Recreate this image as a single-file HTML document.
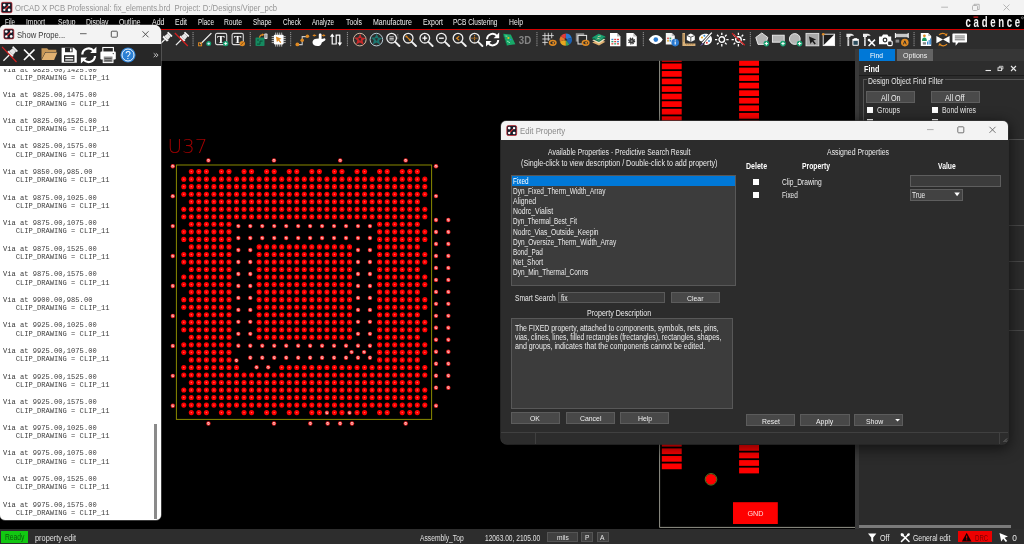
<!DOCTYPE html>
<html><head><meta charset="utf-8"><title>OrCAD X PCB Professional</title>
<style>
html,body{margin:0;padding:0;background:#000;}
body{width:1024px;height:544px;position:relative;overflow:hidden;font-family:"Liberation Sans",sans-serif;}
.t{position:absolute;white-space:pre;}
.b{position:absolute;box-sizing:border-box;}
svg{position:absolute;left:0;top:0;overflow:visible;}
#root{position:absolute;left:0;top:0;width:1024px;height:544px;overflow:hidden;will-change:transform;}
</style></head><body><div id="root">
<div class="b" style="left:0.0px;top:0.0px;width:1024.0px;height:15.2px;background:#f3f3f3;"></div>
<svg width="1024" height="16" viewBox="0 0 1024 16"><rect x="1.4" y="2.3" width="10.6" height="10.4" rx="1.4" fill="#161c2a" stroke="#c8202a" stroke-width="0.7"/><line x1="4.2" y1="10" x2="9.2" y2="5" stroke="#e03030" stroke-width="1.1"/><circle cx="4.3" cy="5.1" r="1.35" fill="#fff"/><circle cx="9.1" cy="9.9" r="1.35" fill="#fff"/><circle cx="4.3" cy="9.9" r="1.15" fill="#e8f0f0"/><circle cx="9.1" cy="5.1" r="1.15" fill="#e8f0f0"/><path d="M941.2 7.2h6.8" stroke="#a6a6a6" stroke-width="0.8" fill="none"/><rect x="972.5" y="5.5" width="5" height="5" rx="1" fill="none" stroke="#a6a6a6" stroke-width="0.8"/><path d="M974 5.5v-1.2h5.2v5.2h-1.5" fill="none" stroke="#a6a6a6" stroke-width="0.8"/><path d="M1003.5 4.5l6 6m0-6l-6 6" stroke="#a6a6a6" stroke-width="0.8" fill="none"/></svg>
<div class="t" style="left:15.0px;top:1.5px;font-size:9px;line-height:13px;color:#959595;transform-origin:0 50%;transform:scaleX(0.8550);">OrCAD X PCB Professional: fix_elements.brd  Project: D:/Designs/Viper_pcb</div>
<div class="b" style="left:0.0px;top:15.2px;width:1024.0px;height:13.6px;background:#000;"></div>
<div class="b" style="left:0.0px;top:28.7px;width:1024.0px;height:1.7px;background:#d40000;"></div>
<div class="t" style="left:5.0px;top:15.9px;font-size:8.3px;line-height:12px;color:#f0f0f0;transform-origin:0 50%;transform:scaleX(0.7478);">File</div>
<div class="t" style="left:26.0px;top:15.9px;font-size:8.3px;line-height:12px;color:#f0f0f0;transform-origin:0 50%;transform:scaleX(0.8078);">Import</div>
<div class="t" style="left:57.5px;top:15.9px;font-size:8.3px;line-height:12px;color:#f0f0f0;transform-origin:0 50%;transform:scaleX(0.8069);">Setup</div>
<div class="t" style="left:86.0px;top:15.9px;font-size:8.3px;line-height:12px;color:#f0f0f0;transform-origin:0 50%;transform:scaleX(0.8268);">Display</div>
<div class="t" style="left:119.0px;top:15.9px;font-size:8.3px;line-height:12px;color:#f0f0f0;transform-origin:0 50%;transform:scaleX(0.8176);">Outline</div>
<div class="t" style="left:151.5px;top:15.9px;font-size:8.3px;line-height:12px;color:#f0f0f0;transform-origin:0 50%;transform:scaleX(0.8465);">Add</div>
<div class="t" style="left:174.5px;top:15.9px;font-size:8.3px;line-height:12px;color:#f0f0f0;transform-origin:0 50%;transform:scaleX(0.8390);">Edit</div>
<div class="t" style="left:197.5px;top:15.9px;font-size:8.3px;line-height:12px;color:#f0f0f0;transform-origin:0 50%;transform:scaleX(0.7707);">Place</div>
<div class="t" style="left:224.0px;top:15.9px;font-size:8.3px;line-height:12px;color:#f0f0f0;transform-origin:0 50%;transform:scaleX(0.8128);">Route</div>
<div class="t" style="left:253.0px;top:15.9px;font-size:8.3px;line-height:12px;color:#f0f0f0;transform-origin:0 50%;transform:scaleX(0.7709);">Shape</div>
<div class="t" style="left:283.0px;top:15.9px;font-size:8.3px;line-height:12px;color:#f0f0f0;transform-origin:0 50%;transform:scaleX(0.7651);">Check</div>
<div class="t" style="left:311.5px;top:15.9px;font-size:8.3px;line-height:12px;color:#f0f0f0;transform-origin:0 50%;transform:scaleX(0.7451);">Analyze</div>
<div class="t" style="left:345.5px;top:15.9px;font-size:8.3px;line-height:12px;color:#f0f0f0;transform-origin:0 50%;transform:scaleX(0.8258);">Tools</div>
<div class="t" style="left:372.5px;top:15.9px;font-size:8.3px;line-height:12px;color:#f0f0f0;transform-origin:0 50%;transform:scaleX(0.8454);">Manufacture</div>
<div class="t" style="left:422.5px;top:15.9px;font-size:8.3px;line-height:12px;color:#f0f0f0;transform-origin:0 50%;transform:scaleX(0.8338);">Export</div>
<div class="t" style="left:453.0px;top:15.9px;font-size:8.3px;line-height:12px;color:#f0f0f0;transform-origin:0 50%;transform:scaleX(0.7843);">PCB Clustering</div>
<div class="t" style="left:509.0px;top:15.9px;font-size:8.3px;line-height:12px;color:#f0f0f0;transform-origin:0 50%;transform:scaleX(0.8202);">Help</div>
<svg width="1024" height="30" viewBox="0 0 1024 30"><text x="965.6" y="0" transform="translate(0,27) scale(1,1.46)" font-size="9.6" font-weight="700" font-family="Liberation Sans, sans-serif" fill="#f4f4f4" textLength="54.6" lengthAdjust="spacing">cadence</text><rect x="973.5" y="16.5" width="4.700" height="1.200" fill="#e02020"/><circle cx="1022.400" cy="17.800" r="1" fill="none" stroke="#ccc" stroke-width=".5"/></svg>
<div class="b" style="left:0.0px;top:30.4px;width:1024.0px;height:30.4px;background:#2d2d2d;"></div>
<div class="b" style="left:0.0px;top:61.0px;width:855.0px;height:468.4px;background:#000;"></div>
<div class="b" style="left:855.0px;top:48.5px;width:169.0px;height:480.9px;background:#2b2b2b;"></div>
<div class="b" style="left:855.0px;top:48.5px;width:3.6px;height:480.9px;background:#393939;"></div>
<div class="b" style="left:858.6px;top:48.5px;width:165.4px;height:12.7px;background:#363636;"></div>
<div class="b" style="left:858.8px;top:49.2px;width:36.0px;height:12.0px;background:#0078d7;"></div>
<div class="b" style="left:897.0px;top:49.2px;width:36.2px;height:12.0px;background:#646464;"></div>
<div class="t" style="left:870.3px;top:49.9px;font-size:8px;line-height:11px;color:#fff;transform-origin:0 50%;transform:scaleX(0.8290);">Find</div>
<div class="t" style="left:903.0px;top:49.9px;font-size:8px;line-height:11px;color:#f0f0f0;transform-origin:0 50%;transform:scaleX(0.8814);">Options</div>
<div class="b" style="left:858.6px;top:61.2px;width:165.4px;height:14.2px;background:#2d2d2d;"></div>
<div class="t" style="left:863.9px;top:62.8px;font-size:8.6px;line-height:12px;color:#fff;font-weight:700;transform-origin:0 50%;transform:scaleX(0.8486);">Find</div>
<div class="b" style="left:858.6px;top:75.0px;width:165.4px;height:1.0px;background:#1c1c1c;"></div>
<svg width="1024" height="130" viewBox="0 0 1024 130"><path d="M985.5 70.5h5.5" stroke="#e8e8e8" stroke-width="1.1"/><rect x="998" y="67.8" width="3.6" height="2.8" fill="none" stroke="#e8e8e8" stroke-width="0.9"/><path d="M999.3 67.5v-1.2h3.6v2.8h-1.2" fill="none" stroke="#e8e8e8" stroke-width="0.8"/><path d="M1011 66l5 5m0-5l-5 5" stroke="#e8e8e8" stroke-width="1.1"/></svg>
<div class="b" style="left:863.0px;top:79.2px;width:167.0px;height:60.8px;background:transparent;border:1px solid #555;"></div>
<div class="b" style="left:866.5px;top:77.0px;width:78.0px;height:8.0px;background:#2b2b2b;"></div>
<div class="t" style="left:867.6px;top:74.8px;font-size:8.3px;line-height:12px;color:#e8e8e8;transform-origin:0 50%;transform:scaleX(0.8256);">Design Object Find Filter</div>
<div class="b" style="left:866.0px;top:91.0px;width:49.0px;height:12.0px;background:#4a4a4a;border:1px solid #5e5e5e;"></div>
<div class="b" style="left:931.0px;top:91.0px;width:49.0px;height:12.0px;background:#4a4a4a;border:1px solid #5e5e5e;"></div>
<div class="t" style="left:880.6px;top:91.6px;font-size:8.3px;line-height:12px;color:#f0f0f0;transform-origin:0 50%;transform:scaleX(0.8672);">All On</div>
<div class="t" style="left:945.4px;top:91.6px;font-size:8.3px;line-height:12px;color:#f0f0f0;transform-origin:0 50%;transform:scaleX(0.8731);">All Off</div>
<div class="b" style="left:867.0px;top:106.6px;width:6.3px;height:6.4px;background:#fff;"></div>
<div class="b" style="left:931.7px;top:106.6px;width:6.3px;height:6.4px;background:#fff;"></div>
<div class="t" style="left:876.8px;top:104.2px;font-size:8.3px;line-height:12px;color:#e8e8e8;transform-origin:0 50%;transform:scaleX(0.8414);">Groups</div>
<div class="t" style="left:941.5px;top:104.2px;font-size:8.3px;line-height:12px;color:#e8e8e8;transform-origin:0 50%;transform:scaleX(0.8281);">Bond wires</div>
<div class="b" style="left:867.0px;top:118.6px;width:6.3px;height:6.4px;background:#fff;"></div>
<div class="b" style="left:931.7px;top:118.6px;width:6.3px;height:6.4px;background:#fff;"></div>
<div class="b" style="left:1008.5px;top:224.5px;width:15.5px;height:1.0px;background:#474747;"></div>
<div class="b" style="left:1008.5px;top:260.7px;width:15.5px;height:1.0px;background:#474747;"></div>
<div class="b" style="left:1008.5px;top:288.5px;width:15.5px;height:1.0px;background:#474747;"></div>
<div class="b" style="left:1008.5px;top:329.8px;width:15.5px;height:1.0px;background:#474747;"></div>
<div class="b" style="left:858.8px;top:524.6px;width:152.2px;height:3.6px;background:#7a7a7a;"></div>
<div class="b" style="left:0.0px;top:529.4px;width:1024.0px;height:14.6px;background:#2d2d2d;"></div>
<div class="b" style="left:1.0px;top:531.0px;width:26.5px;height:11.6px;background:#12c812;"></div>
<div class="t" style="left:4.5px;top:531.4px;font-size:8.3px;line-height:12px;color:#0a5a0a;transform-origin:0 50%;transform:scaleX(0.8128);">Ready</div>
<div class="t" style="left:35.2px;top:531.5px;font-size:8.3px;line-height:12px;color:#e0e0e0;transform-origin:0 50%;transform:scaleX(0.8887);">property edit</div>
<div class="t" style="left:419.8px;top:531.5px;font-size:8.3px;line-height:12px;color:#e0e0e0;transform-origin:0 50%;transform:scaleX(0.8097);">Assembly_Top</div>
<div class="t" style="left:484.5px;top:531.5px;font-size:8.3px;line-height:12px;color:#e0e0e0;transform-origin:0 50%;transform:scaleX(0.7959);">12063.00, 2105.00</div>
<div class="b" style="left:547.2px;top:531.5px;width:30.5px;height:10.9px;background:#404040;border:1px solid #555;"></div>
<div class="t" style="left:556.5px;top:532.4px;font-size:7.9px;line-height:11px;color:#e8e8e8;transform-origin:0 50%;transform:scaleX(0.8405);">mils</div>
<div class="b" style="left:581.0px;top:531.5px;width:11.9px;height:10.9px;background:#404040;border:1px solid #555;"></div>
<div class="t" style="left:584.7px;top:532.4px;font-size:7.9px;line-height:11px;color:#e8e8e8;transform-origin:0 50%;transform:scaleX(0.8405);">P</div>
<div class="b" style="left:596.7px;top:531.5px;width:11.9px;height:10.9px;background:#404040;border:1px solid #555;"></div>
<div class="t" style="left:600.4px;top:532.4px;font-size:7.9px;line-height:11px;color:#e8e8e8;transform-origin:0 50%;transform:scaleX(0.8405);">A</div>
<div class="t" style="left:880.0px;top:531.6px;font-size:8.3px;line-height:12px;color:#e8e8e8;transform-origin:0 50%;transform:scaleX(0.8610);">Off</div>
<div class="t" style="left:913.3px;top:531.6px;font-size:8.3px;line-height:12px;color:#e8e8e8;transform-origin:0 50%;transform:scaleX(0.8294);">General edit</div>
<div class="b" style="left:958.3px;top:531.2px;width:34.2px;height:11.3px;background:#ee0000;"></div>
<div class="t" style="left:974.8px;top:531.6px;font-size:8.3px;line-height:12px;color:#7c0000;transform-origin:0 50%;transform:scaleX(0.7340);">DRC</div>
<div class="t" style="left:1012.3px;top:531.6px;font-size:8.3px;line-height:12px;color:#e8e8e8;">0</div>
<svg width="1024" height="544" viewBox="0 0 1024 544"><path d="M868 533.5h8.4l-3.2 4v4.5l-2 -1.2v-3.3z" fill="#fff"/><path d="M901.5 534l7.5 7.5M909 534l-7.5 7.5" stroke="#fff" stroke-width="1.6" stroke-linecap="round"/><circle cx="902.3" cy="534.8" r="1.6" fill="#fff"/><circle cx="908.3" cy="534.8" r="1.3" fill="#fff"/><path d="M966.7 532.8l4.800 8.600h-9.600z" fill="#140000"/><path d="M966.7 535.600v3" stroke="#e00" stroke-width="1"/><circle cx="966.7" cy="539.800" r="0.55" fill="#e00"/><path d="M999.5 533l8.5 3.6-3.4 1.2 2.6 3.2-1.4 1.1-2.6-3.3-2 2.6z" fill="#fff"/></svg>
<svg width="1024" height="544" viewBox="0 0 1024 544" shape-rendering="auto"><path d="M659.6 60.8V527.4H855" fill="none" stroke="#a4a498" stroke-width="0.9"/><rect x="661.8" y="60.80" width="19.9" height="0.90" fill="#f00"/><rect x="661.8" y="63.50" width="19.9" height="5.75" fill="#f00"/><rect x="661.8" y="71.04" width="19.9" height="5.75" fill="#f00"/><rect x="661.8" y="78.59" width="19.9" height="5.75" fill="#f00"/><rect x="661.8" y="86.14" width="19.9" height="5.75" fill="#f00"/><rect x="661.8" y="93.69" width="19.9" height="5.75" fill="#f00"/><rect x="661.8" y="101.23" width="19.9" height="5.75" fill="#f00"/><rect x="661.8" y="108.78" width="19.9" height="5.75" fill="#f00"/><rect x="661.8" y="116.33" width="19.9" height="5.75" fill="#f00"/><rect x="661.8" y="123.87" width="19.9" height="5.75" fill="#f00"/><rect x="661.8" y="131.42" width="19.9" height="5.75" fill="#f00"/><rect x="661.8" y="138.97" width="19.9" height="5.75" fill="#f00"/><rect x="661.8" y="146.51" width="19.9" height="5.75" fill="#f00"/><rect x="661.8" y="154.06" width="19.9" height="5.75" fill="#f00"/><rect x="661.8" y="161.61" width="19.9" height="5.75" fill="#f00"/><rect x="661.8" y="169.16" width="19.9" height="5.75" fill="#f00"/><rect x="661.8" y="176.70" width="19.9" height="5.75" fill="#f00"/><rect x="661.8" y="184.25" width="19.9" height="5.75" fill="#f00"/><rect x="661.8" y="191.80" width="19.9" height="5.75" fill="#f00"/><rect x="661.8" y="199.34" width="19.9" height="5.75" fill="#f00"/><rect x="661.8" y="206.89" width="19.9" height="5.75" fill="#f00"/><rect x="661.8" y="214.44" width="19.9" height="5.75" fill="#f00"/><rect x="661.8" y="221.98" width="19.9" height="5.75" fill="#f00"/><rect x="661.8" y="229.53" width="19.9" height="5.75" fill="#f00"/><rect x="661.8" y="237.08" width="19.9" height="5.75" fill="#f00"/><rect x="661.8" y="244.62" width="19.9" height="5.75" fill="#f00"/><rect x="661.8" y="252.17" width="19.9" height="5.75" fill="#f00"/><rect x="661.8" y="259.72" width="19.9" height="5.75" fill="#f00"/><rect x="661.8" y="267.27" width="19.9" height="5.75" fill="#f00"/><rect x="661.8" y="274.81" width="19.9" height="5.75" fill="#f00"/><rect x="661.8" y="282.36" width="19.9" height="5.75" fill="#f00"/><rect x="661.8" y="289.91" width="19.9" height="5.75" fill="#f00"/><rect x="661.8" y="297.45" width="19.9" height="5.75" fill="#f00"/><rect x="661.8" y="305.00" width="19.9" height="5.75" fill="#f00"/><rect x="661.8" y="312.55" width="19.9" height="5.75" fill="#f00"/><rect x="661.8" y="320.09" width="19.9" height="5.75" fill="#f00"/><rect x="661.8" y="327.64" width="19.9" height="5.75" fill="#f00"/><rect x="661.8" y="335.19" width="19.9" height="5.75" fill="#f00"/><rect x="661.8" y="342.74" width="19.9" height="5.75" fill="#f00"/><rect x="661.8" y="350.28" width="19.9" height="5.75" fill="#f00"/><rect x="661.8" y="357.83" width="19.9" height="5.75" fill="#f00"/><rect x="661.8" y="365.38" width="19.9" height="5.75" fill="#f00"/><rect x="661.8" y="372.92" width="19.9" height="5.75" fill="#f00"/><rect x="661.8" y="380.47" width="19.9" height="5.75" fill="#f00"/><rect x="661.8" y="388.02" width="19.9" height="5.75" fill="#f00"/><rect x="661.8" y="395.56" width="19.9" height="5.75" fill="#f00"/><rect x="661.8" y="403.11" width="19.9" height="5.75" fill="#f00"/><rect x="661.8" y="410.66" width="19.9" height="5.75" fill="#f00"/><rect x="661.8" y="418.21" width="19.9" height="5.75" fill="#f00"/><rect x="661.8" y="425.75" width="19.9" height="5.75" fill="#f00"/><rect x="661.8" y="433.30" width="19.9" height="5.75" fill="#f00"/><rect x="661.8" y="440.85" width="19.9" height="5.75" fill="#f00"/><rect x="661.8" y="448.39" width="19.9" height="5.75" fill="#f00"/><rect x="661.8" y="455.94" width="19.9" height="5.75" fill="#f00"/><rect x="661.8" y="463.49" width="19.9" height="5.75" fill="#f00"/><rect x="739.1" y="60.80" width="19.9" height="5.05" fill="#f00"/><rect x="739.1" y="67.65" width="19.9" height="5.75" fill="#f00"/><rect x="739.1" y="75.19" width="19.9" height="5.75" fill="#f00"/><rect x="739.1" y="82.74" width="19.9" height="5.75" fill="#f00"/><rect x="739.1" y="90.29" width="19.9" height="5.75" fill="#f00"/><rect x="739.1" y="97.84" width="19.9" height="5.75" fill="#f00"/><rect x="739.1" y="105.38" width="19.9" height="5.75" fill="#f00"/><rect x="739.1" y="112.93" width="19.9" height="5.75" fill="#f00"/><rect x="739.1" y="120.48" width="19.9" height="5.75" fill="#f00"/><rect x="739.1" y="128.02" width="19.9" height="5.75" fill="#f00"/><rect x="739.1" y="135.57" width="19.9" height="5.75" fill="#f00"/><rect x="739.1" y="143.12" width="19.9" height="5.75" fill="#f00"/><rect x="739.1" y="150.66" width="19.9" height="5.75" fill="#f00"/><rect x="739.1" y="158.21" width="19.9" height="5.75" fill="#f00"/><rect x="739.1" y="165.76" width="19.9" height="5.75" fill="#f00"/><rect x="739.1" y="173.31" width="19.9" height="5.75" fill="#f00"/><rect x="739.1" y="180.85" width="19.9" height="5.75" fill="#f00"/><rect x="739.1" y="188.40" width="19.9" height="5.75" fill="#f00"/><rect x="739.1" y="195.95" width="19.9" height="5.75" fill="#f00"/><rect x="739.1" y="203.49" width="19.9" height="5.75" fill="#f00"/><rect x="739.1" y="211.04" width="19.9" height="5.75" fill="#f00"/><rect x="739.1" y="218.59" width="19.9" height="5.75" fill="#f00"/><rect x="739.1" y="226.13" width="19.9" height="5.75" fill="#f00"/><rect x="739.1" y="233.68" width="19.9" height="5.75" fill="#f00"/><rect x="739.1" y="241.23" width="19.9" height="5.75" fill="#f00"/><rect x="739.1" y="248.77" width="19.9" height="5.75" fill="#f00"/><rect x="739.1" y="256.32" width="19.9" height="5.75" fill="#f00"/><rect x="739.1" y="263.87" width="19.9" height="5.75" fill="#f00"/><rect x="739.1" y="271.42" width="19.9" height="5.75" fill="#f00"/><rect x="739.1" y="278.96" width="19.9" height="5.75" fill="#f00"/><rect x="739.1" y="286.51" width="19.9" height="5.75" fill="#f00"/><rect x="739.1" y="294.06" width="19.9" height="5.75" fill="#f00"/><rect x="739.1" y="301.60" width="19.9" height="5.75" fill="#f00"/><rect x="739.1" y="309.15" width="19.9" height="5.75" fill="#f00"/><rect x="739.1" y="316.70" width="19.9" height="5.75" fill="#f00"/><rect x="739.1" y="324.25" width="19.9" height="5.75" fill="#f00"/><rect x="739.1" y="331.79" width="19.9" height="5.75" fill="#f00"/><rect x="739.1" y="339.34" width="19.9" height="5.75" fill="#f00"/><rect x="739.1" y="346.89" width="19.9" height="5.75" fill="#f00"/><rect x="739.1" y="354.43" width="19.9" height="5.75" fill="#f00"/><rect x="739.1" y="361.98" width="19.9" height="5.75" fill="#f00"/><rect x="739.1" y="369.53" width="19.9" height="5.75" fill="#f00"/><rect x="739.1" y="377.07" width="19.9" height="5.75" fill="#f00"/><rect x="739.1" y="384.62" width="19.9" height="5.75" fill="#f00"/><rect x="739.1" y="392.17" width="19.9" height="5.75" fill="#f00"/><rect x="739.1" y="399.72" width="19.9" height="5.75" fill="#f00"/><rect x="739.1" y="407.26" width="19.9" height="5.75" fill="#f00"/><rect x="739.1" y="414.81" width="19.9" height="5.75" fill="#f00"/><rect x="739.1" y="422.36" width="19.9" height="5.75" fill="#f00"/><rect x="739.1" y="429.90" width="19.9" height="5.75" fill="#f00"/><rect x="739.1" y="437.45" width="19.9" height="5.75" fill="#f00"/><rect x="739.1" y="445.00" width="19.9" height="5.75" fill="#f00"/><rect x="739.1" y="452.54" width="19.9" height="5.75" fill="#f00"/><rect x="739.1" y="460.09" width="19.9" height="5.75" fill="#f00"/><rect x="739.1" y="467.64" width="19.9" height="5.75" fill="#f00"/><rect x="733" y="502.2" width="44.8" height="21.8" fill="#f00"/><text x="755.5" y="516.3" font-size="7.2" fill="#ffd8d8" text-anchor="middle" font-family="Liberation Sans, sans-serif">GND</text><circle cx="711" cy="479.3" r="5.4" fill="#f00"/><circle cx="711" cy="479.3" r="5.8" fill="none" stroke="#6e8a2a" stroke-width="0.8"/><rect x="176.4" y="165" width="255.2" height="254.4" fill="none" stroke="#8a8a00" stroke-width="1"/><text x="167.4" y="152.9" font-size="19.4" fill="#a00000" font-family="DejaVu Sans Light, DejaVu Sans, Liberation Sans, sans-serif" font-weight="200" textLength="40.2" lengthAdjust="spacingAndGlyphs">U37</text><circle cx="191.33" cy="171.60" r="2.55" fill="#f00"/><circle cx="191.33" cy="171.60" r="0.7" fill="#ff6a6a"/><circle cx="198.86" cy="171.60" r="2.55" fill="#f00"/><circle cx="198.86" cy="171.60" r="0.7" fill="#ff6a6a"/><circle cx="206.40" cy="171.60" r="2.55" fill="#f00"/><circle cx="206.40" cy="171.60" r="0.7" fill="#ff6a6a"/><circle cx="221.46" cy="171.60" r="2.55" fill="#f00"/><circle cx="221.46" cy="171.60" r="0.7" fill="#ff6a6a"/><circle cx="228.99" cy="171.60" r="2.55" fill="#f00"/><circle cx="228.99" cy="171.60" r="0.7" fill="#ff6a6a"/><circle cx="244.06" cy="171.60" r="2.55" fill="#f00"/><circle cx="244.06" cy="171.60" r="0.7" fill="#ff6a6a"/><circle cx="251.59" cy="171.60" r="2.55" fill="#f00"/><circle cx="251.59" cy="171.60" r="0.7" fill="#ff6a6a"/><circle cx="266.65" cy="171.60" r="2.55" fill="#f00"/><circle cx="266.65" cy="171.60" r="0.7" fill="#ff6a6a"/><circle cx="274.18" cy="171.60" r="2.55" fill="#f00"/><circle cx="274.18" cy="171.60" r="0.7" fill="#ff6a6a"/><circle cx="289.25" cy="171.60" r="2.55" fill="#f00"/><circle cx="289.25" cy="171.60" r="0.7" fill="#ff6a6a"/><circle cx="296.78" cy="171.60" r="2.55" fill="#f00"/><circle cx="296.78" cy="171.60" r="0.7" fill="#ff6a6a"/><circle cx="311.84" cy="171.60" r="2.55" fill="#f00"/><circle cx="311.84" cy="171.60" r="0.7" fill="#ff6a6a"/><circle cx="319.38" cy="171.60" r="2.55" fill="#f00"/><circle cx="319.38" cy="171.60" r="0.7" fill="#ff6a6a"/><circle cx="334.44" cy="171.60" r="2.55" fill="#f00"/><circle cx="334.44" cy="171.60" r="0.7" fill="#ff6a6a"/><circle cx="341.97" cy="171.60" r="2.55" fill="#f00"/><circle cx="341.97" cy="171.60" r="0.7" fill="#ff6a6a"/><circle cx="357.04" cy="171.60" r="2.55" fill="#f00"/><circle cx="357.04" cy="171.60" r="0.7" fill="#ff6a6a"/><circle cx="364.57" cy="171.60" r="2.55" fill="#f00"/><circle cx="364.57" cy="171.60" r="0.7" fill="#ff6a6a"/><circle cx="379.63" cy="171.60" r="2.55" fill="#f00"/><circle cx="379.63" cy="171.60" r="0.7" fill="#ff6a6a"/><circle cx="387.16" cy="171.60" r="2.55" fill="#f00"/><circle cx="387.16" cy="171.60" r="0.7" fill="#ff6a6a"/><circle cx="402.23" cy="171.60" r="2.55" fill="#f00"/><circle cx="402.23" cy="171.60" r="0.7" fill="#ff6a6a"/><circle cx="409.76" cy="171.60" r="2.55" fill="#f00"/><circle cx="409.76" cy="171.60" r="0.7" fill="#ff6a6a"/><circle cx="417.29" cy="171.60" r="2.55" fill="#f00"/><circle cx="417.29" cy="171.60" r="0.7" fill="#ff6a6a"/><circle cx="183.80" cy="179.13" r="2.55" fill="#f00"/><circle cx="183.80" cy="179.13" r="0.7" fill="#ff6a6a"/><circle cx="191.33" cy="179.13" r="2.55" fill="#f00"/><circle cx="191.33" cy="179.13" r="0.7" fill="#ff6a6a"/><circle cx="198.86" cy="179.13" r="2.55" fill="#f00"/><circle cx="198.86" cy="179.13" r="0.7" fill="#ff6a6a"/><circle cx="206.40" cy="179.13" r="2.55" fill="#f00"/><circle cx="206.40" cy="179.13" r="0.7" fill="#ff6a6a"/><circle cx="213.93" cy="179.13" r="2.55" fill="#f00"/><circle cx="213.93" cy="179.13" r="0.7" fill="#ff6a6a"/><circle cx="221.46" cy="179.13" r="2.55" fill="#f00"/><circle cx="221.46" cy="179.13" r="0.7" fill="#ff6a6a"/><circle cx="228.99" cy="179.13" r="2.55" fill="#f00"/><circle cx="228.99" cy="179.13" r="0.7" fill="#ff6a6a"/><circle cx="236.52" cy="179.13" r="2.55" fill="#f00"/><circle cx="236.52" cy="179.13" r="0.7" fill="#ff6a6a"/><circle cx="244.06" cy="179.13" r="2.55" fill="#f00"/><circle cx="244.06" cy="179.13" r="0.7" fill="#ff6a6a"/><circle cx="251.59" cy="179.13" r="2.55" fill="#f00"/><circle cx="251.59" cy="179.13" r="0.7" fill="#ff6a6a"/><circle cx="259.12" cy="179.13" r="2.55" fill="#f00"/><circle cx="259.12" cy="179.13" r="0.7" fill="#ff6a6a"/><circle cx="266.65" cy="179.13" r="2.55" fill="#f00"/><circle cx="266.65" cy="179.13" r="0.7" fill="#ff6a6a"/><circle cx="274.18" cy="179.13" r="2.55" fill="#f00"/><circle cx="274.18" cy="179.13" r="0.7" fill="#ff6a6a"/><circle cx="281.72" cy="179.13" r="2.55" fill="#f00"/><circle cx="281.72" cy="179.13" r="0.7" fill="#ff6a6a"/><circle cx="289.25" cy="179.13" r="2.55" fill="#f00"/><circle cx="289.25" cy="179.13" r="0.7" fill="#ff6a6a"/><circle cx="296.78" cy="179.13" r="2.55" fill="#f00"/><circle cx="296.78" cy="179.13" r="0.7" fill="#ff6a6a"/><circle cx="304.31" cy="179.13" r="2.55" fill="#f00"/><circle cx="304.31" cy="179.13" r="0.7" fill="#ff6a6a"/><circle cx="311.84" cy="179.13" r="2.55" fill="#f00"/><circle cx="311.84" cy="179.13" r="0.7" fill="#ff6a6a"/><circle cx="319.38" cy="179.13" r="2.55" fill="#f00"/><circle cx="319.38" cy="179.13" r="0.7" fill="#ff6a6a"/><circle cx="326.91" cy="179.13" r="2.55" fill="#f00"/><circle cx="326.91" cy="179.13" r="0.7" fill="#ff6a6a"/><circle cx="334.44" cy="179.13" r="2.55" fill="#f00"/><circle cx="334.44" cy="179.13" r="0.7" fill="#ff6a6a"/><circle cx="341.97" cy="179.13" r="2.55" fill="#f00"/><circle cx="341.97" cy="179.13" r="0.7" fill="#ff6a6a"/><circle cx="349.50" cy="179.13" r="2.55" fill="#f00"/><circle cx="349.50" cy="179.13" r="0.7" fill="#ff6a6a"/><circle cx="357.04" cy="179.13" r="2.55" fill="#f00"/><circle cx="357.04" cy="179.13" r="0.7" fill="#ff6a6a"/><circle cx="364.57" cy="179.13" r="2.55" fill="#f00"/><circle cx="364.57" cy="179.13" r="0.7" fill="#ff6a6a"/><circle cx="372.10" cy="179.13" r="2.55" fill="#f00"/><circle cx="372.10" cy="179.13" r="0.7" fill="#ff6a6a"/><circle cx="379.63" cy="179.13" r="2.55" fill="#f00"/><circle cx="379.63" cy="179.13" r="0.7" fill="#ff6a6a"/><circle cx="387.16" cy="179.13" r="2.55" fill="#f00"/><circle cx="387.16" cy="179.13" r="0.7" fill="#ff6a6a"/><circle cx="394.70" cy="179.13" r="2.55" fill="#f00"/><circle cx="394.70" cy="179.13" r="0.7" fill="#ff6a6a"/><circle cx="402.23" cy="179.13" r="2.55" fill="#f00"/><circle cx="402.23" cy="179.13" r="0.7" fill="#ff6a6a"/><circle cx="409.76" cy="179.13" r="2.55" fill="#f00"/><circle cx="409.76" cy="179.13" r="0.7" fill="#ff6a6a"/><circle cx="417.29" cy="179.13" r="2.55" fill="#f00"/><circle cx="417.29" cy="179.13" r="0.7" fill="#ff6a6a"/><circle cx="424.82" cy="179.13" r="2.55" fill="#f00"/><circle cx="424.82" cy="179.13" r="0.7" fill="#ff6a6a"/><circle cx="183.80" cy="186.66" r="2.55" fill="#f00"/><circle cx="183.80" cy="186.66" r="0.7" fill="#ff6a6a"/><circle cx="191.33" cy="186.66" r="2.55" fill="#f00"/><circle cx="191.33" cy="186.66" r="0.7" fill="#ff6a6a"/><circle cx="198.86" cy="186.66" r="2.55" fill="#f00"/><circle cx="198.86" cy="186.66" r="0.7" fill="#ff6a6a"/><circle cx="206.40" cy="186.66" r="2.55" fill="#f00"/><circle cx="206.40" cy="186.66" r="0.7" fill="#ff6a6a"/><circle cx="213.93" cy="186.66" r="2.55" fill="#f00"/><circle cx="213.93" cy="186.66" r="0.7" fill="#ff6a6a"/><circle cx="221.46" cy="186.66" r="2.55" fill="#f00"/><circle cx="221.46" cy="186.66" r="0.7" fill="#ff6a6a"/><circle cx="228.99" cy="186.66" r="2.55" fill="#f00"/><circle cx="228.99" cy="186.66" r="0.7" fill="#ff6a6a"/><circle cx="236.52" cy="186.66" r="2.55" fill="#f00"/><circle cx="236.52" cy="186.66" r="0.7" fill="#ff6a6a"/><circle cx="244.06" cy="186.66" r="2.55" fill="#f00"/><circle cx="244.06" cy="186.66" r="0.7" fill="#ff6a6a"/><circle cx="251.59" cy="186.66" r="2.55" fill="#f00"/><circle cx="251.59" cy="186.66" r="0.7" fill="#ff6a6a"/><circle cx="259.12" cy="186.66" r="2.55" fill="#f00"/><circle cx="259.12" cy="186.66" r="0.7" fill="#ff6a6a"/><circle cx="266.65" cy="186.66" r="2.55" fill="#f00"/><circle cx="266.65" cy="186.66" r="0.7" fill="#ff6a6a"/><circle cx="274.18" cy="186.66" r="2.55" fill="#f00"/><circle cx="274.18" cy="186.66" r="0.7" fill="#ff6a6a"/><circle cx="281.72" cy="186.66" r="2.55" fill="#f00"/><circle cx="281.72" cy="186.66" r="0.7" fill="#ff6a6a"/><circle cx="289.25" cy="186.66" r="2.55" fill="#f00"/><circle cx="289.25" cy="186.66" r="0.7" fill="#ff6a6a"/><circle cx="296.78" cy="186.66" r="2.55" fill="#f00"/><circle cx="296.78" cy="186.66" r="0.7" fill="#ff6a6a"/><circle cx="304.31" cy="186.66" r="2.55" fill="#f00"/><circle cx="304.31" cy="186.66" r="0.7" fill="#ff6a6a"/><circle cx="311.84" cy="186.66" r="2.55" fill="#f00"/><circle cx="311.84" cy="186.66" r="0.7" fill="#ff6a6a"/><circle cx="319.38" cy="186.66" r="2.55" fill="#f00"/><circle cx="319.38" cy="186.66" r="0.7" fill="#ff6a6a"/><circle cx="326.91" cy="186.66" r="2.55" fill="#f00"/><circle cx="326.91" cy="186.66" r="0.7" fill="#ff6a6a"/><circle cx="334.44" cy="186.66" r="2.55" fill="#f00"/><circle cx="334.44" cy="186.66" r="0.7" fill="#ff6a6a"/><circle cx="341.97" cy="186.66" r="2.55" fill="#f00"/><circle cx="341.97" cy="186.66" r="0.7" fill="#ff6a6a"/><circle cx="349.50" cy="186.66" r="2.55" fill="#f00"/><circle cx="349.50" cy="186.66" r="0.7" fill="#ff6a6a"/><circle cx="357.04" cy="186.66" r="2.55" fill="#f00"/><circle cx="357.04" cy="186.66" r="0.7" fill="#ff6a6a"/><circle cx="364.57" cy="186.66" r="2.55" fill="#f00"/><circle cx="364.57" cy="186.66" r="0.7" fill="#ff6a6a"/><circle cx="372.10" cy="186.66" r="2.55" fill="#f00"/><circle cx="372.10" cy="186.66" r="0.7" fill="#ff6a6a"/><circle cx="379.63" cy="186.66" r="2.55" fill="#f00"/><circle cx="379.63" cy="186.66" r="0.7" fill="#ff6a6a"/><circle cx="387.16" cy="186.66" r="2.55" fill="#f00"/><circle cx="387.16" cy="186.66" r="0.7" fill="#ff6a6a"/><circle cx="394.70" cy="186.66" r="2.55" fill="#f00"/><circle cx="394.70" cy="186.66" r="0.7" fill="#ff6a6a"/><circle cx="402.23" cy="186.66" r="2.55" fill="#f00"/><circle cx="402.23" cy="186.66" r="0.7" fill="#ff6a6a"/><circle cx="409.76" cy="186.66" r="2.55" fill="#f00"/><circle cx="409.76" cy="186.66" r="0.7" fill="#ff6a6a"/><circle cx="417.29" cy="186.66" r="2.55" fill="#f00"/><circle cx="417.29" cy="186.66" r="0.7" fill="#ff6a6a"/><circle cx="424.82" cy="186.66" r="2.55" fill="#f00"/><circle cx="424.82" cy="186.66" r="0.7" fill="#ff6a6a"/><circle cx="183.80" cy="194.20" r="2.55" fill="#f00"/><circle cx="183.80" cy="194.20" r="0.7" fill="#ff6a6a"/><circle cx="191.33" cy="194.20" r="2.55" fill="#f00"/><circle cx="191.33" cy="194.20" r="0.7" fill="#ff6a6a"/><circle cx="198.86" cy="194.20" r="2.55" fill="#f00"/><circle cx="198.86" cy="194.20" r="0.7" fill="#ff6a6a"/><circle cx="206.40" cy="194.20" r="2.55" fill="#f00"/><circle cx="206.40" cy="194.20" r="0.7" fill="#ff6a6a"/><circle cx="213.93" cy="194.20" r="2.55" fill="#f00"/><circle cx="213.93" cy="194.20" r="0.7" fill="#ff6a6a"/><circle cx="221.46" cy="194.20" r="2.55" fill="#f00"/><circle cx="221.46" cy="194.20" r="0.7" fill="#ff6a6a"/><circle cx="228.99" cy="194.20" r="2.55" fill="#f00"/><circle cx="228.99" cy="194.20" r="0.7" fill="#ff6a6a"/><circle cx="236.52" cy="194.20" r="2.55" fill="#f00"/><circle cx="236.52" cy="194.20" r="0.7" fill="#ff6a6a"/><circle cx="244.06" cy="194.20" r="2.55" fill="#f00"/><circle cx="244.06" cy="194.20" r="0.7" fill="#ff6a6a"/><circle cx="251.59" cy="194.20" r="2.55" fill="#f00"/><circle cx="251.59" cy="194.20" r="0.7" fill="#ff6a6a"/><circle cx="259.12" cy="194.20" r="2.55" fill="#f00"/><circle cx="259.12" cy="194.20" r="0.7" fill="#ff6a6a"/><circle cx="266.65" cy="194.20" r="2.55" fill="#f00"/><circle cx="266.65" cy="194.20" r="0.7" fill="#ff6a6a"/><circle cx="274.18" cy="194.20" r="2.55" fill="#f00"/><circle cx="274.18" cy="194.20" r="0.7" fill="#ff6a6a"/><circle cx="281.72" cy="194.20" r="2.55" fill="#f00"/><circle cx="281.72" cy="194.20" r="0.7" fill="#ff6a6a"/><circle cx="289.25" cy="194.20" r="2.55" fill="#f00"/><circle cx="289.25" cy="194.20" r="0.7" fill="#ff6a6a"/><circle cx="296.78" cy="194.20" r="2.55" fill="#f00"/><circle cx="296.78" cy="194.20" r="0.7" fill="#ff6a6a"/><circle cx="304.31" cy="194.20" r="2.55" fill="#f00"/><circle cx="304.31" cy="194.20" r="0.7" fill="#ff6a6a"/><circle cx="311.84" cy="194.20" r="2.55" fill="#f00"/><circle cx="311.84" cy="194.20" r="0.7" fill="#ff6a6a"/><circle cx="319.38" cy="194.20" r="2.55" fill="#f00"/><circle cx="319.38" cy="194.20" r="0.7" fill="#ff6a6a"/><circle cx="326.91" cy="194.20" r="2.55" fill="#f00"/><circle cx="326.91" cy="194.20" r="0.7" fill="#ff6a6a"/><circle cx="334.44" cy="194.20" r="2.55" fill="#f00"/><circle cx="334.44" cy="194.20" r="0.7" fill="#ff6a6a"/><circle cx="341.97" cy="194.20" r="2.55" fill="#f00"/><circle cx="341.97" cy="194.20" r="0.7" fill="#ff6a6a"/><circle cx="349.50" cy="194.20" r="2.55" fill="#f00"/><circle cx="349.50" cy="194.20" r="0.7" fill="#ff6a6a"/><circle cx="357.04" cy="194.20" r="2.55" fill="#f00"/><circle cx="357.04" cy="194.20" r="0.7" fill="#ff6a6a"/><circle cx="364.57" cy="194.20" r="2.55" fill="#f00"/><circle cx="364.57" cy="194.20" r="0.7" fill="#ff6a6a"/><circle cx="372.10" cy="194.20" r="2.55" fill="#f00"/><circle cx="372.10" cy="194.20" r="0.7" fill="#ff6a6a"/><circle cx="379.63" cy="194.20" r="2.55" fill="#f00"/><circle cx="379.63" cy="194.20" r="0.7" fill="#ff6a6a"/><circle cx="387.16" cy="194.20" r="2.55" fill="#f00"/><circle cx="387.16" cy="194.20" r="0.7" fill="#ff6a6a"/><circle cx="394.70" cy="194.20" r="2.55" fill="#f00"/><circle cx="394.70" cy="194.20" r="0.7" fill="#ff6a6a"/><circle cx="402.23" cy="194.20" r="2.55" fill="#f00"/><circle cx="402.23" cy="194.20" r="0.7" fill="#ff6a6a"/><circle cx="409.76" cy="194.20" r="2.55" fill="#f00"/><circle cx="409.76" cy="194.20" r="0.7" fill="#ff6a6a"/><circle cx="417.29" cy="194.20" r="2.55" fill="#f00"/><circle cx="417.29" cy="194.20" r="0.7" fill="#ff6a6a"/><circle cx="424.82" cy="194.20" r="2.55" fill="#f00"/><circle cx="424.82" cy="194.20" r="0.7" fill="#ff6a6a"/><circle cx="191.33" cy="201.73" r="2.55" fill="#f00"/><circle cx="191.33" cy="201.73" r="0.7" fill="#ff6a6a"/><circle cx="198.86" cy="201.73" r="2.55" fill="#f00"/><circle cx="198.86" cy="201.73" r="0.7" fill="#ff6a6a"/><circle cx="206.40" cy="201.73" r="2.55" fill="#f00"/><circle cx="206.40" cy="201.73" r="0.7" fill="#ff6a6a"/><circle cx="213.93" cy="201.73" r="2.55" fill="#f00"/><circle cx="213.93" cy="201.73" r="0.7" fill="#ff6a6a"/><circle cx="221.46" cy="201.73" r="2.55" fill="#f00"/><circle cx="221.46" cy="201.73" r="0.7" fill="#ff6a6a"/><circle cx="228.99" cy="201.73" r="2.55" fill="#f00"/><circle cx="228.99" cy="201.73" r="0.7" fill="#ff6a6a"/><circle cx="236.52" cy="201.73" r="2.55" fill="#f00"/><circle cx="236.52" cy="201.73" r="0.7" fill="#ff6a6a"/><circle cx="244.06" cy="201.73" r="2.55" fill="#f00"/><circle cx="244.06" cy="201.73" r="0.7" fill="#ff6a6a"/><circle cx="251.59" cy="201.73" r="2.55" fill="#f00"/><circle cx="251.59" cy="201.73" r="0.7" fill="#ff6a6a"/><circle cx="259.12" cy="201.73" r="2.55" fill="#f00"/><circle cx="259.12" cy="201.73" r="0.7" fill="#ff6a6a"/><circle cx="266.65" cy="201.73" r="2.55" fill="#f00"/><circle cx="266.65" cy="201.73" r="0.7" fill="#ff6a6a"/><circle cx="274.18" cy="201.73" r="2.55" fill="#f00"/><circle cx="274.18" cy="201.73" r="0.7" fill="#ff6a6a"/><circle cx="281.72" cy="201.73" r="2.55" fill="#f00"/><circle cx="281.72" cy="201.73" r="0.7" fill="#ff6a6a"/><circle cx="289.25" cy="201.73" r="2.55" fill="#f00"/><circle cx="289.25" cy="201.73" r="0.7" fill="#ff6a6a"/><circle cx="296.78" cy="201.73" r="2.55" fill="#f00"/><circle cx="296.78" cy="201.73" r="0.7" fill="#ff6a6a"/><circle cx="304.31" cy="201.73" r="2.55" fill="#f00"/><circle cx="304.31" cy="201.73" r="0.7" fill="#ff6a6a"/><circle cx="311.84" cy="201.73" r="2.55" fill="#f00"/><circle cx="311.84" cy="201.73" r="0.7" fill="#ff6a6a"/><circle cx="319.38" cy="201.73" r="2.55" fill="#f00"/><circle cx="319.38" cy="201.73" r="0.7" fill="#ff6a6a"/><circle cx="326.91" cy="201.73" r="2.55" fill="#f00"/><circle cx="326.91" cy="201.73" r="0.7" fill="#ff6a6a"/><circle cx="334.44" cy="201.73" r="2.55" fill="#f00"/><circle cx="334.44" cy="201.73" r="0.7" fill="#ff6a6a"/><circle cx="341.97" cy="201.73" r="2.55" fill="#f00"/><circle cx="341.97" cy="201.73" r="0.7" fill="#ff6a6a"/><circle cx="349.50" cy="201.73" r="2.55" fill="#f00"/><circle cx="349.50" cy="201.73" r="0.7" fill="#ff6a6a"/><circle cx="357.04" cy="201.73" r="2.55" fill="#f00"/><circle cx="357.04" cy="201.73" r="0.7" fill="#ff6a6a"/><circle cx="364.57" cy="201.73" r="2.55" fill="#f00"/><circle cx="364.57" cy="201.73" r="0.7" fill="#ff6a6a"/><circle cx="372.10" cy="201.73" r="2.55" fill="#f00"/><circle cx="372.10" cy="201.73" r="0.7" fill="#ff6a6a"/><circle cx="379.63" cy="201.73" r="2.55" fill="#f00"/><circle cx="379.63" cy="201.73" r="0.7" fill="#ff6a6a"/><circle cx="387.16" cy="201.73" r="2.55" fill="#f00"/><circle cx="387.16" cy="201.73" r="0.7" fill="#ff6a6a"/><circle cx="394.70" cy="201.73" r="2.55" fill="#f00"/><circle cx="394.70" cy="201.73" r="0.7" fill="#ff6a6a"/><circle cx="402.23" cy="201.73" r="2.55" fill="#f00"/><circle cx="402.23" cy="201.73" r="0.7" fill="#ff6a6a"/><circle cx="409.76" cy="201.73" r="2.55" fill="#f00"/><circle cx="409.76" cy="201.73" r="0.7" fill="#ff6a6a"/><circle cx="417.29" cy="201.73" r="2.55" fill="#f00"/><circle cx="417.29" cy="201.73" r="0.7" fill="#ff6a6a"/><circle cx="183.80" cy="209.26" r="2.55" fill="#f00"/><circle cx="183.80" cy="209.26" r="0.7" fill="#ff6a6a"/><circle cx="191.33" cy="209.26" r="2.55" fill="#f00"/><circle cx="191.33" cy="209.26" r="0.7" fill="#ff6a6a"/><circle cx="198.86" cy="209.26" r="2.55" fill="#f00"/><circle cx="198.86" cy="209.26" r="0.7" fill="#ff6a6a"/><circle cx="206.40" cy="209.26" r="2.55" fill="#f00"/><circle cx="206.40" cy="209.26" r="0.7" fill="#ff6a6a"/><circle cx="213.93" cy="209.26" r="2.55" fill="#f00"/><circle cx="213.93" cy="209.26" r="0.7" fill="#ff6a6a"/><circle cx="221.46" cy="209.26" r="2.55" fill="#f00"/><circle cx="221.46" cy="209.26" r="0.7" fill="#ff6a6a"/><circle cx="228.99" cy="209.26" r="2.55" fill="#f00"/><circle cx="228.99" cy="209.26" r="0.7" fill="#ff6a6a"/><circle cx="236.52" cy="209.26" r="2.55" fill="#f00"/><circle cx="236.52" cy="209.26" r="0.7" fill="#ff6a6a"/><circle cx="244.06" cy="209.26" r="2.55" fill="#f00"/><circle cx="244.06" cy="209.26" r="0.7" fill="#ff6a6a"/><circle cx="251.59" cy="209.26" r="2.55" fill="#f00"/><circle cx="251.59" cy="209.26" r="0.7" fill="#ff6a6a"/><circle cx="259.12" cy="209.26" r="2.55" fill="#f00"/><circle cx="259.12" cy="209.26" r="0.7" fill="#ff6a6a"/><circle cx="266.65" cy="209.26" r="2.55" fill="#f00"/><circle cx="266.65" cy="209.26" r="0.7" fill="#ff6a6a"/><circle cx="274.18" cy="209.26" r="2.55" fill="#f00"/><circle cx="274.18" cy="209.26" r="0.7" fill="#ff6a6a"/><circle cx="281.72" cy="209.26" r="2.55" fill="#f00"/><circle cx="281.72" cy="209.26" r="0.7" fill="#ff6a6a"/><circle cx="289.25" cy="209.26" r="2.55" fill="#f00"/><circle cx="289.25" cy="209.26" r="0.7" fill="#ff6a6a"/><circle cx="296.78" cy="209.26" r="2.55" fill="#f00"/><circle cx="296.78" cy="209.26" r="0.7" fill="#ff6a6a"/><circle cx="304.31" cy="209.26" r="2.55" fill="#f00"/><circle cx="304.31" cy="209.26" r="0.7" fill="#ff6a6a"/><circle cx="311.84" cy="209.26" r="2.55" fill="#f00"/><circle cx="311.84" cy="209.26" r="0.7" fill="#ff6a6a"/><circle cx="319.38" cy="209.26" r="2.55" fill="#f00"/><circle cx="319.38" cy="209.26" r="0.7" fill="#ff6a6a"/><circle cx="326.91" cy="209.26" r="2.55" fill="#f00"/><circle cx="326.91" cy="209.26" r="0.7" fill="#ff6a6a"/><circle cx="334.44" cy="209.26" r="2.55" fill="#f00"/><circle cx="334.44" cy="209.26" r="0.7" fill="#ff6a6a"/><circle cx="341.97" cy="209.26" r="2.55" fill="#f00"/><circle cx="341.97" cy="209.26" r="0.7" fill="#ff6a6a"/><circle cx="349.50" cy="209.26" r="2.55" fill="#f00"/><circle cx="349.50" cy="209.26" r="0.7" fill="#ff6a6a"/><circle cx="357.04" cy="209.26" r="2.55" fill="#f00"/><circle cx="357.04" cy="209.26" r="0.7" fill="#ff6a6a"/><circle cx="364.57" cy="209.26" r="2.55" fill="#f00"/><circle cx="364.57" cy="209.26" r="0.7" fill="#ff6a6a"/><circle cx="372.10" cy="209.26" r="2.55" fill="#f00"/><circle cx="372.10" cy="209.26" r="0.7" fill="#ff6a6a"/><circle cx="379.63" cy="209.26" r="2.55" fill="#f00"/><circle cx="379.63" cy="209.26" r="0.7" fill="#ff6a6a"/><circle cx="387.16" cy="209.26" r="2.55" fill="#f00"/><circle cx="387.16" cy="209.26" r="0.7" fill="#ff6a6a"/><circle cx="394.70" cy="209.26" r="2.55" fill="#f00"/><circle cx="394.70" cy="209.26" r="0.7" fill="#ff6a6a"/><circle cx="402.23" cy="209.26" r="2.55" fill="#f00"/><circle cx="402.23" cy="209.26" r="0.7" fill="#ff6a6a"/><circle cx="409.76" cy="209.26" r="2.55" fill="#f00"/><circle cx="409.76" cy="209.26" r="0.7" fill="#ff6a6a"/><circle cx="417.29" cy="209.26" r="2.55" fill="#f00"/><circle cx="417.29" cy="209.26" r="0.7" fill="#ff6a6a"/><circle cx="424.82" cy="209.26" r="2.55" fill="#f00"/><circle cx="424.82" cy="209.26" r="0.7" fill="#ff6a6a"/><circle cx="183.80" cy="216.79" r="2.55" fill="#f00"/><circle cx="183.80" cy="216.79" r="0.7" fill="#ff6a6a"/><circle cx="191.33" cy="216.79" r="2.55" fill="#f00"/><circle cx="191.33" cy="216.79" r="0.7" fill="#ff6a6a"/><circle cx="198.86" cy="216.79" r="2.55" fill="#f00"/><circle cx="198.86" cy="216.79" r="0.7" fill="#ff6a6a"/><circle cx="206.40" cy="216.79" r="2.55" fill="#f00"/><circle cx="206.40" cy="216.79" r="0.7" fill="#ff6a6a"/><circle cx="213.93" cy="216.79" r="2.55" fill="#f00"/><circle cx="213.93" cy="216.79" r="0.7" fill="#ff6a6a"/><circle cx="221.46" cy="216.79" r="2.55" fill="#f00"/><circle cx="221.46" cy="216.79" r="0.7" fill="#ff6a6a"/><circle cx="228.99" cy="216.79" r="2.55" fill="#f00"/><circle cx="228.99" cy="216.79" r="0.7" fill="#ff6a6a"/><circle cx="236.52" cy="216.79" r="2.55" fill="#f00"/><circle cx="236.52" cy="216.79" r="0.7" fill="#ff6a6a"/><circle cx="244.06" cy="216.79" r="2.55" fill="#f00"/><circle cx="244.06" cy="216.79" r="0.7" fill="#ff6a6a"/><circle cx="251.59" cy="216.79" r="2.55" fill="#f00"/><circle cx="251.59" cy="216.79" r="0.7" fill="#ff6a6a"/><circle cx="259.12" cy="216.79" r="2.55" fill="#f00"/><circle cx="259.12" cy="216.79" r="0.7" fill="#ff6a6a"/><circle cx="266.65" cy="216.79" r="2.55" fill="#f00"/><circle cx="266.65" cy="216.79" r="0.7" fill="#ff6a6a"/><circle cx="274.18" cy="216.79" r="2.55" fill="#f00"/><circle cx="274.18" cy="216.79" r="0.7" fill="#ff6a6a"/><circle cx="281.72" cy="216.79" r="2.55" fill="#f00"/><circle cx="281.72" cy="216.79" r="0.7" fill="#ff6a6a"/><circle cx="289.25" cy="216.79" r="2.55" fill="#f00"/><circle cx="289.25" cy="216.79" r="0.7" fill="#ff6a6a"/><circle cx="296.78" cy="216.79" r="2.55" fill="#f00"/><circle cx="296.78" cy="216.79" r="0.7" fill="#ff6a6a"/><circle cx="304.31" cy="216.79" r="2.55" fill="#f00"/><circle cx="304.31" cy="216.79" r="0.7" fill="#ff6a6a"/><circle cx="311.84" cy="216.79" r="2.55" fill="#f00"/><circle cx="311.84" cy="216.79" r="0.7" fill="#ff6a6a"/><circle cx="319.38" cy="216.79" r="2.55" fill="#f00"/><circle cx="319.38" cy="216.79" r="0.7" fill="#ff6a6a"/><circle cx="326.91" cy="216.79" r="2.55" fill="#f00"/><circle cx="326.91" cy="216.79" r="0.7" fill="#ff6a6a"/><circle cx="334.44" cy="216.79" r="2.55" fill="#f00"/><circle cx="334.44" cy="216.79" r="0.7" fill="#ff6a6a"/><circle cx="341.97" cy="216.79" r="2.55" fill="#f00"/><circle cx="341.97" cy="216.79" r="0.7" fill="#ff6a6a"/><circle cx="349.50" cy="216.79" r="2.55" fill="#f00"/><circle cx="349.50" cy="216.79" r="0.7" fill="#ff6a6a"/><circle cx="357.04" cy="216.79" r="2.55" fill="#f00"/><circle cx="357.04" cy="216.79" r="0.7" fill="#ff6a6a"/><circle cx="364.57" cy="216.79" r="2.55" fill="#f00"/><circle cx="364.57" cy="216.79" r="0.7" fill="#ff6a6a"/><circle cx="372.10" cy="216.79" r="2.55" fill="#f00"/><circle cx="372.10" cy="216.79" r="0.7" fill="#ff6a6a"/><circle cx="379.63" cy="216.79" r="2.55" fill="#f00"/><circle cx="379.63" cy="216.79" r="0.7" fill="#ff6a6a"/><circle cx="387.16" cy="216.79" r="2.55" fill="#f00"/><circle cx="387.16" cy="216.79" r="0.7" fill="#ff6a6a"/><circle cx="394.70" cy="216.79" r="2.55" fill="#f00"/><circle cx="394.70" cy="216.79" r="0.7" fill="#ff6a6a"/><circle cx="402.23" cy="216.79" r="2.55" fill="#f00"/><circle cx="402.23" cy="216.79" r="0.7" fill="#ff6a6a"/><circle cx="409.76" cy="216.79" r="2.55" fill="#f00"/><circle cx="409.76" cy="216.79" r="0.7" fill="#ff6a6a"/><circle cx="417.29" cy="216.79" r="2.55" fill="#f00"/><circle cx="417.29" cy="216.79" r="0.7" fill="#ff6a6a"/><circle cx="424.82" cy="216.79" r="2.55" fill="#f00"/><circle cx="424.82" cy="216.79" r="0.7" fill="#ff6a6a"/><circle cx="191.33" cy="224.32" r="2.55" fill="#f00"/><circle cx="191.33" cy="224.32" r="0.7" fill="#ff6a6a"/><circle cx="198.86" cy="224.32" r="2.55" fill="#f00"/><circle cx="198.86" cy="224.32" r="0.7" fill="#ff6a6a"/><circle cx="206.40" cy="224.32" r="2.55" fill="#f00"/><circle cx="206.40" cy="224.32" r="0.7" fill="#ff6a6a"/><circle cx="213.93" cy="224.32" r="2.55" fill="#f00"/><circle cx="213.93" cy="224.32" r="0.7" fill="#ff6a6a"/><circle cx="221.46" cy="224.32" r="2.55" fill="#f00"/><circle cx="221.46" cy="224.32" r="0.7" fill="#ff6a6a"/><circle cx="228.99" cy="224.32" r="2.55" fill="#f00"/><circle cx="228.99" cy="224.32" r="0.7" fill="#ff6a6a"/><circle cx="379.63" cy="224.32" r="2.55" fill="#f00"/><circle cx="379.63" cy="224.32" r="0.7" fill="#ff6a6a"/><circle cx="387.16" cy="224.32" r="2.55" fill="#f00"/><circle cx="387.16" cy="224.32" r="0.7" fill="#ff6a6a"/><circle cx="394.70" cy="224.32" r="2.55" fill="#f00"/><circle cx="394.70" cy="224.32" r="0.7" fill="#ff6a6a"/><circle cx="402.23" cy="224.32" r="2.55" fill="#f00"/><circle cx="402.23" cy="224.32" r="0.7" fill="#ff6a6a"/><circle cx="409.76" cy="224.32" r="2.55" fill="#f00"/><circle cx="409.76" cy="224.32" r="0.7" fill="#ff6a6a"/><circle cx="417.29" cy="224.32" r="2.55" fill="#f00"/><circle cx="417.29" cy="224.32" r="0.7" fill="#ff6a6a"/><circle cx="183.80" cy="231.86" r="2.55" fill="#f00"/><circle cx="183.80" cy="231.86" r="0.7" fill="#ff6a6a"/><circle cx="191.33" cy="231.86" r="2.55" fill="#f00"/><circle cx="191.33" cy="231.86" r="0.7" fill="#ff6a6a"/><circle cx="198.86" cy="231.86" r="2.55" fill="#f00"/><circle cx="198.86" cy="231.86" r="0.7" fill="#ff6a6a"/><circle cx="206.40" cy="231.86" r="2.55" fill="#f00"/><circle cx="206.40" cy="231.86" r="0.7" fill="#ff6a6a"/><circle cx="213.93" cy="231.86" r="2.55" fill="#f00"/><circle cx="213.93" cy="231.86" r="0.7" fill="#ff6a6a"/><circle cx="221.46" cy="231.86" r="2.55" fill="#f00"/><circle cx="221.46" cy="231.86" r="0.7" fill="#ff6a6a"/><circle cx="228.99" cy="231.86" r="2.55" fill="#f00"/><circle cx="228.99" cy="231.86" r="0.7" fill="#ff6a6a"/><circle cx="379.63" cy="231.86" r="2.55" fill="#f00"/><circle cx="379.63" cy="231.86" r="0.7" fill="#ff6a6a"/><circle cx="387.16" cy="231.86" r="2.55" fill="#f00"/><circle cx="387.16" cy="231.86" r="0.7" fill="#ff6a6a"/><circle cx="394.70" cy="231.86" r="2.55" fill="#f00"/><circle cx="394.70" cy="231.86" r="0.7" fill="#ff6a6a"/><circle cx="402.23" cy="231.86" r="2.55" fill="#f00"/><circle cx="402.23" cy="231.86" r="0.7" fill="#ff6a6a"/><circle cx="409.76" cy="231.86" r="2.55" fill="#f00"/><circle cx="409.76" cy="231.86" r="0.7" fill="#ff6a6a"/><circle cx="417.29" cy="231.86" r="2.55" fill="#f00"/><circle cx="417.29" cy="231.86" r="0.7" fill="#ff6a6a"/><circle cx="424.82" cy="231.86" r="2.55" fill="#f00"/><circle cx="424.82" cy="231.86" r="0.7" fill="#ff6a6a"/><circle cx="183.80" cy="239.39" r="2.55" fill="#f00"/><circle cx="183.80" cy="239.39" r="0.7" fill="#ff6a6a"/><circle cx="191.33" cy="239.39" r="2.55" fill="#f00"/><circle cx="191.33" cy="239.39" r="0.7" fill="#ff6a6a"/><circle cx="198.86" cy="239.39" r="2.55" fill="#f00"/><circle cx="198.86" cy="239.39" r="0.7" fill="#ff6a6a"/><circle cx="206.40" cy="239.39" r="2.55" fill="#f00"/><circle cx="206.40" cy="239.39" r="0.7" fill="#ff6a6a"/><circle cx="213.93" cy="239.39" r="2.55" fill="#f00"/><circle cx="213.93" cy="239.39" r="0.7" fill="#ff6a6a"/><circle cx="221.46" cy="239.39" r="2.55" fill="#f00"/><circle cx="221.46" cy="239.39" r="0.7" fill="#ff6a6a"/><circle cx="228.99" cy="239.39" r="2.55" fill="#f00"/><circle cx="228.99" cy="239.39" r="0.7" fill="#ff6a6a"/><circle cx="379.63" cy="239.39" r="2.55" fill="#f00"/><circle cx="379.63" cy="239.39" r="0.7" fill="#ff6a6a"/><circle cx="387.16" cy="239.39" r="2.55" fill="#f00"/><circle cx="387.16" cy="239.39" r="0.7" fill="#ff6a6a"/><circle cx="394.70" cy="239.39" r="2.55" fill="#f00"/><circle cx="394.70" cy="239.39" r="0.7" fill="#ff6a6a"/><circle cx="402.23" cy="239.39" r="2.55" fill="#f00"/><circle cx="402.23" cy="239.39" r="0.7" fill="#ff6a6a"/><circle cx="409.76" cy="239.39" r="2.55" fill="#f00"/><circle cx="409.76" cy="239.39" r="0.7" fill="#ff6a6a"/><circle cx="417.29" cy="239.39" r="2.55" fill="#f00"/><circle cx="417.29" cy="239.39" r="0.7" fill="#ff6a6a"/><circle cx="424.82" cy="239.39" r="2.55" fill="#f00"/><circle cx="424.82" cy="239.39" r="0.7" fill="#ff6a6a"/><circle cx="191.33" cy="246.92" r="2.55" fill="#f00"/><circle cx="191.33" cy="246.92" r="0.7" fill="#ff6a6a"/><circle cx="198.86" cy="246.92" r="2.55" fill="#f00"/><circle cx="198.86" cy="246.92" r="0.7" fill="#ff6a6a"/><circle cx="206.40" cy="246.92" r="2.55" fill="#f00"/><circle cx="206.40" cy="246.92" r="0.7" fill="#ff6a6a"/><circle cx="213.93" cy="246.92" r="2.55" fill="#f00"/><circle cx="213.93" cy="246.92" r="0.7" fill="#ff6a6a"/><circle cx="221.46" cy="246.92" r="2.55" fill="#f00"/><circle cx="221.46" cy="246.92" r="0.7" fill="#ff6a6a"/><circle cx="228.99" cy="246.92" r="2.55" fill="#f00"/><circle cx="228.99" cy="246.92" r="0.7" fill="#ff6a6a"/><circle cx="259.12" cy="246.92" r="2.55" fill="#f00"/><circle cx="259.12" cy="246.92" r="0.7" fill="#ff6a6a"/><circle cx="266.65" cy="246.92" r="2.55" fill="#f00"/><circle cx="266.65" cy="246.92" r="0.7" fill="#ff6a6a"/><circle cx="274.18" cy="246.92" r="2.55" fill="#f00"/><circle cx="274.18" cy="246.92" r="0.7" fill="#ff6a6a"/><circle cx="281.72" cy="246.92" r="2.55" fill="#f00"/><circle cx="281.72" cy="246.92" r="0.7" fill="#ff6a6a"/><circle cx="289.25" cy="246.92" r="2.55" fill="#f00"/><circle cx="289.25" cy="246.92" r="0.7" fill="#ff6a6a"/><circle cx="296.78" cy="246.92" r="2.55" fill="#f00"/><circle cx="296.78" cy="246.92" r="0.7" fill="#ff6a6a"/><circle cx="304.31" cy="246.92" r="2.55" fill="#f00"/><circle cx="304.31" cy="246.92" r="0.7" fill="#ff6a6a"/><circle cx="311.84" cy="246.92" r="2.55" fill="#f00"/><circle cx="311.84" cy="246.92" r="0.7" fill="#ff6a6a"/><circle cx="319.38" cy="246.92" r="2.55" fill="#f00"/><circle cx="319.38" cy="246.92" r="0.7" fill="#ff6a6a"/><circle cx="326.91" cy="246.92" r="2.55" fill="#f00"/><circle cx="326.91" cy="246.92" r="0.7" fill="#ff6a6a"/><circle cx="334.44" cy="246.92" r="2.55" fill="#f00"/><circle cx="334.44" cy="246.92" r="0.7" fill="#ff6a6a"/><circle cx="341.97" cy="246.92" r="2.55" fill="#f00"/><circle cx="341.97" cy="246.92" r="0.7" fill="#ff6a6a"/><circle cx="349.50" cy="246.92" r="2.55" fill="#f00"/><circle cx="349.50" cy="246.92" r="0.7" fill="#ff6a6a"/><circle cx="379.63" cy="246.92" r="2.55" fill="#f00"/><circle cx="379.63" cy="246.92" r="0.7" fill="#ff6a6a"/><circle cx="387.16" cy="246.92" r="2.55" fill="#f00"/><circle cx="387.16" cy="246.92" r="0.7" fill="#ff6a6a"/><circle cx="394.70" cy="246.92" r="2.55" fill="#f00"/><circle cx="394.70" cy="246.92" r="0.7" fill="#ff6a6a"/><circle cx="402.23" cy="246.92" r="2.55" fill="#f00"/><circle cx="402.23" cy="246.92" r="0.7" fill="#ff6a6a"/><circle cx="409.76" cy="246.92" r="2.55" fill="#f00"/><circle cx="409.76" cy="246.92" r="0.7" fill="#ff6a6a"/><circle cx="417.29" cy="246.92" r="2.55" fill="#f00"/><circle cx="417.29" cy="246.92" r="0.7" fill="#ff6a6a"/><circle cx="183.80" cy="254.45" r="2.55" fill="#f00"/><circle cx="183.80" cy="254.45" r="0.7" fill="#ff6a6a"/><circle cx="191.33" cy="254.45" r="2.55" fill="#f00"/><circle cx="191.33" cy="254.45" r="0.7" fill="#ff6a6a"/><circle cx="198.86" cy="254.45" r="2.55" fill="#f00"/><circle cx="198.86" cy="254.45" r="0.7" fill="#ff6a6a"/><circle cx="206.40" cy="254.45" r="2.55" fill="#f00"/><circle cx="206.40" cy="254.45" r="0.7" fill="#ff6a6a"/><circle cx="213.93" cy="254.45" r="2.55" fill="#f00"/><circle cx="213.93" cy="254.45" r="0.7" fill="#ff6a6a"/><circle cx="221.46" cy="254.45" r="2.55" fill="#f00"/><circle cx="221.46" cy="254.45" r="0.7" fill="#ff6a6a"/><circle cx="228.99" cy="254.45" r="2.55" fill="#f00"/><circle cx="228.99" cy="254.45" r="0.7" fill="#ff6a6a"/><circle cx="259.12" cy="254.45" r="2.55" fill="#f00"/><circle cx="259.12" cy="254.45" r="0.7" fill="#ff6a6a"/><circle cx="266.65" cy="254.45" r="2.55" fill="#f00"/><circle cx="266.65" cy="254.45" r="0.7" fill="#ff6a6a"/><circle cx="274.18" cy="254.45" r="2.55" fill="#f00"/><circle cx="274.18" cy="254.45" r="0.7" fill="#ff6a6a"/><circle cx="281.72" cy="254.45" r="2.55" fill="#f00"/><circle cx="281.72" cy="254.45" r="0.7" fill="#ff6a6a"/><circle cx="289.25" cy="254.45" r="2.55" fill="#f00"/><circle cx="289.25" cy="254.45" r="0.7" fill="#ff6a6a"/><circle cx="296.78" cy="254.45" r="2.55" fill="#f00"/><circle cx="296.78" cy="254.45" r="0.7" fill="#ff6a6a"/><circle cx="304.31" cy="254.45" r="2.55" fill="#f00"/><circle cx="304.31" cy="254.45" r="0.7" fill="#ff6a6a"/><circle cx="311.84" cy="254.45" r="2.55" fill="#f00"/><circle cx="311.84" cy="254.45" r="0.7" fill="#ff6a6a"/><circle cx="319.38" cy="254.45" r="2.55" fill="#f00"/><circle cx="319.38" cy="254.45" r="0.7" fill="#ff6a6a"/><circle cx="326.91" cy="254.45" r="2.55" fill="#f00"/><circle cx="326.91" cy="254.45" r="0.7" fill="#ff6a6a"/><circle cx="334.44" cy="254.45" r="2.55" fill="#f00"/><circle cx="334.44" cy="254.45" r="0.7" fill="#ff6a6a"/><circle cx="341.97" cy="254.45" r="2.55" fill="#f00"/><circle cx="341.97" cy="254.45" r="0.7" fill="#ff6a6a"/><circle cx="349.50" cy="254.45" r="2.55" fill="#f00"/><circle cx="349.50" cy="254.45" r="0.7" fill="#ff6a6a"/><circle cx="379.63" cy="254.45" r="2.55" fill="#f00"/><circle cx="379.63" cy="254.45" r="0.7" fill="#ff6a6a"/><circle cx="387.16" cy="254.45" r="2.55" fill="#f00"/><circle cx="387.16" cy="254.45" r="0.7" fill="#ff6a6a"/><circle cx="394.70" cy="254.45" r="2.55" fill="#f00"/><circle cx="394.70" cy="254.45" r="0.7" fill="#ff6a6a"/><circle cx="402.23" cy="254.45" r="2.55" fill="#f00"/><circle cx="402.23" cy="254.45" r="0.7" fill="#ff6a6a"/><circle cx="409.76" cy="254.45" r="2.55" fill="#f00"/><circle cx="409.76" cy="254.45" r="0.7" fill="#ff6a6a"/><circle cx="417.29" cy="254.45" r="2.55" fill="#f00"/><circle cx="417.29" cy="254.45" r="0.7" fill="#ff6a6a"/><circle cx="424.82" cy="254.45" r="2.55" fill="#f00"/><circle cx="424.82" cy="254.45" r="0.7" fill="#ff6a6a"/><circle cx="183.80" cy="261.98" r="2.55" fill="#f00"/><circle cx="183.80" cy="261.98" r="0.7" fill="#ff6a6a"/><circle cx="191.33" cy="261.98" r="2.55" fill="#f00"/><circle cx="191.33" cy="261.98" r="0.7" fill="#ff6a6a"/><circle cx="198.86" cy="261.98" r="2.55" fill="#f00"/><circle cx="198.86" cy="261.98" r="0.7" fill="#ff6a6a"/><circle cx="206.40" cy="261.98" r="2.55" fill="#f00"/><circle cx="206.40" cy="261.98" r="0.7" fill="#ff6a6a"/><circle cx="213.93" cy="261.98" r="2.55" fill="#f00"/><circle cx="213.93" cy="261.98" r="0.7" fill="#ff6a6a"/><circle cx="221.46" cy="261.98" r="2.55" fill="#f00"/><circle cx="221.46" cy="261.98" r="0.7" fill="#ff6a6a"/><circle cx="228.99" cy="261.98" r="2.55" fill="#f00"/><circle cx="228.99" cy="261.98" r="0.7" fill="#ff6a6a"/><circle cx="259.12" cy="261.98" r="2.55" fill="#f00"/><circle cx="259.12" cy="261.98" r="0.7" fill="#ff6a6a"/><circle cx="266.65" cy="261.98" r="2.55" fill="#f00"/><circle cx="266.65" cy="261.98" r="0.7" fill="#ff6a6a"/><circle cx="274.18" cy="261.98" r="2.55" fill="#f00"/><circle cx="274.18" cy="261.98" r="0.7" fill="#ff6a6a"/><circle cx="281.72" cy="261.98" r="2.55" fill="#f00"/><circle cx="281.72" cy="261.98" r="0.7" fill="#ff6a6a"/><circle cx="289.25" cy="261.98" r="2.55" fill="#f00"/><circle cx="289.25" cy="261.98" r="0.7" fill="#ff6a6a"/><circle cx="296.78" cy="261.98" r="2.55" fill="#f00"/><circle cx="296.78" cy="261.98" r="0.7" fill="#ff6a6a"/><circle cx="304.31" cy="261.98" r="2.55" fill="#f00"/><circle cx="304.31" cy="261.98" r="0.7" fill="#ff6a6a"/><circle cx="311.84" cy="261.98" r="2.55" fill="#f00"/><circle cx="311.84" cy="261.98" r="0.7" fill="#ff6a6a"/><circle cx="319.38" cy="261.98" r="2.55" fill="#f00"/><circle cx="319.38" cy="261.98" r="0.7" fill="#ff6a6a"/><circle cx="326.91" cy="261.98" r="2.55" fill="#f00"/><circle cx="326.91" cy="261.98" r="0.7" fill="#ff6a6a"/><circle cx="334.44" cy="261.98" r="2.55" fill="#f00"/><circle cx="334.44" cy="261.98" r="0.7" fill="#ff6a6a"/><circle cx="341.97" cy="261.98" r="2.55" fill="#f00"/><circle cx="341.97" cy="261.98" r="0.7" fill="#ff6a6a"/><circle cx="349.50" cy="261.98" r="2.55" fill="#f00"/><circle cx="349.50" cy="261.98" r="0.7" fill="#ff6a6a"/><circle cx="379.63" cy="261.98" r="2.55" fill="#f00"/><circle cx="379.63" cy="261.98" r="0.7" fill="#ff6a6a"/><circle cx="387.16" cy="261.98" r="2.55" fill="#f00"/><circle cx="387.16" cy="261.98" r="0.7" fill="#ff6a6a"/><circle cx="394.70" cy="261.98" r="2.55" fill="#f00"/><circle cx="394.70" cy="261.98" r="0.7" fill="#ff6a6a"/><circle cx="402.23" cy="261.98" r="2.55" fill="#f00"/><circle cx="402.23" cy="261.98" r="0.7" fill="#ff6a6a"/><circle cx="409.76" cy="261.98" r="2.55" fill="#f00"/><circle cx="409.76" cy="261.98" r="0.7" fill="#ff6a6a"/><circle cx="417.29" cy="261.98" r="2.55" fill="#f00"/><circle cx="417.29" cy="261.98" r="0.7" fill="#ff6a6a"/><circle cx="424.82" cy="261.98" r="2.55" fill="#f00"/><circle cx="424.82" cy="261.98" r="0.7" fill="#ff6a6a"/><circle cx="191.33" cy="269.52" r="2.55" fill="#f00"/><circle cx="191.33" cy="269.52" r="0.7" fill="#ff6a6a"/><circle cx="198.86" cy="269.52" r="2.55" fill="#f00"/><circle cx="198.86" cy="269.52" r="0.7" fill="#ff6a6a"/><circle cx="206.40" cy="269.52" r="2.55" fill="#f00"/><circle cx="206.40" cy="269.52" r="0.7" fill="#ff6a6a"/><circle cx="213.93" cy="269.52" r="2.55" fill="#f00"/><circle cx="213.93" cy="269.52" r="0.7" fill="#ff6a6a"/><circle cx="221.46" cy="269.52" r="2.55" fill="#f00"/><circle cx="221.46" cy="269.52" r="0.7" fill="#ff6a6a"/><circle cx="228.99" cy="269.52" r="2.55" fill="#f00"/><circle cx="228.99" cy="269.52" r="0.7" fill="#ff6a6a"/><circle cx="259.12" cy="269.52" r="2.55" fill="#f00"/><circle cx="259.12" cy="269.52" r="0.7" fill="#ff6a6a"/><circle cx="266.65" cy="269.52" r="2.55" fill="#f00"/><circle cx="266.65" cy="269.52" r="0.7" fill="#ff6a6a"/><circle cx="274.18" cy="269.52" r="2.55" fill="#f00"/><circle cx="274.18" cy="269.52" r="0.7" fill="#ff6a6a"/><circle cx="281.72" cy="269.52" r="2.55" fill="#f00"/><circle cx="281.72" cy="269.52" r="0.7" fill="#ff6a6a"/><circle cx="289.25" cy="269.52" r="2.55" fill="#f00"/><circle cx="289.25" cy="269.52" r="0.7" fill="#ff6a6a"/><circle cx="296.78" cy="269.52" r="2.55" fill="#f00"/><circle cx="296.78" cy="269.52" r="0.7" fill="#ff6a6a"/><circle cx="304.31" cy="269.52" r="2.55" fill="#f00"/><circle cx="304.31" cy="269.52" r="0.7" fill="#ff6a6a"/><circle cx="311.84" cy="269.52" r="2.55" fill="#f00"/><circle cx="311.84" cy="269.52" r="0.7" fill="#ff6a6a"/><circle cx="319.38" cy="269.52" r="2.55" fill="#f00"/><circle cx="319.38" cy="269.52" r="0.7" fill="#ff6a6a"/><circle cx="326.91" cy="269.52" r="2.55" fill="#f00"/><circle cx="326.91" cy="269.52" r="0.7" fill="#ff6a6a"/><circle cx="334.44" cy="269.52" r="2.55" fill="#f00"/><circle cx="334.44" cy="269.52" r="0.7" fill="#ff6a6a"/><circle cx="341.97" cy="269.52" r="2.55" fill="#f00"/><circle cx="341.97" cy="269.52" r="0.7" fill="#ff6a6a"/><circle cx="349.50" cy="269.52" r="2.55" fill="#f00"/><circle cx="349.50" cy="269.52" r="0.7" fill="#ff6a6a"/><circle cx="379.63" cy="269.52" r="2.55" fill="#f00"/><circle cx="379.63" cy="269.52" r="0.7" fill="#ff6a6a"/><circle cx="387.16" cy="269.52" r="2.55" fill="#f00"/><circle cx="387.16" cy="269.52" r="0.7" fill="#ff6a6a"/><circle cx="394.70" cy="269.52" r="2.55" fill="#f00"/><circle cx="394.70" cy="269.52" r="0.7" fill="#ff6a6a"/><circle cx="402.23" cy="269.52" r="2.55" fill="#f00"/><circle cx="402.23" cy="269.52" r="0.7" fill="#ff6a6a"/><circle cx="409.76" cy="269.52" r="2.55" fill="#f00"/><circle cx="409.76" cy="269.52" r="0.7" fill="#ff6a6a"/><circle cx="417.29" cy="269.52" r="2.55" fill="#f00"/><circle cx="417.29" cy="269.52" r="0.7" fill="#ff6a6a"/><circle cx="183.80" cy="277.05" r="2.55" fill="#f00"/><circle cx="183.80" cy="277.05" r="0.7" fill="#ff6a6a"/><circle cx="191.33" cy="277.05" r="2.55" fill="#f00"/><circle cx="191.33" cy="277.05" r="0.7" fill="#ff6a6a"/><circle cx="198.86" cy="277.05" r="2.55" fill="#f00"/><circle cx="198.86" cy="277.05" r="0.7" fill="#ff6a6a"/><circle cx="206.40" cy="277.05" r="2.55" fill="#f00"/><circle cx="206.40" cy="277.05" r="0.7" fill="#ff6a6a"/><circle cx="213.93" cy="277.05" r="2.55" fill="#f00"/><circle cx="213.93" cy="277.05" r="0.7" fill="#ff6a6a"/><circle cx="221.46" cy="277.05" r="2.55" fill="#f00"/><circle cx="221.46" cy="277.05" r="0.7" fill="#ff6a6a"/><circle cx="228.99" cy="277.05" r="2.55" fill="#f00"/><circle cx="228.99" cy="277.05" r="0.7" fill="#ff6a6a"/><circle cx="259.12" cy="277.05" r="2.55" fill="#f00"/><circle cx="259.12" cy="277.05" r="0.7" fill="#ff6a6a"/><circle cx="266.65" cy="277.05" r="2.55" fill="#f00"/><circle cx="266.65" cy="277.05" r="0.7" fill="#ff6a6a"/><circle cx="274.18" cy="277.05" r="2.55" fill="#f00"/><circle cx="274.18" cy="277.05" r="0.7" fill="#ff6a6a"/><circle cx="281.72" cy="277.05" r="2.55" fill="#f00"/><circle cx="281.72" cy="277.05" r="0.7" fill="#ff6a6a"/><circle cx="289.25" cy="277.05" r="2.55" fill="#f00"/><circle cx="289.25" cy="277.05" r="0.7" fill="#ff6a6a"/><circle cx="296.78" cy="277.05" r="2.55" fill="#f00"/><circle cx="296.78" cy="277.05" r="0.7" fill="#ff6a6a"/><circle cx="304.31" cy="277.05" r="2.55" fill="#f00"/><circle cx="304.31" cy="277.05" r="0.7" fill="#ff6a6a"/><circle cx="311.84" cy="277.05" r="2.55" fill="#f00"/><circle cx="311.84" cy="277.05" r="0.7" fill="#ff6a6a"/><circle cx="319.38" cy="277.05" r="2.55" fill="#f00"/><circle cx="319.38" cy="277.05" r="0.7" fill="#ff6a6a"/><circle cx="326.91" cy="277.05" r="2.55" fill="#f00"/><circle cx="326.91" cy="277.05" r="0.7" fill="#ff6a6a"/><circle cx="334.44" cy="277.05" r="2.55" fill="#f00"/><circle cx="334.44" cy="277.05" r="0.7" fill="#ff6a6a"/><circle cx="341.97" cy="277.05" r="2.55" fill="#f00"/><circle cx="341.97" cy="277.05" r="0.7" fill="#ff6a6a"/><circle cx="349.50" cy="277.05" r="2.55" fill="#f00"/><circle cx="349.50" cy="277.05" r="0.7" fill="#ff6a6a"/><circle cx="379.63" cy="277.05" r="2.55" fill="#f00"/><circle cx="379.63" cy="277.05" r="0.7" fill="#ff6a6a"/><circle cx="387.16" cy="277.05" r="2.55" fill="#f00"/><circle cx="387.16" cy="277.05" r="0.7" fill="#ff6a6a"/><circle cx="394.70" cy="277.05" r="2.55" fill="#f00"/><circle cx="394.70" cy="277.05" r="0.7" fill="#ff6a6a"/><circle cx="402.23" cy="277.05" r="2.55" fill="#f00"/><circle cx="402.23" cy="277.05" r="0.7" fill="#ff6a6a"/><circle cx="409.76" cy="277.05" r="2.55" fill="#f00"/><circle cx="409.76" cy="277.05" r="0.7" fill="#ff6a6a"/><circle cx="417.29" cy="277.05" r="2.55" fill="#f00"/><circle cx="417.29" cy="277.05" r="0.7" fill="#ff6a6a"/><circle cx="424.82" cy="277.05" r="2.55" fill="#f00"/><circle cx="424.82" cy="277.05" r="0.7" fill="#ff6a6a"/><circle cx="183.80" cy="284.58" r="2.55" fill="#f00"/><circle cx="183.80" cy="284.58" r="0.7" fill="#ff6a6a"/><circle cx="191.33" cy="284.58" r="2.55" fill="#f00"/><circle cx="191.33" cy="284.58" r="0.7" fill="#ff6a6a"/><circle cx="198.86" cy="284.58" r="2.55" fill="#f00"/><circle cx="198.86" cy="284.58" r="0.7" fill="#ff6a6a"/><circle cx="206.40" cy="284.58" r="2.55" fill="#f00"/><circle cx="206.40" cy="284.58" r="0.7" fill="#ff6a6a"/><circle cx="213.93" cy="284.58" r="2.55" fill="#f00"/><circle cx="213.93" cy="284.58" r="0.7" fill="#ff6a6a"/><circle cx="221.46" cy="284.58" r="2.55" fill="#f00"/><circle cx="221.46" cy="284.58" r="0.7" fill="#ff6a6a"/><circle cx="228.99" cy="284.58" r="2.55" fill="#f00"/><circle cx="228.99" cy="284.58" r="0.7" fill="#ff6a6a"/><circle cx="259.12" cy="284.58" r="2.55" fill="#f00"/><circle cx="259.12" cy="284.58" r="0.7" fill="#ff6a6a"/><circle cx="266.65" cy="284.58" r="2.55" fill="#f00"/><circle cx="266.65" cy="284.58" r="0.7" fill="#ff6a6a"/><circle cx="274.18" cy="284.58" r="2.55" fill="#f00"/><circle cx="274.18" cy="284.58" r="0.7" fill="#ff6a6a"/><circle cx="281.72" cy="284.58" r="2.55" fill="#f00"/><circle cx="281.72" cy="284.58" r="0.7" fill="#ff6a6a"/><circle cx="289.25" cy="284.58" r="2.55" fill="#f00"/><circle cx="289.25" cy="284.58" r="0.7" fill="#ff6a6a"/><circle cx="296.78" cy="284.58" r="2.55" fill="#f00"/><circle cx="296.78" cy="284.58" r="0.7" fill="#ff6a6a"/><circle cx="304.31" cy="284.58" r="2.55" fill="#f00"/><circle cx="304.31" cy="284.58" r="0.7" fill="#ff6a6a"/><circle cx="311.84" cy="284.58" r="2.55" fill="#f00"/><circle cx="311.84" cy="284.58" r="0.7" fill="#ff6a6a"/><circle cx="319.38" cy="284.58" r="2.55" fill="#f00"/><circle cx="319.38" cy="284.58" r="0.7" fill="#ff6a6a"/><circle cx="326.91" cy="284.58" r="2.55" fill="#f00"/><circle cx="326.91" cy="284.58" r="0.7" fill="#ff6a6a"/><circle cx="334.44" cy="284.58" r="2.55" fill="#f00"/><circle cx="334.44" cy="284.58" r="0.7" fill="#ff6a6a"/><circle cx="341.97" cy="284.58" r="2.55" fill="#f00"/><circle cx="341.97" cy="284.58" r="0.7" fill="#ff6a6a"/><circle cx="349.50" cy="284.58" r="2.55" fill="#f00"/><circle cx="349.50" cy="284.58" r="0.7" fill="#ff6a6a"/><circle cx="379.63" cy="284.58" r="2.55" fill="#f00"/><circle cx="379.63" cy="284.58" r="0.7" fill="#ff6a6a"/><circle cx="387.16" cy="284.58" r="2.55" fill="#f00"/><circle cx="387.16" cy="284.58" r="0.7" fill="#ff6a6a"/><circle cx="394.70" cy="284.58" r="2.55" fill="#f00"/><circle cx="394.70" cy="284.58" r="0.7" fill="#ff6a6a"/><circle cx="402.23" cy="284.58" r="2.55" fill="#f00"/><circle cx="402.23" cy="284.58" r="0.7" fill="#ff6a6a"/><circle cx="409.76" cy="284.58" r="2.55" fill="#f00"/><circle cx="409.76" cy="284.58" r="0.7" fill="#ff6a6a"/><circle cx="417.29" cy="284.58" r="2.55" fill="#f00"/><circle cx="417.29" cy="284.58" r="0.7" fill="#ff6a6a"/><circle cx="424.82" cy="284.58" r="2.55" fill="#f00"/><circle cx="424.82" cy="284.58" r="0.7" fill="#ff6a6a"/><circle cx="191.33" cy="292.11" r="2.55" fill="#f00"/><circle cx="191.33" cy="292.11" r="0.7" fill="#ff6a6a"/><circle cx="198.86" cy="292.11" r="2.55" fill="#f00"/><circle cx="198.86" cy="292.11" r="0.7" fill="#ff6a6a"/><circle cx="206.40" cy="292.11" r="2.55" fill="#f00"/><circle cx="206.40" cy="292.11" r="0.7" fill="#ff6a6a"/><circle cx="213.93" cy="292.11" r="2.55" fill="#f00"/><circle cx="213.93" cy="292.11" r="0.7" fill="#ff6a6a"/><circle cx="221.46" cy="292.11" r="2.55" fill="#f00"/><circle cx="221.46" cy="292.11" r="0.7" fill="#ff6a6a"/><circle cx="228.99" cy="292.11" r="2.55" fill="#f00"/><circle cx="228.99" cy="292.11" r="0.7" fill="#ff6a6a"/><circle cx="259.12" cy="292.11" r="2.55" fill="#f00"/><circle cx="259.12" cy="292.11" r="0.7" fill="#ff6a6a"/><circle cx="266.65" cy="292.11" r="2.55" fill="#f00"/><circle cx="266.65" cy="292.11" r="0.7" fill="#ff6a6a"/><circle cx="274.18" cy="292.11" r="2.55" fill="#f00"/><circle cx="274.18" cy="292.11" r="0.7" fill="#ff6a6a"/><circle cx="281.72" cy="292.11" r="2.55" fill="#f00"/><circle cx="281.72" cy="292.11" r="0.7" fill="#ff6a6a"/><circle cx="289.25" cy="292.11" r="2.55" fill="#f00"/><circle cx="289.25" cy="292.11" r="0.7" fill="#ff6a6a"/><circle cx="296.78" cy="292.11" r="2.55" fill="#f00"/><circle cx="296.78" cy="292.11" r="0.7" fill="#ff6a6a"/><circle cx="304.31" cy="292.11" r="2.55" fill="#f00"/><circle cx="304.31" cy="292.11" r="0.7" fill="#ff6a6a"/><circle cx="311.84" cy="292.11" r="2.55" fill="#f00"/><circle cx="311.84" cy="292.11" r="0.7" fill="#ff6a6a"/><circle cx="319.38" cy="292.11" r="2.55" fill="#f00"/><circle cx="319.38" cy="292.11" r="0.7" fill="#ff6a6a"/><circle cx="326.91" cy="292.11" r="2.55" fill="#f00"/><circle cx="326.91" cy="292.11" r="0.7" fill="#ff6a6a"/><circle cx="334.44" cy="292.11" r="2.55" fill="#f00"/><circle cx="334.44" cy="292.11" r="0.7" fill="#ff6a6a"/><circle cx="341.97" cy="292.11" r="2.55" fill="#f00"/><circle cx="341.97" cy="292.11" r="0.7" fill="#ff6a6a"/><circle cx="349.50" cy="292.11" r="2.55" fill="#f00"/><circle cx="349.50" cy="292.11" r="0.7" fill="#ff6a6a"/><circle cx="379.63" cy="292.11" r="2.55" fill="#f00"/><circle cx="379.63" cy="292.11" r="0.7" fill="#ff6a6a"/><circle cx="387.16" cy="292.11" r="2.55" fill="#f00"/><circle cx="387.16" cy="292.11" r="0.7" fill="#ff6a6a"/><circle cx="394.70" cy="292.11" r="2.55" fill="#f00"/><circle cx="394.70" cy="292.11" r="0.7" fill="#ff6a6a"/><circle cx="402.23" cy="292.11" r="2.55" fill="#f00"/><circle cx="402.23" cy="292.11" r="0.7" fill="#ff6a6a"/><circle cx="409.76" cy="292.11" r="2.55" fill="#f00"/><circle cx="409.76" cy="292.11" r="0.7" fill="#ff6a6a"/><circle cx="417.29" cy="292.11" r="2.55" fill="#f00"/><circle cx="417.29" cy="292.11" r="0.7" fill="#ff6a6a"/><circle cx="183.80" cy="299.64" r="2.55" fill="#f00"/><circle cx="183.80" cy="299.64" r="0.7" fill="#ff6a6a"/><circle cx="191.33" cy="299.64" r="2.55" fill="#f00"/><circle cx="191.33" cy="299.64" r="0.7" fill="#ff6a6a"/><circle cx="198.86" cy="299.64" r="2.55" fill="#f00"/><circle cx="198.86" cy="299.64" r="0.7" fill="#ff6a6a"/><circle cx="206.40" cy="299.64" r="2.55" fill="#f00"/><circle cx="206.40" cy="299.64" r="0.7" fill="#ff6a6a"/><circle cx="213.93" cy="299.64" r="2.55" fill="#f00"/><circle cx="213.93" cy="299.64" r="0.7" fill="#ff6a6a"/><circle cx="221.46" cy="299.64" r="2.55" fill="#f00"/><circle cx="221.46" cy="299.64" r="0.7" fill="#ff6a6a"/><circle cx="228.99" cy="299.64" r="2.55" fill="#f00"/><circle cx="228.99" cy="299.64" r="0.7" fill="#ff6a6a"/><circle cx="259.12" cy="299.64" r="2.55" fill="#f00"/><circle cx="259.12" cy="299.64" r="0.7" fill="#ff6a6a"/><circle cx="266.65" cy="299.64" r="2.55" fill="#f00"/><circle cx="266.65" cy="299.64" r="0.7" fill="#ff6a6a"/><circle cx="274.18" cy="299.64" r="2.55" fill="#f00"/><circle cx="274.18" cy="299.64" r="0.7" fill="#ff6a6a"/><circle cx="281.72" cy="299.64" r="2.55" fill="#f00"/><circle cx="281.72" cy="299.64" r="0.7" fill="#ff6a6a"/><circle cx="289.25" cy="299.64" r="2.55" fill="#f00"/><circle cx="289.25" cy="299.64" r="0.7" fill="#ff6a6a"/><circle cx="296.78" cy="299.64" r="2.55" fill="#f00"/><circle cx="296.78" cy="299.64" r="0.7" fill="#ff6a6a"/><circle cx="304.31" cy="299.64" r="2.55" fill="#f00"/><circle cx="304.31" cy="299.64" r="0.7" fill="#ff6a6a"/><circle cx="311.84" cy="299.64" r="2.55" fill="#f00"/><circle cx="311.84" cy="299.64" r="0.7" fill="#ff6a6a"/><circle cx="319.38" cy="299.64" r="2.55" fill="#f00"/><circle cx="319.38" cy="299.64" r="0.7" fill="#ff6a6a"/><circle cx="326.91" cy="299.64" r="2.55" fill="#f00"/><circle cx="326.91" cy="299.64" r="0.7" fill="#ff6a6a"/><circle cx="334.44" cy="299.64" r="2.55" fill="#f00"/><circle cx="334.44" cy="299.64" r="0.7" fill="#ff6a6a"/><circle cx="341.97" cy="299.64" r="2.55" fill="#f00"/><circle cx="341.97" cy="299.64" r="0.7" fill="#ff6a6a"/><circle cx="349.50" cy="299.64" r="2.55" fill="#f00"/><circle cx="349.50" cy="299.64" r="0.7" fill="#ff6a6a"/><circle cx="379.63" cy="299.64" r="2.55" fill="#f00"/><circle cx="379.63" cy="299.64" r="0.7" fill="#ff6a6a"/><circle cx="387.16" cy="299.64" r="2.55" fill="#f00"/><circle cx="387.16" cy="299.64" r="0.7" fill="#ff6a6a"/><circle cx="394.70" cy="299.64" r="2.55" fill="#f00"/><circle cx="394.70" cy="299.64" r="0.7" fill="#ff6a6a"/><circle cx="402.23" cy="299.64" r="2.55" fill="#f00"/><circle cx="402.23" cy="299.64" r="0.7" fill="#ff6a6a"/><circle cx="409.76" cy="299.64" r="2.55" fill="#f00"/><circle cx="409.76" cy="299.64" r="0.7" fill="#ff6a6a"/><circle cx="417.29" cy="299.64" r="2.55" fill="#f00"/><circle cx="417.29" cy="299.64" r="0.7" fill="#ff6a6a"/><circle cx="424.82" cy="299.64" r="2.55" fill="#f00"/><circle cx="424.82" cy="299.64" r="0.7" fill="#ff6a6a"/><circle cx="183.80" cy="307.18" r="2.55" fill="#f00"/><circle cx="183.80" cy="307.18" r="0.7" fill="#ff6a6a"/><circle cx="191.33" cy="307.18" r="2.55" fill="#f00"/><circle cx="191.33" cy="307.18" r="0.7" fill="#ff6a6a"/><circle cx="198.86" cy="307.18" r="2.55" fill="#f00"/><circle cx="198.86" cy="307.18" r="0.7" fill="#ff6a6a"/><circle cx="206.40" cy="307.18" r="2.55" fill="#f00"/><circle cx="206.40" cy="307.18" r="0.7" fill="#ff6a6a"/><circle cx="213.93" cy="307.18" r="2.55" fill="#f00"/><circle cx="213.93" cy="307.18" r="0.7" fill="#ff6a6a"/><circle cx="221.46" cy="307.18" r="2.55" fill="#f00"/><circle cx="221.46" cy="307.18" r="0.7" fill="#ff6a6a"/><circle cx="228.99" cy="307.18" r="2.55" fill="#f00"/><circle cx="228.99" cy="307.18" r="0.7" fill="#ff6a6a"/><circle cx="259.12" cy="307.18" r="2.55" fill="#f00"/><circle cx="259.12" cy="307.18" r="0.7" fill="#ff6a6a"/><circle cx="266.65" cy="307.18" r="2.55" fill="#f00"/><circle cx="266.65" cy="307.18" r="0.7" fill="#ff6a6a"/><circle cx="274.18" cy="307.18" r="2.55" fill="#f00"/><circle cx="274.18" cy="307.18" r="0.7" fill="#ff6a6a"/><circle cx="281.72" cy="307.18" r="2.55" fill="#f00"/><circle cx="281.72" cy="307.18" r="0.7" fill="#ff6a6a"/><circle cx="289.25" cy="307.18" r="2.55" fill="#f00"/><circle cx="289.25" cy="307.18" r="0.7" fill="#ff6a6a"/><circle cx="296.78" cy="307.18" r="2.55" fill="#f00"/><circle cx="296.78" cy="307.18" r="0.7" fill="#ff6a6a"/><circle cx="304.31" cy="307.18" r="2.55" fill="#f00"/><circle cx="304.31" cy="307.18" r="0.7" fill="#ff6a6a"/><circle cx="311.84" cy="307.18" r="2.55" fill="#f00"/><circle cx="311.84" cy="307.18" r="0.7" fill="#ff6a6a"/><circle cx="319.38" cy="307.18" r="2.55" fill="#f00"/><circle cx="319.38" cy="307.18" r="0.7" fill="#ff6a6a"/><circle cx="326.91" cy="307.18" r="2.55" fill="#f00"/><circle cx="326.91" cy="307.18" r="0.7" fill="#ff6a6a"/><circle cx="334.44" cy="307.18" r="2.55" fill="#f00"/><circle cx="334.44" cy="307.18" r="0.7" fill="#ff6a6a"/><circle cx="341.97" cy="307.18" r="2.55" fill="#f00"/><circle cx="341.97" cy="307.18" r="0.7" fill="#ff6a6a"/><circle cx="349.50" cy="307.18" r="2.55" fill="#f00"/><circle cx="349.50" cy="307.18" r="0.7" fill="#ff6a6a"/><circle cx="379.63" cy="307.18" r="2.55" fill="#f00"/><circle cx="379.63" cy="307.18" r="0.7" fill="#ff6a6a"/><circle cx="387.16" cy="307.18" r="2.55" fill="#f00"/><circle cx="387.16" cy="307.18" r="0.7" fill="#ff6a6a"/><circle cx="394.70" cy="307.18" r="2.55" fill="#f00"/><circle cx="394.70" cy="307.18" r="0.7" fill="#ff6a6a"/><circle cx="402.23" cy="307.18" r="2.55" fill="#f00"/><circle cx="402.23" cy="307.18" r="0.7" fill="#ff6a6a"/><circle cx="409.76" cy="307.18" r="2.55" fill="#f00"/><circle cx="409.76" cy="307.18" r="0.7" fill="#ff6a6a"/><circle cx="417.29" cy="307.18" r="2.55" fill="#f00"/><circle cx="417.29" cy="307.18" r="0.7" fill="#ff6a6a"/><circle cx="424.82" cy="307.18" r="2.55" fill="#f00"/><circle cx="424.82" cy="307.18" r="0.7" fill="#ff6a6a"/><circle cx="191.33" cy="314.71" r="2.55" fill="#f00"/><circle cx="191.33" cy="314.71" r="0.7" fill="#ff6a6a"/><circle cx="198.86" cy="314.71" r="2.55" fill="#f00"/><circle cx="198.86" cy="314.71" r="0.7" fill="#ff6a6a"/><circle cx="206.40" cy="314.71" r="2.55" fill="#f00"/><circle cx="206.40" cy="314.71" r="0.7" fill="#ff6a6a"/><circle cx="213.93" cy="314.71" r="2.55" fill="#f00"/><circle cx="213.93" cy="314.71" r="0.7" fill="#ff6a6a"/><circle cx="221.46" cy="314.71" r="2.55" fill="#f00"/><circle cx="221.46" cy="314.71" r="0.7" fill="#ff6a6a"/><circle cx="228.99" cy="314.71" r="2.55" fill="#f00"/><circle cx="228.99" cy="314.71" r="0.7" fill="#ff6a6a"/><circle cx="259.12" cy="314.71" r="2.55" fill="#f00"/><circle cx="259.12" cy="314.71" r="0.7" fill="#ff6a6a"/><circle cx="266.65" cy="314.71" r="2.55" fill="#f00"/><circle cx="266.65" cy="314.71" r="0.7" fill="#ff6a6a"/><circle cx="274.18" cy="314.71" r="2.55" fill="#f00"/><circle cx="274.18" cy="314.71" r="0.7" fill="#ff6a6a"/><circle cx="281.72" cy="314.71" r="2.55" fill="#f00"/><circle cx="281.72" cy="314.71" r="0.7" fill="#ff6a6a"/><circle cx="289.25" cy="314.71" r="2.55" fill="#f00"/><circle cx="289.25" cy="314.71" r="0.7" fill="#ff6a6a"/><circle cx="296.78" cy="314.71" r="2.55" fill="#f00"/><circle cx="296.78" cy="314.71" r="0.7" fill="#ff6a6a"/><circle cx="304.31" cy="314.71" r="2.55" fill="#f00"/><circle cx="304.31" cy="314.71" r="0.7" fill="#ff6a6a"/><circle cx="311.84" cy="314.71" r="2.55" fill="#f00"/><circle cx="311.84" cy="314.71" r="0.7" fill="#ff6a6a"/><circle cx="319.38" cy="314.71" r="2.55" fill="#f00"/><circle cx="319.38" cy="314.71" r="0.7" fill="#ff6a6a"/><circle cx="326.91" cy="314.71" r="2.55" fill="#f00"/><circle cx="326.91" cy="314.71" r="0.7" fill="#ff6a6a"/><circle cx="334.44" cy="314.71" r="2.55" fill="#f00"/><circle cx="334.44" cy="314.71" r="0.7" fill="#ff6a6a"/><circle cx="341.97" cy="314.71" r="2.55" fill="#f00"/><circle cx="341.97" cy="314.71" r="0.7" fill="#ff6a6a"/><circle cx="349.50" cy="314.71" r="2.55" fill="#f00"/><circle cx="349.50" cy="314.71" r="0.7" fill="#ff6a6a"/><circle cx="379.63" cy="314.71" r="2.55" fill="#f00"/><circle cx="379.63" cy="314.71" r="0.7" fill="#ff6a6a"/><circle cx="387.16" cy="314.71" r="2.55" fill="#f00"/><circle cx="387.16" cy="314.71" r="0.7" fill="#ff6a6a"/><circle cx="394.70" cy="314.71" r="2.55" fill="#f00"/><circle cx="394.70" cy="314.71" r="0.7" fill="#ff6a6a"/><circle cx="402.23" cy="314.71" r="2.55" fill="#f00"/><circle cx="402.23" cy="314.71" r="0.7" fill="#ff6a6a"/><circle cx="409.76" cy="314.71" r="2.55" fill="#f00"/><circle cx="409.76" cy="314.71" r="0.7" fill="#ff6a6a"/><circle cx="417.29" cy="314.71" r="2.55" fill="#f00"/><circle cx="417.29" cy="314.71" r="0.7" fill="#ff6a6a"/><circle cx="183.80" cy="322.24" r="2.55" fill="#f00"/><circle cx="183.80" cy="322.24" r="0.7" fill="#ff6a6a"/><circle cx="191.33" cy="322.24" r="2.55" fill="#f00"/><circle cx="191.33" cy="322.24" r="0.7" fill="#ff6a6a"/><circle cx="198.86" cy="322.24" r="2.55" fill="#f00"/><circle cx="198.86" cy="322.24" r="0.7" fill="#ff6a6a"/><circle cx="206.40" cy="322.24" r="2.55" fill="#f00"/><circle cx="206.40" cy="322.24" r="0.7" fill="#ff6a6a"/><circle cx="213.93" cy="322.24" r="2.55" fill="#f00"/><circle cx="213.93" cy="322.24" r="0.7" fill="#ff6a6a"/><circle cx="221.46" cy="322.24" r="2.55" fill="#f00"/><circle cx="221.46" cy="322.24" r="0.7" fill="#ff6a6a"/><circle cx="228.99" cy="322.24" r="2.55" fill="#f00"/><circle cx="228.99" cy="322.24" r="0.7" fill="#ff6a6a"/><circle cx="259.12" cy="322.24" r="2.55" fill="#f00"/><circle cx="259.12" cy="322.24" r="0.7" fill="#ff6a6a"/><circle cx="266.65" cy="322.24" r="2.55" fill="#f00"/><circle cx="266.65" cy="322.24" r="0.7" fill="#ff6a6a"/><circle cx="274.18" cy="322.24" r="2.55" fill="#f00"/><circle cx="274.18" cy="322.24" r="0.7" fill="#ff6a6a"/><circle cx="281.72" cy="322.24" r="2.55" fill="#f00"/><circle cx="281.72" cy="322.24" r="0.7" fill="#ff6a6a"/><circle cx="289.25" cy="322.24" r="2.55" fill="#f00"/><circle cx="289.25" cy="322.24" r="0.7" fill="#ff6a6a"/><circle cx="296.78" cy="322.24" r="2.55" fill="#f00"/><circle cx="296.78" cy="322.24" r="0.7" fill="#ff6a6a"/><circle cx="304.31" cy="322.24" r="2.55" fill="#f00"/><circle cx="304.31" cy="322.24" r="0.7" fill="#ff6a6a"/><circle cx="311.84" cy="322.24" r="2.55" fill="#f00"/><circle cx="311.84" cy="322.24" r="0.7" fill="#ff6a6a"/><circle cx="319.38" cy="322.24" r="2.55" fill="#f00"/><circle cx="319.38" cy="322.24" r="0.7" fill="#ff6a6a"/><circle cx="326.91" cy="322.24" r="2.55" fill="#f00"/><circle cx="326.91" cy="322.24" r="0.7" fill="#ff6a6a"/><circle cx="334.44" cy="322.24" r="2.55" fill="#f00"/><circle cx="334.44" cy="322.24" r="0.7" fill="#ff6a6a"/><circle cx="341.97" cy="322.24" r="2.55" fill="#f00"/><circle cx="341.97" cy="322.24" r="0.7" fill="#ff6a6a"/><circle cx="349.50" cy="322.24" r="2.55" fill="#f00"/><circle cx="349.50" cy="322.24" r="0.7" fill="#ff6a6a"/><circle cx="379.63" cy="322.24" r="2.55" fill="#f00"/><circle cx="379.63" cy="322.24" r="0.7" fill="#ff6a6a"/><circle cx="387.16" cy="322.24" r="2.55" fill="#f00"/><circle cx="387.16" cy="322.24" r="0.7" fill="#ff6a6a"/><circle cx="394.70" cy="322.24" r="2.55" fill="#f00"/><circle cx="394.70" cy="322.24" r="0.7" fill="#ff6a6a"/><circle cx="402.23" cy="322.24" r="2.55" fill="#f00"/><circle cx="402.23" cy="322.24" r="0.7" fill="#ff6a6a"/><circle cx="409.76" cy="322.24" r="2.55" fill="#f00"/><circle cx="409.76" cy="322.24" r="0.7" fill="#ff6a6a"/><circle cx="417.29" cy="322.24" r="2.55" fill="#f00"/><circle cx="417.29" cy="322.24" r="0.7" fill="#ff6a6a"/><circle cx="424.82" cy="322.24" r="2.55" fill="#f00"/><circle cx="424.82" cy="322.24" r="0.7" fill="#ff6a6a"/><circle cx="183.80" cy="329.77" r="2.55" fill="#f00"/><circle cx="183.80" cy="329.77" r="0.7" fill="#ff6a6a"/><circle cx="191.33" cy="329.77" r="2.55" fill="#f00"/><circle cx="191.33" cy="329.77" r="0.7" fill="#ff6a6a"/><circle cx="198.86" cy="329.77" r="2.55" fill="#f00"/><circle cx="198.86" cy="329.77" r="0.7" fill="#ff6a6a"/><circle cx="206.40" cy="329.77" r="2.55" fill="#f00"/><circle cx="206.40" cy="329.77" r="0.7" fill="#ff6a6a"/><circle cx="213.93" cy="329.77" r="2.55" fill="#f00"/><circle cx="213.93" cy="329.77" r="0.7" fill="#ff6a6a"/><circle cx="221.46" cy="329.77" r="2.55" fill="#f00"/><circle cx="221.46" cy="329.77" r="0.7" fill="#ff6a6a"/><circle cx="228.99" cy="329.77" r="2.55" fill="#f00"/><circle cx="228.99" cy="329.77" r="0.7" fill="#ff6a6a"/><circle cx="259.12" cy="329.77" r="2.55" fill="#f00"/><circle cx="259.12" cy="329.77" r="0.7" fill="#ff6a6a"/><circle cx="266.65" cy="329.77" r="2.55" fill="#f00"/><circle cx="266.65" cy="329.77" r="0.7" fill="#ff6a6a"/><circle cx="274.18" cy="329.77" r="2.55" fill="#f00"/><circle cx="274.18" cy="329.77" r="0.7" fill="#ff6a6a"/><circle cx="281.72" cy="329.77" r="2.55" fill="#f00"/><circle cx="281.72" cy="329.77" r="0.7" fill="#ff6a6a"/><circle cx="289.25" cy="329.77" r="2.55" fill="#f00"/><circle cx="289.25" cy="329.77" r="0.7" fill="#ff6a6a"/><circle cx="296.78" cy="329.77" r="2.55" fill="#f00"/><circle cx="296.78" cy="329.77" r="0.7" fill="#ff6a6a"/><circle cx="304.31" cy="329.77" r="2.55" fill="#f00"/><circle cx="304.31" cy="329.77" r="0.7" fill="#ff6a6a"/><circle cx="311.84" cy="329.77" r="2.55" fill="#f00"/><circle cx="311.84" cy="329.77" r="0.7" fill="#ff6a6a"/><circle cx="319.38" cy="329.77" r="2.55" fill="#f00"/><circle cx="319.38" cy="329.77" r="0.7" fill="#ff6a6a"/><circle cx="326.91" cy="329.77" r="2.55" fill="#f00"/><circle cx="326.91" cy="329.77" r="0.7" fill="#ff6a6a"/><circle cx="334.44" cy="329.77" r="2.55" fill="#f00"/><circle cx="334.44" cy="329.77" r="0.7" fill="#ff6a6a"/><circle cx="341.97" cy="329.77" r="2.55" fill="#f00"/><circle cx="341.97" cy="329.77" r="0.7" fill="#ff6a6a"/><circle cx="349.50" cy="329.77" r="2.55" fill="#f00"/><circle cx="349.50" cy="329.77" r="0.7" fill="#ff6a6a"/><circle cx="379.63" cy="329.77" r="2.55" fill="#f00"/><circle cx="379.63" cy="329.77" r="0.7" fill="#ff6a6a"/><circle cx="387.16" cy="329.77" r="2.55" fill="#f00"/><circle cx="387.16" cy="329.77" r="0.7" fill="#ff6a6a"/><circle cx="394.70" cy="329.77" r="2.55" fill="#f00"/><circle cx="394.70" cy="329.77" r="0.7" fill="#ff6a6a"/><circle cx="402.23" cy="329.77" r="2.55" fill="#f00"/><circle cx="402.23" cy="329.77" r="0.7" fill="#ff6a6a"/><circle cx="409.76" cy="329.77" r="2.55" fill="#f00"/><circle cx="409.76" cy="329.77" r="0.7" fill="#ff6a6a"/><circle cx="417.29" cy="329.77" r="2.55" fill="#f00"/><circle cx="417.29" cy="329.77" r="0.7" fill="#ff6a6a"/><circle cx="424.82" cy="329.77" r="2.55" fill="#f00"/><circle cx="424.82" cy="329.77" r="0.7" fill="#ff6a6a"/><circle cx="191.33" cy="337.30" r="2.55" fill="#f00"/><circle cx="191.33" cy="337.30" r="0.7" fill="#ff6a6a"/><circle cx="198.86" cy="337.30" r="2.55" fill="#f00"/><circle cx="198.86" cy="337.30" r="0.7" fill="#ff6a6a"/><circle cx="206.40" cy="337.30" r="2.55" fill="#f00"/><circle cx="206.40" cy="337.30" r="0.7" fill="#ff6a6a"/><circle cx="213.93" cy="337.30" r="2.55" fill="#f00"/><circle cx="213.93" cy="337.30" r="0.7" fill="#ff6a6a"/><circle cx="221.46" cy="337.30" r="2.55" fill="#f00"/><circle cx="221.46" cy="337.30" r="0.7" fill="#ff6a6a"/><circle cx="228.99" cy="337.30" r="2.55" fill="#f00"/><circle cx="228.99" cy="337.30" r="0.7" fill="#ff6a6a"/><circle cx="259.12" cy="337.30" r="2.55" fill="#f00"/><circle cx="259.12" cy="337.30" r="0.7" fill="#ff6a6a"/><circle cx="266.65" cy="337.30" r="2.55" fill="#f00"/><circle cx="266.65" cy="337.30" r="0.7" fill="#ff6a6a"/><circle cx="274.18" cy="337.30" r="2.55" fill="#f00"/><circle cx="274.18" cy="337.30" r="0.7" fill="#ff6a6a"/><circle cx="281.72" cy="337.30" r="2.55" fill="#f00"/><circle cx="281.72" cy="337.30" r="0.7" fill="#ff6a6a"/><circle cx="289.25" cy="337.30" r="2.55" fill="#f00"/><circle cx="289.25" cy="337.30" r="0.7" fill="#ff6a6a"/><circle cx="296.78" cy="337.30" r="2.55" fill="#f00"/><circle cx="296.78" cy="337.30" r="0.7" fill="#ff6a6a"/><circle cx="304.31" cy="337.30" r="2.55" fill="#f00"/><circle cx="304.31" cy="337.30" r="0.7" fill="#ff6a6a"/><circle cx="311.84" cy="337.30" r="2.55" fill="#f00"/><circle cx="311.84" cy="337.30" r="0.7" fill="#ff6a6a"/><circle cx="319.38" cy="337.30" r="2.55" fill="#f00"/><circle cx="319.38" cy="337.30" r="0.7" fill="#ff6a6a"/><circle cx="326.91" cy="337.30" r="2.55" fill="#f00"/><circle cx="326.91" cy="337.30" r="0.7" fill="#ff6a6a"/><circle cx="334.44" cy="337.30" r="2.55" fill="#f00"/><circle cx="334.44" cy="337.30" r="0.7" fill="#ff6a6a"/><circle cx="341.97" cy="337.30" r="2.55" fill="#f00"/><circle cx="341.97" cy="337.30" r="0.7" fill="#ff6a6a"/><circle cx="349.50" cy="337.30" r="2.55" fill="#f00"/><circle cx="349.50" cy="337.30" r="0.7" fill="#ff6a6a"/><circle cx="379.63" cy="337.30" r="2.55" fill="#f00"/><circle cx="379.63" cy="337.30" r="0.7" fill="#ff6a6a"/><circle cx="387.16" cy="337.30" r="2.55" fill="#f00"/><circle cx="387.16" cy="337.30" r="0.7" fill="#ff6a6a"/><circle cx="394.70" cy="337.30" r="2.55" fill="#f00"/><circle cx="394.70" cy="337.30" r="0.7" fill="#ff6a6a"/><circle cx="402.23" cy="337.30" r="2.55" fill="#f00"/><circle cx="402.23" cy="337.30" r="0.7" fill="#ff6a6a"/><circle cx="409.76" cy="337.30" r="2.55" fill="#f00"/><circle cx="409.76" cy="337.30" r="0.7" fill="#ff6a6a"/><circle cx="417.29" cy="337.30" r="2.55" fill="#f00"/><circle cx="417.29" cy="337.30" r="0.7" fill="#ff6a6a"/><circle cx="183.80" cy="344.84" r="2.55" fill="#f00"/><circle cx="183.80" cy="344.84" r="0.7" fill="#ff6a6a"/><circle cx="191.33" cy="344.84" r="2.55" fill="#f00"/><circle cx="191.33" cy="344.84" r="0.7" fill="#ff6a6a"/><circle cx="198.86" cy="344.84" r="2.55" fill="#f00"/><circle cx="198.86" cy="344.84" r="0.7" fill="#ff6a6a"/><circle cx="206.40" cy="344.84" r="2.55" fill="#f00"/><circle cx="206.40" cy="344.84" r="0.7" fill="#ff6a6a"/><circle cx="213.93" cy="344.84" r="2.55" fill="#f00"/><circle cx="213.93" cy="344.84" r="0.7" fill="#ff6a6a"/><circle cx="221.46" cy="344.84" r="2.55" fill="#f00"/><circle cx="221.46" cy="344.84" r="0.7" fill="#ff6a6a"/><circle cx="228.99" cy="344.84" r="2.55" fill="#f00"/><circle cx="228.99" cy="344.84" r="0.7" fill="#ff6a6a"/><circle cx="379.63" cy="344.84" r="2.55" fill="#f00"/><circle cx="379.63" cy="344.84" r="0.7" fill="#ff6a6a"/><circle cx="387.16" cy="344.84" r="2.55" fill="#f00"/><circle cx="387.16" cy="344.84" r="0.7" fill="#ff6a6a"/><circle cx="394.70" cy="344.84" r="2.55" fill="#f00"/><circle cx="394.70" cy="344.84" r="0.7" fill="#ff6a6a"/><circle cx="402.23" cy="344.84" r="2.55" fill="#f00"/><circle cx="402.23" cy="344.84" r="0.7" fill="#ff6a6a"/><circle cx="409.76" cy="344.84" r="2.55" fill="#f00"/><circle cx="409.76" cy="344.84" r="0.7" fill="#ff6a6a"/><circle cx="417.29" cy="344.84" r="2.55" fill="#f00"/><circle cx="417.29" cy="344.84" r="0.7" fill="#ff6a6a"/><circle cx="424.82" cy="344.84" r="2.55" fill="#f00"/><circle cx="424.82" cy="344.84" r="0.7" fill="#ff6a6a"/><circle cx="183.80" cy="352.37" r="2.55" fill="#f00"/><circle cx="183.80" cy="352.37" r="0.7" fill="#ff6a6a"/><circle cx="191.33" cy="352.37" r="2.55" fill="#f00"/><circle cx="191.33" cy="352.37" r="0.7" fill="#ff6a6a"/><circle cx="198.86" cy="352.37" r="2.55" fill="#f00"/><circle cx="198.86" cy="352.37" r="0.7" fill="#ff6a6a"/><circle cx="206.40" cy="352.37" r="2.55" fill="#f00"/><circle cx="206.40" cy="352.37" r="0.7" fill="#ff6a6a"/><circle cx="213.93" cy="352.37" r="2.55" fill="#f00"/><circle cx="213.93" cy="352.37" r="0.7" fill="#ff6a6a"/><circle cx="221.46" cy="352.37" r="2.55" fill="#f00"/><circle cx="221.46" cy="352.37" r="0.7" fill="#ff6a6a"/><circle cx="228.99" cy="352.37" r="2.55" fill="#f00"/><circle cx="228.99" cy="352.37" r="0.7" fill="#ff6a6a"/><circle cx="379.63" cy="352.37" r="2.55" fill="#f00"/><circle cx="379.63" cy="352.37" r="0.7" fill="#ff6a6a"/><circle cx="387.16" cy="352.37" r="2.55" fill="#f00"/><circle cx="387.16" cy="352.37" r="0.7" fill="#ff6a6a"/><circle cx="394.70" cy="352.37" r="2.55" fill="#f00"/><circle cx="394.70" cy="352.37" r="0.7" fill="#ff6a6a"/><circle cx="402.23" cy="352.37" r="2.55" fill="#f00"/><circle cx="402.23" cy="352.37" r="0.7" fill="#ff6a6a"/><circle cx="409.76" cy="352.37" r="2.55" fill="#f00"/><circle cx="409.76" cy="352.37" r="0.7" fill="#ff6a6a"/><circle cx="417.29" cy="352.37" r="2.55" fill="#f00"/><circle cx="417.29" cy="352.37" r="0.7" fill="#ff6a6a"/><circle cx="424.82" cy="352.37" r="2.55" fill="#f00"/><circle cx="424.82" cy="352.37" r="0.7" fill="#ff6a6a"/><circle cx="191.33" cy="359.90" r="2.55" fill="#f00"/><circle cx="191.33" cy="359.90" r="0.7" fill="#ff6a6a"/><circle cx="198.86" cy="359.90" r="2.55" fill="#f00"/><circle cx="198.86" cy="359.90" r="0.7" fill="#ff6a6a"/><circle cx="206.40" cy="359.90" r="2.55" fill="#f00"/><circle cx="206.40" cy="359.90" r="0.7" fill="#ff6a6a"/><circle cx="213.93" cy="359.90" r="2.55" fill="#f00"/><circle cx="213.93" cy="359.90" r="0.7" fill="#ff6a6a"/><circle cx="221.46" cy="359.90" r="2.55" fill="#f00"/><circle cx="221.46" cy="359.90" r="0.7" fill="#ff6a6a"/><circle cx="228.99" cy="359.90" r="2.55" fill="#f00"/><circle cx="228.99" cy="359.90" r="0.7" fill="#ff6a6a"/><circle cx="379.63" cy="359.90" r="2.55" fill="#f00"/><circle cx="379.63" cy="359.90" r="0.7" fill="#ff6a6a"/><circle cx="387.16" cy="359.90" r="2.55" fill="#f00"/><circle cx="387.16" cy="359.90" r="0.7" fill="#ff6a6a"/><circle cx="394.70" cy="359.90" r="2.55" fill="#f00"/><circle cx="394.70" cy="359.90" r="0.7" fill="#ff6a6a"/><circle cx="402.23" cy="359.90" r="2.55" fill="#f00"/><circle cx="402.23" cy="359.90" r="0.7" fill="#ff6a6a"/><circle cx="409.76" cy="359.90" r="2.55" fill="#f00"/><circle cx="409.76" cy="359.90" r="0.7" fill="#ff6a6a"/><circle cx="417.29" cy="359.90" r="2.55" fill="#f00"/><circle cx="417.29" cy="359.90" r="0.7" fill="#ff6a6a"/><circle cx="183.80" cy="367.43" r="2.55" fill="#f00"/><circle cx="183.80" cy="367.43" r="0.7" fill="#ff6a6a"/><circle cx="191.33" cy="367.43" r="2.55" fill="#f00"/><circle cx="191.33" cy="367.43" r="0.7" fill="#ff6a6a"/><circle cx="198.86" cy="367.43" r="2.55" fill="#f00"/><circle cx="198.86" cy="367.43" r="0.7" fill="#ff6a6a"/><circle cx="206.40" cy="367.43" r="2.55" fill="#f00"/><circle cx="206.40" cy="367.43" r="0.7" fill="#ff6a6a"/><circle cx="213.93" cy="367.43" r="2.55" fill="#f00"/><circle cx="213.93" cy="367.43" r="0.7" fill="#ff6a6a"/><circle cx="221.46" cy="367.43" r="2.55" fill="#f00"/><circle cx="221.46" cy="367.43" r="0.7" fill="#ff6a6a"/><circle cx="228.99" cy="367.43" r="2.55" fill="#f00"/><circle cx="228.99" cy="367.43" r="0.7" fill="#ff6a6a"/><circle cx="236.52" cy="367.43" r="2.55" fill="#f00"/><circle cx="236.52" cy="367.43" r="0.7" fill="#ff6a6a"/><circle cx="281.72" cy="367.43" r="2.55" fill="#f00"/><circle cx="281.72" cy="367.43" r="0.7" fill="#ff6a6a"/><circle cx="289.25" cy="367.43" r="2.55" fill="#f00"/><circle cx="289.25" cy="367.43" r="0.7" fill="#ff6a6a"/><circle cx="296.78" cy="367.43" r="2.55" fill="#f00"/><circle cx="296.78" cy="367.43" r="0.7" fill="#ff6a6a"/><circle cx="304.31" cy="367.43" r="2.55" fill="#f00"/><circle cx="304.31" cy="367.43" r="0.7" fill="#ff6a6a"/><circle cx="311.84" cy="367.43" r="2.55" fill="#f00"/><circle cx="311.84" cy="367.43" r="0.7" fill="#ff6a6a"/><circle cx="319.38" cy="367.43" r="2.55" fill="#f00"/><circle cx="319.38" cy="367.43" r="0.7" fill="#ff6a6a"/><circle cx="326.91" cy="367.43" r="2.55" fill="#f00"/><circle cx="326.91" cy="367.43" r="0.7" fill="#ff6a6a"/><circle cx="334.44" cy="367.43" r="2.55" fill="#f00"/><circle cx="334.44" cy="367.43" r="0.7" fill="#ff6a6a"/><circle cx="341.97" cy="367.43" r="2.55" fill="#f00"/><circle cx="341.97" cy="367.43" r="0.7" fill="#ff6a6a"/><circle cx="349.50" cy="367.43" r="2.55" fill="#f00"/><circle cx="349.50" cy="367.43" r="0.7" fill="#ff6a6a"/><circle cx="357.04" cy="367.43" r="2.55" fill="#f00"/><circle cx="357.04" cy="367.43" r="0.7" fill="#ff6a6a"/><circle cx="364.57" cy="367.43" r="2.55" fill="#f00"/><circle cx="364.57" cy="367.43" r="0.7" fill="#ff6a6a"/><circle cx="372.10" cy="367.43" r="2.55" fill="#f00"/><circle cx="372.10" cy="367.43" r="0.7" fill="#ff6a6a"/><circle cx="379.63" cy="367.43" r="2.55" fill="#f00"/><circle cx="379.63" cy="367.43" r="0.7" fill="#ff6a6a"/><circle cx="387.16" cy="367.43" r="2.55" fill="#f00"/><circle cx="387.16" cy="367.43" r="0.7" fill="#ff6a6a"/><circle cx="394.70" cy="367.43" r="2.55" fill="#f00"/><circle cx="394.70" cy="367.43" r="0.7" fill="#ff6a6a"/><circle cx="402.23" cy="367.43" r="2.55" fill="#f00"/><circle cx="402.23" cy="367.43" r="0.7" fill="#ff6a6a"/><circle cx="409.76" cy="367.43" r="2.55" fill="#f00"/><circle cx="409.76" cy="367.43" r="0.7" fill="#ff6a6a"/><circle cx="417.29" cy="367.43" r="2.55" fill="#f00"/><circle cx="417.29" cy="367.43" r="0.7" fill="#ff6a6a"/><circle cx="424.82" cy="367.43" r="2.55" fill="#f00"/><circle cx="424.82" cy="367.43" r="0.7" fill="#ff6a6a"/><circle cx="183.80" cy="374.96" r="2.55" fill="#f00"/><circle cx="183.80" cy="374.96" r="0.7" fill="#ff6a6a"/><circle cx="191.33" cy="374.96" r="2.55" fill="#f00"/><circle cx="191.33" cy="374.96" r="0.7" fill="#ff6a6a"/><circle cx="198.86" cy="374.96" r="2.55" fill="#f00"/><circle cx="198.86" cy="374.96" r="0.7" fill="#ff6a6a"/><circle cx="206.40" cy="374.96" r="2.55" fill="#f00"/><circle cx="206.40" cy="374.96" r="0.7" fill="#ff6a6a"/><circle cx="213.93" cy="374.96" r="2.55" fill="#f00"/><circle cx="213.93" cy="374.96" r="0.7" fill="#ff6a6a"/><circle cx="221.46" cy="374.96" r="2.55" fill="#f00"/><circle cx="221.46" cy="374.96" r="0.7" fill="#ff6a6a"/><circle cx="228.99" cy="374.96" r="2.55" fill="#f00"/><circle cx="228.99" cy="374.96" r="0.7" fill="#ff6a6a"/><circle cx="236.52" cy="374.96" r="2.55" fill="#f00"/><circle cx="236.52" cy="374.96" r="0.7" fill="#ff6a6a"/><circle cx="244.06" cy="374.96" r="2.55" fill="#f00"/><circle cx="244.06" cy="374.96" r="0.7" fill="#ff6a6a"/><circle cx="251.59" cy="374.96" r="2.55" fill="#f00"/><circle cx="251.59" cy="374.96" r="0.7" fill="#ff6a6a"/><circle cx="259.12" cy="374.96" r="2.55" fill="#f00"/><circle cx="259.12" cy="374.96" r="0.7" fill="#ff6a6a"/><circle cx="266.65" cy="374.96" r="2.55" fill="#f00"/><circle cx="266.65" cy="374.96" r="0.7" fill="#ff6a6a"/><circle cx="274.18" cy="374.96" r="2.55" fill="#f00"/><circle cx="274.18" cy="374.96" r="0.7" fill="#ff6a6a"/><circle cx="281.72" cy="374.96" r="2.55" fill="#f00"/><circle cx="281.72" cy="374.96" r="0.7" fill="#ff6a6a"/><circle cx="289.25" cy="374.96" r="2.55" fill="#f00"/><circle cx="289.25" cy="374.96" r="0.7" fill="#ff6a6a"/><circle cx="296.78" cy="374.96" r="2.55" fill="#f00"/><circle cx="296.78" cy="374.96" r="0.7" fill="#ff6a6a"/><circle cx="304.31" cy="374.96" r="2.55" fill="#f00"/><circle cx="304.31" cy="374.96" r="0.7" fill="#ff6a6a"/><circle cx="311.84" cy="374.96" r="2.55" fill="#f00"/><circle cx="311.84" cy="374.96" r="0.7" fill="#ff6a6a"/><circle cx="319.38" cy="374.96" r="2.55" fill="#f00"/><circle cx="319.38" cy="374.96" r="0.7" fill="#ff6a6a"/><circle cx="326.91" cy="374.96" r="2.55" fill="#f00"/><circle cx="326.91" cy="374.96" r="0.7" fill="#ff6a6a"/><circle cx="334.44" cy="374.96" r="2.55" fill="#f00"/><circle cx="334.44" cy="374.96" r="0.7" fill="#ff6a6a"/><circle cx="341.97" cy="374.96" r="2.55" fill="#f00"/><circle cx="341.97" cy="374.96" r="0.7" fill="#ff6a6a"/><circle cx="349.50" cy="374.96" r="2.55" fill="#f00"/><circle cx="349.50" cy="374.96" r="0.7" fill="#ff6a6a"/><circle cx="357.04" cy="374.96" r="2.55" fill="#f00"/><circle cx="357.04" cy="374.96" r="0.7" fill="#ff6a6a"/><circle cx="364.57" cy="374.96" r="2.55" fill="#f00"/><circle cx="364.57" cy="374.96" r="0.7" fill="#ff6a6a"/><circle cx="372.10" cy="374.96" r="2.55" fill="#f00"/><circle cx="372.10" cy="374.96" r="0.7" fill="#ff6a6a"/><circle cx="379.63" cy="374.96" r="2.55" fill="#f00"/><circle cx="379.63" cy="374.96" r="0.7" fill="#ff6a6a"/><circle cx="387.16" cy="374.96" r="2.55" fill="#f00"/><circle cx="387.16" cy="374.96" r="0.7" fill="#ff6a6a"/><circle cx="394.70" cy="374.96" r="2.55" fill="#f00"/><circle cx="394.70" cy="374.96" r="0.7" fill="#ff6a6a"/><circle cx="402.23" cy="374.96" r="2.55" fill="#f00"/><circle cx="402.23" cy="374.96" r="0.7" fill="#ff6a6a"/><circle cx="409.76" cy="374.96" r="2.55" fill="#f00"/><circle cx="409.76" cy="374.96" r="0.7" fill="#ff6a6a"/><circle cx="417.29" cy="374.96" r="2.55" fill="#f00"/><circle cx="417.29" cy="374.96" r="0.7" fill="#ff6a6a"/><circle cx="424.82" cy="374.96" r="2.55" fill="#f00"/><circle cx="424.82" cy="374.96" r="0.7" fill="#ff6a6a"/><circle cx="191.33" cy="382.50" r="2.55" fill="#f00"/><circle cx="191.33" cy="382.50" r="0.7" fill="#ff6a6a"/><circle cx="198.86" cy="382.50" r="2.55" fill="#f00"/><circle cx="198.86" cy="382.50" r="0.7" fill="#ff6a6a"/><circle cx="206.40" cy="382.50" r="2.55" fill="#f00"/><circle cx="206.40" cy="382.50" r="0.7" fill="#ff6a6a"/><circle cx="213.93" cy="382.50" r="2.55" fill="#f00"/><circle cx="213.93" cy="382.50" r="0.7" fill="#ff6a6a"/><circle cx="221.46" cy="382.50" r="2.55" fill="#f00"/><circle cx="221.46" cy="382.50" r="0.7" fill="#ff6a6a"/><circle cx="228.99" cy="382.50" r="2.55" fill="#f00"/><circle cx="228.99" cy="382.50" r="0.7" fill="#ff6a6a"/><circle cx="236.52" cy="382.50" r="2.55" fill="#f00"/><circle cx="236.52" cy="382.50" r="0.7" fill="#ff6a6a"/><circle cx="244.06" cy="382.50" r="2.55" fill="#f00"/><circle cx="244.06" cy="382.50" r="0.7" fill="#ff6a6a"/><circle cx="251.59" cy="382.50" r="2.55" fill="#f00"/><circle cx="251.59" cy="382.50" r="0.7" fill="#ff6a6a"/><circle cx="259.12" cy="382.50" r="2.55" fill="#f00"/><circle cx="259.12" cy="382.50" r="0.7" fill="#ff6a6a"/><circle cx="266.65" cy="382.50" r="2.55" fill="#f00"/><circle cx="266.65" cy="382.50" r="0.7" fill="#ff6a6a"/><circle cx="274.18" cy="382.50" r="2.55" fill="#f00"/><circle cx="274.18" cy="382.50" r="0.7" fill="#ff6a6a"/><circle cx="281.72" cy="382.50" r="2.55" fill="#f00"/><circle cx="281.72" cy="382.50" r="0.7" fill="#ff6a6a"/><circle cx="289.25" cy="382.50" r="2.55" fill="#f00"/><circle cx="289.25" cy="382.50" r="0.7" fill="#ff6a6a"/><circle cx="296.78" cy="382.50" r="2.55" fill="#f00"/><circle cx="296.78" cy="382.50" r="0.7" fill="#ff6a6a"/><circle cx="304.31" cy="382.50" r="2.55" fill="#f00"/><circle cx="304.31" cy="382.50" r="0.7" fill="#ff6a6a"/><circle cx="311.84" cy="382.50" r="2.55" fill="#f00"/><circle cx="311.84" cy="382.50" r="0.7" fill="#ff6a6a"/><circle cx="319.38" cy="382.50" r="2.55" fill="#f00"/><circle cx="319.38" cy="382.50" r="0.7" fill="#ff6a6a"/><circle cx="326.91" cy="382.50" r="2.55" fill="#f00"/><circle cx="326.91" cy="382.50" r="0.7" fill="#ff6a6a"/><circle cx="334.44" cy="382.50" r="2.55" fill="#f00"/><circle cx="334.44" cy="382.50" r="0.7" fill="#ff6a6a"/><circle cx="341.97" cy="382.50" r="2.55" fill="#f00"/><circle cx="341.97" cy="382.50" r="0.7" fill="#ff6a6a"/><circle cx="349.50" cy="382.50" r="2.55" fill="#f00"/><circle cx="349.50" cy="382.50" r="0.7" fill="#ff6a6a"/><circle cx="357.04" cy="382.50" r="2.55" fill="#f00"/><circle cx="357.04" cy="382.50" r="0.7" fill="#ff6a6a"/><circle cx="364.57" cy="382.50" r="2.55" fill="#f00"/><circle cx="364.57" cy="382.50" r="0.7" fill="#ff6a6a"/><circle cx="372.10" cy="382.50" r="2.55" fill="#f00"/><circle cx="372.10" cy="382.50" r="0.7" fill="#ff6a6a"/><circle cx="379.63" cy="382.50" r="2.55" fill="#f00"/><circle cx="379.63" cy="382.50" r="0.7" fill="#ff6a6a"/><circle cx="387.16" cy="382.50" r="2.55" fill="#f00"/><circle cx="387.16" cy="382.50" r="0.7" fill="#ff6a6a"/><circle cx="394.70" cy="382.50" r="2.55" fill="#f00"/><circle cx="394.70" cy="382.50" r="0.7" fill="#ff6a6a"/><circle cx="402.23" cy="382.50" r="2.55" fill="#f00"/><circle cx="402.23" cy="382.50" r="0.7" fill="#ff6a6a"/><circle cx="409.76" cy="382.50" r="2.55" fill="#f00"/><circle cx="409.76" cy="382.50" r="0.7" fill="#ff6a6a"/><circle cx="417.29" cy="382.50" r="2.55" fill="#f00"/><circle cx="417.29" cy="382.50" r="0.7" fill="#ff6a6a"/><circle cx="183.80" cy="390.03" r="2.55" fill="#f00"/><circle cx="183.80" cy="390.03" r="0.7" fill="#ff6a6a"/><circle cx="191.33" cy="390.03" r="2.55" fill="#f00"/><circle cx="191.33" cy="390.03" r="0.7" fill="#ff6a6a"/><circle cx="198.86" cy="390.03" r="2.55" fill="#f00"/><circle cx="198.86" cy="390.03" r="0.7" fill="#ff6a6a"/><circle cx="206.40" cy="390.03" r="2.55" fill="#f00"/><circle cx="206.40" cy="390.03" r="0.7" fill="#ff6a6a"/><circle cx="213.93" cy="390.03" r="2.55" fill="#f00"/><circle cx="213.93" cy="390.03" r="0.7" fill="#ff6a6a"/><circle cx="221.46" cy="390.03" r="2.55" fill="#f00"/><circle cx="221.46" cy="390.03" r="0.7" fill="#ff6a6a"/><circle cx="228.99" cy="390.03" r="2.55" fill="#f00"/><circle cx="228.99" cy="390.03" r="0.7" fill="#ff6a6a"/><circle cx="236.52" cy="390.03" r="2.55" fill="#f00"/><circle cx="236.52" cy="390.03" r="0.7" fill="#ff6a6a"/><circle cx="244.06" cy="390.03" r="2.55" fill="#f00"/><circle cx="244.06" cy="390.03" r="0.7" fill="#ff6a6a"/><circle cx="251.59" cy="390.03" r="2.55" fill="#f00"/><circle cx="251.59" cy="390.03" r="0.7" fill="#ff6a6a"/><circle cx="259.12" cy="390.03" r="2.55" fill="#f00"/><circle cx="259.12" cy="390.03" r="0.7" fill="#ff6a6a"/><circle cx="266.65" cy="390.03" r="2.55" fill="#f00"/><circle cx="266.65" cy="390.03" r="0.7" fill="#ff6a6a"/><circle cx="274.18" cy="390.03" r="2.55" fill="#f00"/><circle cx="274.18" cy="390.03" r="0.7" fill="#ff6a6a"/><circle cx="281.72" cy="390.03" r="2.55" fill="#f00"/><circle cx="281.72" cy="390.03" r="0.7" fill="#ff6a6a"/><circle cx="289.25" cy="390.03" r="2.55" fill="#f00"/><circle cx="289.25" cy="390.03" r="0.7" fill="#ff6a6a"/><circle cx="296.78" cy="390.03" r="2.55" fill="#f00"/><circle cx="296.78" cy="390.03" r="0.7" fill="#ff6a6a"/><circle cx="304.31" cy="390.03" r="2.55" fill="#f00"/><circle cx="304.31" cy="390.03" r="0.7" fill="#ff6a6a"/><circle cx="311.84" cy="390.03" r="2.55" fill="#f00"/><circle cx="311.84" cy="390.03" r="0.7" fill="#ff6a6a"/><circle cx="319.38" cy="390.03" r="2.55" fill="#f00"/><circle cx="319.38" cy="390.03" r="0.7" fill="#ff6a6a"/><circle cx="326.91" cy="390.03" r="2.55" fill="#f00"/><circle cx="326.91" cy="390.03" r="0.7" fill="#ff6a6a"/><circle cx="334.44" cy="390.03" r="2.55" fill="#f00"/><circle cx="334.44" cy="390.03" r="0.7" fill="#ff6a6a"/><circle cx="341.97" cy="390.03" r="2.55" fill="#f00"/><circle cx="341.97" cy="390.03" r="0.7" fill="#ff6a6a"/><circle cx="349.50" cy="390.03" r="2.55" fill="#f00"/><circle cx="349.50" cy="390.03" r="0.7" fill="#ff6a6a"/><circle cx="357.04" cy="390.03" r="2.55" fill="#f00"/><circle cx="357.04" cy="390.03" r="0.7" fill="#ff6a6a"/><circle cx="364.57" cy="390.03" r="2.55" fill="#f00"/><circle cx="364.57" cy="390.03" r="0.7" fill="#ff6a6a"/><circle cx="372.10" cy="390.03" r="2.55" fill="#f00"/><circle cx="372.10" cy="390.03" r="0.7" fill="#ff6a6a"/><circle cx="379.63" cy="390.03" r="2.55" fill="#f00"/><circle cx="379.63" cy="390.03" r="0.7" fill="#ff6a6a"/><circle cx="387.16" cy="390.03" r="2.55" fill="#f00"/><circle cx="387.16" cy="390.03" r="0.7" fill="#ff6a6a"/><circle cx="394.70" cy="390.03" r="2.55" fill="#f00"/><circle cx="394.70" cy="390.03" r="0.7" fill="#ff6a6a"/><circle cx="402.23" cy="390.03" r="2.55" fill="#f00"/><circle cx="402.23" cy="390.03" r="0.7" fill="#ff6a6a"/><circle cx="409.76" cy="390.03" r="2.55" fill="#f00"/><circle cx="409.76" cy="390.03" r="0.7" fill="#ff6a6a"/><circle cx="417.29" cy="390.03" r="2.55" fill="#f00"/><circle cx="417.29" cy="390.03" r="0.7" fill="#ff6a6a"/><circle cx="424.82" cy="390.03" r="2.55" fill="#f00"/><circle cx="424.82" cy="390.03" r="0.7" fill="#ff6a6a"/><circle cx="183.80" cy="397.56" r="2.55" fill="#f00"/><circle cx="183.80" cy="397.56" r="0.7" fill="#ff6a6a"/><circle cx="191.33" cy="397.56" r="2.55" fill="#f00"/><circle cx="191.33" cy="397.56" r="0.7" fill="#ff6a6a"/><circle cx="198.86" cy="397.56" r="2.55" fill="#f00"/><circle cx="198.86" cy="397.56" r="0.7" fill="#ff6a6a"/><circle cx="206.40" cy="397.56" r="2.55" fill="#f00"/><circle cx="206.40" cy="397.56" r="0.7" fill="#ff6a6a"/><circle cx="213.93" cy="397.56" r="2.55" fill="#f00"/><circle cx="213.93" cy="397.56" r="0.7" fill="#ff6a6a"/><circle cx="221.46" cy="397.56" r="2.55" fill="#f00"/><circle cx="221.46" cy="397.56" r="0.7" fill="#ff6a6a"/><circle cx="228.99" cy="397.56" r="2.55" fill="#f00"/><circle cx="228.99" cy="397.56" r="0.7" fill="#ff6a6a"/><circle cx="236.52" cy="397.56" r="2.55" fill="#f00"/><circle cx="236.52" cy="397.56" r="0.7" fill="#ff6a6a"/><circle cx="244.06" cy="397.56" r="2.55" fill="#f00"/><circle cx="244.06" cy="397.56" r="0.7" fill="#ff6a6a"/><circle cx="251.59" cy="397.56" r="2.55" fill="#f00"/><circle cx="251.59" cy="397.56" r="0.7" fill="#ff6a6a"/><circle cx="259.12" cy="397.56" r="2.55" fill="#f00"/><circle cx="259.12" cy="397.56" r="0.7" fill="#ff6a6a"/><circle cx="266.65" cy="397.56" r="2.55" fill="#f00"/><circle cx="266.65" cy="397.56" r="0.7" fill="#ff6a6a"/><circle cx="274.18" cy="397.56" r="2.55" fill="#f00"/><circle cx="274.18" cy="397.56" r="0.7" fill="#ff6a6a"/><circle cx="281.72" cy="397.56" r="2.55" fill="#f00"/><circle cx="281.72" cy="397.56" r="0.7" fill="#ff6a6a"/><circle cx="289.25" cy="397.56" r="2.55" fill="#f00"/><circle cx="289.25" cy="397.56" r="0.7" fill="#ff6a6a"/><circle cx="296.78" cy="397.56" r="2.55" fill="#f00"/><circle cx="296.78" cy="397.56" r="0.7" fill="#ff6a6a"/><circle cx="304.31" cy="397.56" r="2.55" fill="#f00"/><circle cx="304.31" cy="397.56" r="0.7" fill="#ff6a6a"/><circle cx="311.84" cy="397.56" r="2.55" fill="#f00"/><circle cx="311.84" cy="397.56" r="0.7" fill="#ff6a6a"/><circle cx="319.38" cy="397.56" r="2.55" fill="#f00"/><circle cx="319.38" cy="397.56" r="0.7" fill="#ff6a6a"/><circle cx="326.91" cy="397.56" r="2.55" fill="#f00"/><circle cx="326.91" cy="397.56" r="0.7" fill="#ff6a6a"/><circle cx="334.44" cy="397.56" r="2.55" fill="#f00"/><circle cx="334.44" cy="397.56" r="0.7" fill="#ff6a6a"/><circle cx="341.97" cy="397.56" r="2.55" fill="#f00"/><circle cx="341.97" cy="397.56" r="0.7" fill="#ff6a6a"/><circle cx="349.50" cy="397.56" r="2.55" fill="#f00"/><circle cx="349.50" cy="397.56" r="0.7" fill="#ff6a6a"/><circle cx="357.04" cy="397.56" r="2.55" fill="#f00"/><circle cx="357.04" cy="397.56" r="0.7" fill="#ff6a6a"/><circle cx="364.57" cy="397.56" r="2.55" fill="#f00"/><circle cx="364.57" cy="397.56" r="0.7" fill="#ff6a6a"/><circle cx="372.10" cy="397.56" r="2.55" fill="#f00"/><circle cx="372.10" cy="397.56" r="0.7" fill="#ff6a6a"/><circle cx="379.63" cy="397.56" r="2.55" fill="#f00"/><circle cx="379.63" cy="397.56" r="0.7" fill="#ff6a6a"/><circle cx="387.16" cy="397.56" r="2.55" fill="#f00"/><circle cx="387.16" cy="397.56" r="0.7" fill="#ff6a6a"/><circle cx="394.70" cy="397.56" r="2.55" fill="#f00"/><circle cx="394.70" cy="397.56" r="0.7" fill="#ff6a6a"/><circle cx="402.23" cy="397.56" r="2.55" fill="#f00"/><circle cx="402.23" cy="397.56" r="0.7" fill="#ff6a6a"/><circle cx="409.76" cy="397.56" r="2.55" fill="#f00"/><circle cx="409.76" cy="397.56" r="0.7" fill="#ff6a6a"/><circle cx="417.29" cy="397.56" r="2.55" fill="#f00"/><circle cx="417.29" cy="397.56" r="0.7" fill="#ff6a6a"/><circle cx="424.82" cy="397.56" r="2.55" fill="#f00"/><circle cx="424.82" cy="397.56" r="0.7" fill="#ff6a6a"/><circle cx="183.80" cy="405.09" r="2.55" fill="#f00"/><circle cx="183.80" cy="405.09" r="0.7" fill="#ff6a6a"/><circle cx="191.33" cy="405.09" r="2.55" fill="#f00"/><circle cx="191.33" cy="405.09" r="0.7" fill="#ff6a6a"/><circle cx="198.86" cy="405.09" r="2.55" fill="#f00"/><circle cx="198.86" cy="405.09" r="0.7" fill="#ff6a6a"/><circle cx="206.40" cy="405.09" r="2.55" fill="#f00"/><circle cx="206.40" cy="405.09" r="0.7" fill="#ff6a6a"/><circle cx="213.93" cy="405.09" r="2.55" fill="#f00"/><circle cx="213.93" cy="405.09" r="0.7" fill="#ff6a6a"/><circle cx="221.46" cy="405.09" r="2.55" fill="#f00"/><circle cx="221.46" cy="405.09" r="0.7" fill="#ff6a6a"/><circle cx="228.99" cy="405.09" r="2.55" fill="#f00"/><circle cx="228.99" cy="405.09" r="0.7" fill="#ff6a6a"/><circle cx="236.52" cy="405.09" r="2.55" fill="#f00"/><circle cx="236.52" cy="405.09" r="0.7" fill="#ff6a6a"/><circle cx="244.06" cy="405.09" r="2.55" fill="#f00"/><circle cx="244.06" cy="405.09" r="0.7" fill="#ff6a6a"/><circle cx="251.59" cy="405.09" r="2.55" fill="#f00"/><circle cx="251.59" cy="405.09" r="0.7" fill="#ff6a6a"/><circle cx="259.12" cy="405.09" r="2.55" fill="#f00"/><circle cx="259.12" cy="405.09" r="0.7" fill="#ff6a6a"/><circle cx="266.65" cy="405.09" r="2.55" fill="#f00"/><circle cx="266.65" cy="405.09" r="0.7" fill="#ff6a6a"/><circle cx="274.18" cy="405.09" r="2.55" fill="#f00"/><circle cx="274.18" cy="405.09" r="0.7" fill="#ff6a6a"/><circle cx="281.72" cy="405.09" r="2.55" fill="#f00"/><circle cx="281.72" cy="405.09" r="0.7" fill="#ff6a6a"/><circle cx="289.25" cy="405.09" r="2.55" fill="#f00"/><circle cx="289.25" cy="405.09" r="0.7" fill="#ff6a6a"/><circle cx="296.78" cy="405.09" r="2.55" fill="#f00"/><circle cx="296.78" cy="405.09" r="0.7" fill="#ff6a6a"/><circle cx="304.31" cy="405.09" r="2.55" fill="#f00"/><circle cx="304.31" cy="405.09" r="0.7" fill="#ff6a6a"/><circle cx="311.84" cy="405.09" r="2.55" fill="#f00"/><circle cx="311.84" cy="405.09" r="0.7" fill="#ff6a6a"/><circle cx="319.38" cy="405.09" r="2.55" fill="#f00"/><circle cx="319.38" cy="405.09" r="0.7" fill="#ff6a6a"/><circle cx="326.91" cy="405.09" r="2.55" fill="#f00"/><circle cx="326.91" cy="405.09" r="0.7" fill="#ff6a6a"/><circle cx="334.44" cy="405.09" r="2.55" fill="#f00"/><circle cx="334.44" cy="405.09" r="0.7" fill="#ff6a6a"/><circle cx="341.97" cy="405.09" r="2.55" fill="#f00"/><circle cx="341.97" cy="405.09" r="0.7" fill="#ff6a6a"/><circle cx="349.50" cy="405.09" r="2.55" fill="#f00"/><circle cx="349.50" cy="405.09" r="0.7" fill="#ff6a6a"/><circle cx="357.04" cy="405.09" r="2.55" fill="#f00"/><circle cx="357.04" cy="405.09" r="0.7" fill="#ff6a6a"/><circle cx="364.57" cy="405.09" r="2.55" fill="#f00"/><circle cx="364.57" cy="405.09" r="0.7" fill="#ff6a6a"/><circle cx="372.10" cy="405.09" r="2.55" fill="#f00"/><circle cx="372.10" cy="405.09" r="0.7" fill="#ff6a6a"/><circle cx="379.63" cy="405.09" r="2.55" fill="#f00"/><circle cx="379.63" cy="405.09" r="0.7" fill="#ff6a6a"/><circle cx="387.16" cy="405.09" r="2.55" fill="#f00"/><circle cx="387.16" cy="405.09" r="0.7" fill="#ff6a6a"/><circle cx="394.70" cy="405.09" r="2.55" fill="#f00"/><circle cx="394.70" cy="405.09" r="0.7" fill="#ff6a6a"/><circle cx="402.23" cy="405.09" r="2.55" fill="#f00"/><circle cx="402.23" cy="405.09" r="0.7" fill="#ff6a6a"/><circle cx="409.76" cy="405.09" r="2.55" fill="#f00"/><circle cx="409.76" cy="405.09" r="0.7" fill="#ff6a6a"/><circle cx="417.29" cy="405.09" r="2.55" fill="#f00"/><circle cx="417.29" cy="405.09" r="0.7" fill="#ff6a6a"/><circle cx="424.82" cy="405.09" r="2.55" fill="#f00"/><circle cx="424.82" cy="405.09" r="0.7" fill="#ff6a6a"/><circle cx="191.33" cy="412.62" r="2.55" fill="#f00"/><circle cx="191.33" cy="412.62" r="0.7" fill="#ff6a6a"/><circle cx="198.86" cy="412.62" r="2.55" fill="#f00"/><circle cx="198.86" cy="412.62" r="0.7" fill="#ff6a6a"/><circle cx="206.40" cy="412.62" r="2.55" fill="#f00"/><circle cx="206.40" cy="412.62" r="0.7" fill="#ff6a6a"/><circle cx="221.46" cy="412.62" r="2.55" fill="#f00"/><circle cx="221.46" cy="412.62" r="0.7" fill="#ff6a6a"/><circle cx="228.99" cy="412.62" r="2.55" fill="#f00"/><circle cx="228.99" cy="412.62" r="0.7" fill="#ff6a6a"/><circle cx="244.06" cy="412.62" r="2.55" fill="#f00"/><circle cx="244.06" cy="412.62" r="0.7" fill="#ff6a6a"/><circle cx="251.59" cy="412.62" r="2.55" fill="#f00"/><circle cx="251.59" cy="412.62" r="0.7" fill="#ff6a6a"/><circle cx="266.65" cy="412.62" r="2.55" fill="#f00"/><circle cx="266.65" cy="412.62" r="0.7" fill="#ff6a6a"/><circle cx="274.18" cy="412.62" r="2.55" fill="#f00"/><circle cx="274.18" cy="412.62" r="0.7" fill="#ff6a6a"/><circle cx="289.25" cy="412.62" r="2.55" fill="#f00"/><circle cx="289.25" cy="412.62" r="0.7" fill="#ff6a6a"/><circle cx="296.78" cy="412.62" r="2.55" fill="#f00"/><circle cx="296.78" cy="412.62" r="0.7" fill="#ff6a6a"/><circle cx="311.84" cy="412.62" r="2.55" fill="#f00"/><circle cx="311.84" cy="412.62" r="0.7" fill="#ff6a6a"/><circle cx="319.38" cy="412.62" r="2.55" fill="#f00"/><circle cx="319.38" cy="412.62" r="0.7" fill="#ff6a6a"/><circle cx="334.44" cy="412.62" r="2.55" fill="#f00"/><circle cx="334.44" cy="412.62" r="0.7" fill="#ff6a6a"/><circle cx="341.97" cy="412.62" r="2.55" fill="#f00"/><circle cx="341.97" cy="412.62" r="0.7" fill="#ff6a6a"/><circle cx="357.04" cy="412.62" r="2.55" fill="#f00"/><circle cx="357.04" cy="412.62" r="0.7" fill="#ff6a6a"/><circle cx="364.57" cy="412.62" r="2.55" fill="#f00"/><circle cx="364.57" cy="412.62" r="0.7" fill="#ff6a6a"/><circle cx="379.63" cy="412.62" r="2.55" fill="#f00"/><circle cx="379.63" cy="412.62" r="0.7" fill="#ff6a6a"/><circle cx="387.16" cy="412.62" r="2.55" fill="#f00"/><circle cx="387.16" cy="412.62" r="0.7" fill="#ff6a6a"/><circle cx="402.23" cy="412.62" r="2.55" fill="#f00"/><circle cx="402.23" cy="412.62" r="0.7" fill="#ff6a6a"/><circle cx="409.76" cy="412.62" r="2.55" fill="#f00"/><circle cx="409.76" cy="412.62" r="0.7" fill="#ff6a6a"/><circle cx="417.29" cy="412.62" r="2.55" fill="#f00"/><circle cx="417.29" cy="412.62" r="0.7" fill="#ff6a6a"/><circle cx="238.30" cy="226.10" r="2.2" fill="#e81818"/><circle cx="238.30" cy="226.10" r="1.4" fill="#ffc8c8"/><path d="M237.00 226.60L239.60 225.60" stroke="#f03030" stroke-width="0.6"/><circle cx="250.27" cy="226.10" r="2.2" fill="#e81818"/><circle cx="250.27" cy="226.10" r="1.4" fill="#ffc8c8"/><path d="M248.97 226.60L251.57 225.60" stroke="#f03030" stroke-width="0.6"/><circle cx="262.24" cy="226.10" r="2.2" fill="#e81818"/><circle cx="262.24" cy="226.10" r="1.4" fill="#ffc8c8"/><path d="M260.94 226.60L263.54 225.60" stroke="#f03030" stroke-width="0.6"/><circle cx="274.21" cy="226.10" r="2.2" fill="#e81818"/><circle cx="274.21" cy="226.10" r="1.4" fill="#ffc8c8"/><path d="M272.91 226.60L275.51 225.60" stroke="#f03030" stroke-width="0.6"/><circle cx="286.18" cy="226.10" r="2.2" fill="#e81818"/><circle cx="286.18" cy="226.10" r="1.4" fill="#ffc8c8"/><path d="M284.88 226.60L287.48 225.60" stroke="#f03030" stroke-width="0.6"/><circle cx="298.15" cy="226.10" r="2.2" fill="#e81818"/><circle cx="298.15" cy="226.10" r="1.4" fill="#ffc8c8"/><path d="M296.85 226.60L299.45 225.60" stroke="#f03030" stroke-width="0.6"/><circle cx="310.12" cy="226.10" r="2.2" fill="#e81818"/><circle cx="310.12" cy="226.10" r="1.4" fill="#ffc8c8"/><path d="M308.82 226.60L311.42 225.60" stroke="#f03030" stroke-width="0.6"/><circle cx="322.09" cy="226.10" r="2.2" fill="#e81818"/><circle cx="322.09" cy="226.10" r="1.4" fill="#ffc8c8"/><path d="M320.79 226.60L323.39 225.60" stroke="#f03030" stroke-width="0.6"/><circle cx="334.06" cy="226.10" r="2.2" fill="#e81818"/><circle cx="334.06" cy="226.10" r="1.4" fill="#ffc8c8"/><path d="M332.76 226.60L335.36 225.60" stroke="#f03030" stroke-width="0.6"/><circle cx="346.03" cy="226.10" r="2.2" fill="#e81818"/><circle cx="346.03" cy="226.10" r="1.4" fill="#ffc8c8"/><path d="M344.73 226.60L347.33 225.60" stroke="#f03030" stroke-width="0.6"/><circle cx="358.00" cy="226.10" r="2.2" fill="#e81818"/><circle cx="358.00" cy="226.10" r="1.4" fill="#ffc8c8"/><path d="M356.70 226.60L359.30 225.60" stroke="#f03030" stroke-width="0.6"/><circle cx="369.97" cy="226.10" r="2.2" fill="#e81818"/><circle cx="369.97" cy="226.10" r="1.4" fill="#ffc8c8"/><path d="M368.67 226.60L371.27 225.60" stroke="#f03030" stroke-width="0.6"/><circle cx="238.30" cy="238.07" r="2.2" fill="#e81818"/><circle cx="238.30" cy="238.07" r="1.4" fill="#ffc8c8"/><path d="M237.00 238.57L239.60 237.57" stroke="#f03030" stroke-width="0.6"/><circle cx="250.27" cy="238.07" r="2.2" fill="#e81818"/><circle cx="250.27" cy="238.07" r="1.4" fill="#ffc8c8"/><path d="M248.97 238.57L251.57 237.57" stroke="#f03030" stroke-width="0.6"/><circle cx="262.24" cy="238.07" r="2.2" fill="#e81818"/><circle cx="262.24" cy="238.07" r="1.4" fill="#ffc8c8"/><path d="M260.94 238.57L263.54 237.57" stroke="#f03030" stroke-width="0.6"/><circle cx="274.21" cy="238.07" r="2.2" fill="#e81818"/><circle cx="274.21" cy="238.07" r="1.4" fill="#ffc8c8"/><path d="M272.91 238.57L275.51 237.57" stroke="#f03030" stroke-width="0.6"/><circle cx="286.18" cy="238.07" r="2.2" fill="#e81818"/><circle cx="286.18" cy="238.07" r="1.4" fill="#ffc8c8"/><path d="M284.88 238.57L287.48 237.57" stroke="#f03030" stroke-width="0.6"/><circle cx="298.15" cy="238.07" r="2.2" fill="#e81818"/><circle cx="298.15" cy="238.07" r="1.4" fill="#ffc8c8"/><path d="M296.85 238.57L299.45 237.57" stroke="#f03030" stroke-width="0.6"/><circle cx="310.12" cy="238.07" r="2.2" fill="#e81818"/><circle cx="310.12" cy="238.07" r="1.4" fill="#ffc8c8"/><path d="M308.82 238.57L311.42 237.57" stroke="#f03030" stroke-width="0.6"/><circle cx="322.09" cy="238.07" r="2.2" fill="#e81818"/><circle cx="322.09" cy="238.07" r="1.4" fill="#ffc8c8"/><path d="M320.79 238.57L323.39 237.57" stroke="#f03030" stroke-width="0.6"/><circle cx="334.06" cy="238.07" r="2.2" fill="#e81818"/><circle cx="334.06" cy="238.07" r="1.4" fill="#ffc8c8"/><path d="M332.76 238.57L335.36 237.57" stroke="#f03030" stroke-width="0.6"/><circle cx="346.03" cy="238.07" r="2.2" fill="#e81818"/><circle cx="346.03" cy="238.07" r="1.4" fill="#ffc8c8"/><path d="M344.73 238.57L347.33 237.57" stroke="#f03030" stroke-width="0.6"/><circle cx="358.00" cy="238.07" r="2.2" fill="#e81818"/><circle cx="358.00" cy="238.07" r="1.4" fill="#ffc8c8"/><path d="M356.70 238.57L359.30 237.57" stroke="#f03030" stroke-width="0.6"/><circle cx="369.97" cy="238.07" r="2.2" fill="#e81818"/><circle cx="369.97" cy="238.07" r="1.4" fill="#ffc8c8"/><path d="M368.67 238.57L371.27 237.57" stroke="#f03030" stroke-width="0.6"/><circle cx="238.30" cy="250.04" r="2.2" fill="#e81818"/><circle cx="238.30" cy="250.04" r="1.4" fill="#ffc8c8"/><path d="M237.00 250.54L239.60 249.54" stroke="#f03030" stroke-width="0.6"/><circle cx="250.27" cy="250.04" r="2.2" fill="#e81818"/><circle cx="250.27" cy="250.04" r="1.4" fill="#ffc8c8"/><path d="M248.97 250.54L251.57 249.54" stroke="#f03030" stroke-width="0.6"/><circle cx="358.00" cy="250.04" r="2.2" fill="#e81818"/><circle cx="358.00" cy="250.04" r="1.4" fill="#ffc8c8"/><path d="M356.70 250.54L359.30 249.54" stroke="#f03030" stroke-width="0.6"/><circle cx="369.97" cy="250.04" r="2.2" fill="#e81818"/><circle cx="369.97" cy="250.04" r="1.4" fill="#ffc8c8"/><path d="M368.67 250.54L371.27 249.54" stroke="#f03030" stroke-width="0.6"/><circle cx="238.30" cy="262.01" r="2.2" fill="#e81818"/><circle cx="238.30" cy="262.01" r="1.4" fill="#ffc8c8"/><path d="M237.00 262.51L239.60 261.51" stroke="#f03030" stroke-width="0.6"/><circle cx="250.27" cy="262.01" r="2.2" fill="#e81818"/><circle cx="250.27" cy="262.01" r="1.4" fill="#ffc8c8"/><path d="M248.97 262.51L251.57 261.51" stroke="#f03030" stroke-width="0.6"/><circle cx="358.00" cy="262.01" r="2.2" fill="#e81818"/><circle cx="358.00" cy="262.01" r="1.4" fill="#ffc8c8"/><path d="M356.70 262.51L359.30 261.51" stroke="#f03030" stroke-width="0.6"/><circle cx="369.97" cy="262.01" r="2.2" fill="#e81818"/><circle cx="369.97" cy="262.01" r="1.4" fill="#ffc8c8"/><path d="M368.67 262.51L371.27 261.51" stroke="#f03030" stroke-width="0.6"/><circle cx="238.30" cy="273.98" r="2.2" fill="#e81818"/><circle cx="238.30" cy="273.98" r="1.4" fill="#ffc8c8"/><path d="M237.00 274.48L239.60 273.48" stroke="#f03030" stroke-width="0.6"/><circle cx="250.27" cy="273.98" r="2.2" fill="#e81818"/><circle cx="250.27" cy="273.98" r="1.4" fill="#ffc8c8"/><path d="M248.97 274.48L251.57 273.48" stroke="#f03030" stroke-width="0.6"/><circle cx="358.00" cy="273.98" r="2.2" fill="#e81818"/><circle cx="358.00" cy="273.98" r="1.4" fill="#ffc8c8"/><path d="M356.70 274.48L359.30 273.48" stroke="#f03030" stroke-width="0.6"/><circle cx="369.97" cy="273.98" r="2.2" fill="#e81818"/><circle cx="369.97" cy="273.98" r="1.4" fill="#ffc8c8"/><path d="M368.67 274.48L371.27 273.48" stroke="#f03030" stroke-width="0.6"/><circle cx="238.30" cy="285.95" r="2.2" fill="#e81818"/><circle cx="238.30" cy="285.95" r="1.4" fill="#ffc8c8"/><path d="M237.00 286.45L239.60 285.45" stroke="#f03030" stroke-width="0.6"/><circle cx="250.27" cy="285.95" r="2.2" fill="#e81818"/><circle cx="250.27" cy="285.95" r="1.4" fill="#ffc8c8"/><path d="M248.97 286.45L251.57 285.45" stroke="#f03030" stroke-width="0.6"/><circle cx="358.00" cy="285.95" r="2.2" fill="#e81818"/><circle cx="358.00" cy="285.95" r="1.4" fill="#ffc8c8"/><path d="M356.70 286.45L359.30 285.45" stroke="#f03030" stroke-width="0.6"/><circle cx="369.97" cy="285.95" r="2.2" fill="#e81818"/><circle cx="369.97" cy="285.95" r="1.4" fill="#ffc8c8"/><path d="M368.67 286.45L371.27 285.45" stroke="#f03030" stroke-width="0.6"/><circle cx="238.30" cy="297.92" r="2.2" fill="#e81818"/><circle cx="238.30" cy="297.92" r="1.4" fill="#ffc8c8"/><path d="M237.00 298.42L239.60 297.42" stroke="#f03030" stroke-width="0.6"/><circle cx="250.27" cy="297.92" r="2.2" fill="#e81818"/><circle cx="250.27" cy="297.92" r="1.4" fill="#ffc8c8"/><path d="M248.97 298.42L251.57 297.42" stroke="#f03030" stroke-width="0.6"/><circle cx="358.00" cy="297.92" r="2.2" fill="#e81818"/><circle cx="358.00" cy="297.92" r="1.4" fill="#ffc8c8"/><path d="M356.70 298.42L359.30 297.42" stroke="#f03030" stroke-width="0.6"/><circle cx="369.97" cy="297.92" r="2.2" fill="#e81818"/><circle cx="369.97" cy="297.92" r="1.4" fill="#ffc8c8"/><path d="M368.67 298.42L371.27 297.42" stroke="#f03030" stroke-width="0.6"/><circle cx="238.30" cy="309.89" r="2.2" fill="#e81818"/><circle cx="238.30" cy="309.89" r="1.4" fill="#ffc8c8"/><path d="M237.00 310.39L239.60 309.39" stroke="#f03030" stroke-width="0.6"/><circle cx="250.27" cy="309.89" r="2.2" fill="#e81818"/><circle cx="250.27" cy="309.89" r="1.4" fill="#ffc8c8"/><path d="M248.97 310.39L251.57 309.39" stroke="#f03030" stroke-width="0.6"/><circle cx="358.00" cy="309.89" r="2.2" fill="#e81818"/><circle cx="358.00" cy="309.89" r="1.4" fill="#ffc8c8"/><path d="M356.70 310.39L359.30 309.39" stroke="#f03030" stroke-width="0.6"/><circle cx="369.97" cy="309.89" r="2.2" fill="#e81818"/><circle cx="369.97" cy="309.89" r="1.4" fill="#ffc8c8"/><path d="M368.67 310.39L371.27 309.39" stroke="#f03030" stroke-width="0.6"/><circle cx="238.30" cy="321.86" r="2.2" fill="#e81818"/><circle cx="238.30" cy="321.86" r="1.4" fill="#ffc8c8"/><path d="M237.00 322.36L239.60 321.36" stroke="#f03030" stroke-width="0.6"/><circle cx="250.27" cy="321.86" r="2.2" fill="#e81818"/><circle cx="250.27" cy="321.86" r="1.4" fill="#ffc8c8"/><path d="M248.97 322.36L251.57 321.36" stroke="#f03030" stroke-width="0.6"/><circle cx="358.00" cy="321.86" r="2.2" fill="#e81818"/><circle cx="358.00" cy="321.86" r="1.4" fill="#ffc8c8"/><path d="M356.70 322.36L359.30 321.36" stroke="#f03030" stroke-width="0.6"/><circle cx="369.97" cy="321.86" r="2.2" fill="#e81818"/><circle cx="369.97" cy="321.86" r="1.4" fill="#ffc8c8"/><path d="M368.67 322.36L371.27 321.36" stroke="#f03030" stroke-width="0.6"/><circle cx="238.30" cy="333.83" r="2.2" fill="#e81818"/><circle cx="238.30" cy="333.83" r="1.4" fill="#ffc8c8"/><path d="M237.00 334.33L239.60 333.33" stroke="#f03030" stroke-width="0.6"/><circle cx="250.27" cy="333.83" r="2.2" fill="#e81818"/><circle cx="250.27" cy="333.83" r="1.4" fill="#ffc8c8"/><path d="M248.97 334.33L251.57 333.33" stroke="#f03030" stroke-width="0.6"/><circle cx="358.00" cy="333.83" r="2.2" fill="#e81818"/><circle cx="358.00" cy="333.83" r="1.4" fill="#ffc8c8"/><path d="M356.70 334.33L359.30 333.33" stroke="#f03030" stroke-width="0.6"/><circle cx="369.97" cy="333.83" r="2.2" fill="#e81818"/><circle cx="369.97" cy="333.83" r="1.4" fill="#ffc8c8"/><path d="M368.67 334.33L371.27 333.33" stroke="#f03030" stroke-width="0.6"/><circle cx="238.30" cy="345.80" r="2.2" fill="#e81818"/><circle cx="238.30" cy="345.80" r="1.4" fill="#ffc8c8"/><path d="M237.00 346.30L239.60 345.30" stroke="#f03030" stroke-width="0.6"/><circle cx="250.27" cy="345.80" r="2.2" fill="#e81818"/><circle cx="250.27" cy="345.80" r="1.4" fill="#ffc8c8"/><path d="M248.97 346.30L251.57 345.30" stroke="#f03030" stroke-width="0.6"/><circle cx="262.24" cy="345.80" r="2.2" fill="#e81818"/><circle cx="262.24" cy="345.80" r="1.4" fill="#ffc8c8"/><path d="M260.94 346.30L263.54 345.30" stroke="#f03030" stroke-width="0.6"/><circle cx="274.21" cy="345.80" r="2.2" fill="#e81818"/><circle cx="274.21" cy="345.80" r="1.4" fill="#ffc8c8"/><path d="M272.91 346.30L275.51 345.30" stroke="#f03030" stroke-width="0.6"/><circle cx="286.18" cy="345.80" r="2.2" fill="#e81818"/><circle cx="286.18" cy="345.80" r="1.4" fill="#ffc8c8"/><path d="M284.88 346.30L287.48 345.30" stroke="#f03030" stroke-width="0.6"/><circle cx="298.15" cy="345.80" r="2.2" fill="#e81818"/><circle cx="298.15" cy="345.80" r="1.4" fill="#ffc8c8"/><path d="M296.85 346.30L299.45 345.30" stroke="#f03030" stroke-width="0.6"/><circle cx="310.12" cy="345.80" r="2.2" fill="#e81818"/><circle cx="310.12" cy="345.80" r="1.4" fill="#ffc8c8"/><path d="M308.82 346.30L311.42 345.30" stroke="#f03030" stroke-width="0.6"/><circle cx="322.09" cy="345.80" r="2.2" fill="#e81818"/><circle cx="322.09" cy="345.80" r="1.4" fill="#ffc8c8"/><path d="M320.79 346.30L323.39 345.30" stroke="#f03030" stroke-width="0.6"/><circle cx="334.06" cy="345.80" r="2.2" fill="#e81818"/><circle cx="334.06" cy="345.80" r="1.4" fill="#ffc8c8"/><path d="M332.76 346.30L335.36 345.30" stroke="#f03030" stroke-width="0.6"/><circle cx="346.03" cy="345.80" r="2.2" fill="#e81818"/><circle cx="346.03" cy="345.80" r="1.4" fill="#ffc8c8"/><path d="M344.73 346.30L347.33 345.30" stroke="#f03030" stroke-width="0.6"/><circle cx="358.00" cy="345.80" r="2.2" fill="#e81818"/><circle cx="358.00" cy="345.80" r="1.4" fill="#ffc8c8"/><path d="M356.70 346.30L359.30 345.30" stroke="#f03030" stroke-width="0.6"/><circle cx="369.97" cy="345.80" r="2.2" fill="#e81818"/><circle cx="369.97" cy="345.80" r="1.4" fill="#ffc8c8"/><path d="M368.67 346.30L371.27 345.30" stroke="#f03030" stroke-width="0.6"/><circle cx="236.40" cy="360.50" r="2.2" fill="#e81818"/><circle cx="236.40" cy="360.50" r="1.4" fill="#ffc8c8"/><path d="M235.10 361.00L237.70 360.00" stroke="#f03030" stroke-width="0.6"/><circle cx="250.27" cy="357.77" r="2.2" fill="#e81818"/><circle cx="250.27" cy="357.77" r="1.4" fill="#ffc8c8"/><path d="M248.97 358.27L251.57 357.27" stroke="#f03030" stroke-width="0.6"/><circle cx="262.24" cy="357.77" r="2.2" fill="#e81818"/><circle cx="262.24" cy="357.77" r="1.4" fill="#ffc8c8"/><path d="M260.94 358.27L263.54 357.27" stroke="#f03030" stroke-width="0.6"/><circle cx="274.21" cy="357.77" r="2.2" fill="#e81818"/><circle cx="274.21" cy="357.77" r="1.4" fill="#ffc8c8"/><path d="M272.91 358.27L275.51 357.27" stroke="#f03030" stroke-width="0.6"/><circle cx="286.18" cy="357.77" r="2.2" fill="#e81818"/><circle cx="286.18" cy="357.77" r="1.4" fill="#ffc8c8"/><path d="M284.88 358.27L287.48 357.27" stroke="#f03030" stroke-width="0.6"/><circle cx="298.15" cy="357.77" r="2.2" fill="#e81818"/><circle cx="298.15" cy="357.77" r="1.4" fill="#ffc8c8"/><path d="M296.85 358.27L299.45 357.27" stroke="#f03030" stroke-width="0.6"/><circle cx="310.12" cy="357.77" r="2.2" fill="#e81818"/><circle cx="310.12" cy="357.77" r="1.4" fill="#ffc8c8"/><path d="M308.82 358.27L311.42 357.27" stroke="#f03030" stroke-width="0.6"/><circle cx="322.09" cy="357.77" r="2.2" fill="#e81818"/><circle cx="322.09" cy="357.77" r="1.4" fill="#ffc8c8"/><path d="M320.79 358.27L323.39 357.27" stroke="#f03030" stroke-width="0.6"/><circle cx="334.06" cy="357.77" r="2.2" fill="#e81818"/><circle cx="334.06" cy="357.77" r="1.4" fill="#ffc8c8"/><path d="M332.76 358.27L335.36 357.27" stroke="#f03030" stroke-width="0.6"/><circle cx="346.03" cy="357.77" r="2.2" fill="#e81818"/><circle cx="346.03" cy="357.77" r="1.4" fill="#ffc8c8"/><path d="M344.73 358.27L347.33 357.27" stroke="#f03030" stroke-width="0.6"/><circle cx="358.00" cy="357.77" r="2.2" fill="#e81818"/><circle cx="358.00" cy="357.77" r="1.4" fill="#ffc8c8"/><path d="M356.70 358.27L359.30 357.27" stroke="#f03030" stroke-width="0.6"/><circle cx="369.97" cy="357.77" r="2.2" fill="#e81818"/><circle cx="369.97" cy="357.77" r="1.4" fill="#ffc8c8"/><path d="M368.67 358.27L371.27 357.27" stroke="#f03030" stroke-width="0.6"/><circle cx="351.60" cy="352.10" r="2.2" fill="#e81818"/><circle cx="351.60" cy="352.10" r="1.4" fill="#ffc8c8"/><path d="M350.30 352.60L352.90 351.60" stroke="#f03030" stroke-width="0.6"/><circle cx="364.10" cy="352.10" r="2.2" fill="#e81818"/><circle cx="364.10" cy="352.10" r="1.4" fill="#ffc8c8"/><path d="M362.80 352.60L365.40 351.60" stroke="#f03030" stroke-width="0.6"/><circle cx="256.60" cy="367.30" r="2.2" fill="#e81818"/><circle cx="256.60" cy="367.30" r="1.4" fill="#ffc8c8"/><path d="M255.30 367.80L257.90 366.80" stroke="#f03030" stroke-width="0.6"/><circle cx="268.20" cy="367.30" r="2.2" fill="#e81818"/><circle cx="268.20" cy="367.30" r="1.4" fill="#ffc8c8"/><path d="M266.90 367.80L269.50 366.80" stroke="#f03030" stroke-width="0.6"/><circle cx="326.91" cy="412.82" r="2.2" fill="#e81818"/><circle cx="326.91" cy="412.82" r="1.4" fill="#ffc8c8"/><path d="M325.61 413.32L328.21 412.32" stroke="#f03030" stroke-width="0.6"/><circle cx="349.50" cy="412.82" r="2.2" fill="#e81818"/><circle cx="349.50" cy="412.82" r="1.4" fill="#ffc8c8"/><path d="M348.20 413.32L350.80 412.32" stroke="#f03030" stroke-width="0.6"/><circle cx="208.40" cy="160.40" r="2.2" fill="#e81818"/><circle cx="208.40" cy="160.40" r="1.4" fill="#ffc8c8"/><path d="M207.10 160.90L209.70 159.90" stroke="#f03030" stroke-width="0.6"/><circle cx="274.00" cy="160.40" r="2.2" fill="#e81818"/><circle cx="274.00" cy="160.40" r="1.4" fill="#ffc8c8"/><path d="M272.70 160.90L275.30 159.90" stroke="#f03030" stroke-width="0.6"/><circle cx="340.20" cy="160.40" r="2.2" fill="#e81818"/><circle cx="340.20" cy="160.40" r="1.4" fill="#ffc8c8"/><path d="M338.90 160.90L341.50 159.90" stroke="#f03030" stroke-width="0.6"/><circle cx="405.70" cy="160.40" r="2.2" fill="#e81818"/><circle cx="405.70" cy="160.40" r="1.4" fill="#ffc8c8"/><path d="M404.40 160.90L407.00 159.90" stroke="#f03030" stroke-width="0.6"/><circle cx="208.40" cy="423.50" r="2.2" fill="#e81818"/><circle cx="208.40" cy="423.50" r="1.4" fill="#ffc8c8"/><path d="M207.10 424.00L209.70 423.00" stroke="#f03030" stroke-width="0.6"/><circle cx="274.00" cy="423.50" r="2.2" fill="#e81818"/><circle cx="274.00" cy="423.50" r="1.4" fill="#ffc8c8"/><path d="M272.70 424.00L275.30 423.00" stroke="#f03030" stroke-width="0.6"/><circle cx="310.30" cy="423.50" r="2.2" fill="#e81818"/><circle cx="310.30" cy="423.50" r="1.4" fill="#ffc8c8"/><path d="M309.00 424.00L311.60 423.00" stroke="#f03030" stroke-width="0.6"/><circle cx="327.70" cy="423.50" r="2.2" fill="#e81818"/><circle cx="327.70" cy="423.50" r="1.4" fill="#ffc8c8"/><path d="M326.40 424.00L329.00 423.00" stroke="#f03030" stroke-width="0.6"/><circle cx="340.10" cy="423.50" r="2.2" fill="#e81818"/><circle cx="340.10" cy="423.50" r="1.4" fill="#ffc8c8"/><path d="M338.80 424.00L341.40 423.00" stroke="#f03030" stroke-width="0.6"/><circle cx="352.00" cy="423.50" r="2.2" fill="#e81818"/><circle cx="352.00" cy="423.50" r="1.4" fill="#ffc8c8"/><path d="M350.70 424.00L353.30 423.00" stroke="#f03030" stroke-width="0.6"/><circle cx="405.70" cy="423.50" r="2.2" fill="#e81818"/><circle cx="405.70" cy="423.50" r="1.4" fill="#ffc8c8"/><path d="M404.40 424.00L407.00 423.00" stroke="#f03030" stroke-width="0.6"/><circle cx="172.80" cy="166.20" r="2.2" fill="#e81818"/><circle cx="172.80" cy="166.20" r="1.4" fill="#ffc8c8"/><path d="M171.50 166.70L174.10 165.70" stroke="#f03030" stroke-width="0.6"/><circle cx="172.80" cy="196.15" r="2.2" fill="#e81818"/><circle cx="172.80" cy="196.15" r="1.4" fill="#ffc8c8"/><path d="M171.50 196.65L174.10 195.65" stroke="#f03030" stroke-width="0.6"/><circle cx="172.80" cy="226.10" r="2.2" fill="#e81818"/><circle cx="172.80" cy="226.10" r="1.4" fill="#ffc8c8"/><path d="M171.50 226.60L174.10 225.60" stroke="#f03030" stroke-width="0.6"/><circle cx="172.80" cy="256.05" r="2.2" fill="#e81818"/><circle cx="172.80" cy="256.05" r="1.4" fill="#ffc8c8"/><path d="M171.50 256.55L174.10 255.55" stroke="#f03030" stroke-width="0.6"/><circle cx="172.80" cy="286.00" r="2.2" fill="#e81818"/><circle cx="172.80" cy="286.00" r="1.4" fill="#ffc8c8"/><path d="M171.50 286.50L174.10 285.50" stroke="#f03030" stroke-width="0.6"/><circle cx="172.80" cy="315.95" r="2.2" fill="#e81818"/><circle cx="172.80" cy="315.95" r="1.4" fill="#ffc8c8"/><path d="M171.50 316.45L174.10 315.45" stroke="#f03030" stroke-width="0.6"/><circle cx="172.80" cy="345.90" r="2.2" fill="#e81818"/><circle cx="172.80" cy="345.90" r="1.4" fill="#ffc8c8"/><path d="M171.50 346.40L174.10 345.40" stroke="#f03030" stroke-width="0.6"/><circle cx="172.80" cy="375.85" r="2.2" fill="#e81818"/><circle cx="172.80" cy="375.85" r="1.4" fill="#ffc8c8"/><path d="M171.50 376.35L174.10 375.35" stroke="#f03030" stroke-width="0.6"/><circle cx="172.80" cy="405.80" r="2.2" fill="#e81818"/><circle cx="172.80" cy="405.80" r="1.4" fill="#ffc8c8"/><path d="M171.50 406.30L174.10 405.30" stroke="#f03030" stroke-width="0.6"/><circle cx="436.00" cy="166.20" r="2.2" fill="#e81818"/><circle cx="436.00" cy="166.20" r="1.4" fill="#ffc8c8"/><path d="M434.70 166.70L437.30 165.70" stroke="#f03030" stroke-width="0.6"/><circle cx="436.00" cy="196.10" r="2.2" fill="#e81818"/><circle cx="436.00" cy="196.10" r="1.4" fill="#ffc8c8"/><path d="M434.70 196.60L437.30 195.60" stroke="#f03030" stroke-width="0.6"/><circle cx="436.00" cy="405.80" r="2.2" fill="#e81818"/><circle cx="436.00" cy="405.80" r="1.4" fill="#ffc8c8"/><path d="M434.70 406.30L437.30 405.30" stroke="#f03030" stroke-width="0.6"/><circle cx="436.00" cy="220.00" r="2.2" fill="#e81818"/><circle cx="436.00" cy="220.00" r="1.4" fill="#ffc8c8"/><path d="M434.70 220.50L437.30 219.50" stroke="#f03030" stroke-width="0.6"/><circle cx="448.30" cy="220.00" r="2.2" fill="#e81818"/><circle cx="448.30" cy="220.00" r="1.4" fill="#ffc8c8"/><path d="M447.00 220.50L449.60 219.50" stroke="#f03030" stroke-width="0.6"/><circle cx="436.00" cy="231.98" r="2.2" fill="#e81818"/><circle cx="436.00" cy="231.98" r="1.4" fill="#ffc8c8"/><path d="M434.70 232.48L437.30 231.48" stroke="#f03030" stroke-width="0.6"/><circle cx="448.30" cy="231.98" r="2.2" fill="#e81818"/><circle cx="448.30" cy="231.98" r="1.4" fill="#ffc8c8"/><path d="M447.00 232.48L449.60 231.48" stroke="#f03030" stroke-width="0.6"/><circle cx="436.00" cy="243.96" r="2.2" fill="#e81818"/><circle cx="436.00" cy="243.96" r="1.4" fill="#ffc8c8"/><path d="M434.70 244.46L437.30 243.46" stroke="#f03030" stroke-width="0.6"/><circle cx="448.30" cy="243.96" r="2.2" fill="#e81818"/><circle cx="448.30" cy="243.96" r="1.4" fill="#ffc8c8"/><path d="M447.00 244.46L449.60 243.46" stroke="#f03030" stroke-width="0.6"/><circle cx="436.00" cy="255.94" r="2.2" fill="#e81818"/><circle cx="436.00" cy="255.94" r="1.4" fill="#ffc8c8"/><path d="M434.70 256.44L437.30 255.44" stroke="#f03030" stroke-width="0.6"/><circle cx="448.30" cy="255.94" r="2.2" fill="#e81818"/><circle cx="448.30" cy="255.94" r="1.4" fill="#ffc8c8"/><path d="M447.00 256.44L449.60 255.44" stroke="#f03030" stroke-width="0.6"/><circle cx="436.00" cy="267.92" r="2.2" fill="#e81818"/><circle cx="436.00" cy="267.92" r="1.4" fill="#ffc8c8"/><path d="M434.70 268.42L437.30 267.42" stroke="#f03030" stroke-width="0.6"/><circle cx="448.30" cy="267.92" r="2.2" fill="#e81818"/><circle cx="448.30" cy="267.92" r="1.4" fill="#ffc8c8"/><path d="M447.00 268.42L449.60 267.42" stroke="#f03030" stroke-width="0.6"/><circle cx="436.00" cy="279.90" r="2.2" fill="#e81818"/><circle cx="436.00" cy="279.90" r="1.4" fill="#ffc8c8"/><path d="M434.70 280.40L437.30 279.40" stroke="#f03030" stroke-width="0.6"/><circle cx="448.30" cy="279.90" r="2.2" fill="#e81818"/><circle cx="448.30" cy="279.90" r="1.4" fill="#ffc8c8"/><path d="M447.00 280.40L449.60 279.40" stroke="#f03030" stroke-width="0.6"/><circle cx="436.00" cy="291.88" r="2.2" fill="#e81818"/><circle cx="436.00" cy="291.88" r="1.4" fill="#ffc8c8"/><path d="M434.70 292.38L437.30 291.38" stroke="#f03030" stroke-width="0.6"/><circle cx="448.30" cy="291.88" r="2.2" fill="#e81818"/><circle cx="448.30" cy="291.88" r="1.4" fill="#ffc8c8"/><path d="M447.00 292.38L449.60 291.38" stroke="#f03030" stroke-width="0.6"/><circle cx="436.00" cy="303.86" r="2.2" fill="#e81818"/><circle cx="436.00" cy="303.86" r="1.4" fill="#ffc8c8"/><path d="M434.70 304.36L437.30 303.36" stroke="#f03030" stroke-width="0.6"/><circle cx="448.30" cy="303.86" r="2.2" fill="#e81818"/><circle cx="448.30" cy="303.86" r="1.4" fill="#ffc8c8"/><path d="M447.00 304.36L449.60 303.36" stroke="#f03030" stroke-width="0.6"/><circle cx="436.00" cy="315.84" r="2.2" fill="#e81818"/><circle cx="436.00" cy="315.84" r="1.4" fill="#ffc8c8"/><path d="M434.70 316.34L437.30 315.34" stroke="#f03030" stroke-width="0.6"/><circle cx="448.30" cy="315.84" r="2.2" fill="#e81818"/><circle cx="448.30" cy="315.84" r="1.4" fill="#ffc8c8"/><path d="M447.00 316.34L449.60 315.34" stroke="#f03030" stroke-width="0.6"/><circle cx="436.00" cy="327.82" r="2.2" fill="#e81818"/><circle cx="436.00" cy="327.82" r="1.4" fill="#ffc8c8"/><path d="M434.70 328.32L437.30 327.32" stroke="#f03030" stroke-width="0.6"/><circle cx="448.30" cy="327.82" r="2.2" fill="#e81818"/><circle cx="448.30" cy="327.82" r="1.4" fill="#ffc8c8"/><path d="M447.00 328.32L449.60 327.32" stroke="#f03030" stroke-width="0.6"/><circle cx="436.00" cy="339.80" r="2.2" fill="#e81818"/><circle cx="436.00" cy="339.80" r="1.4" fill="#ffc8c8"/><path d="M434.70 340.30L437.30 339.30" stroke="#f03030" stroke-width="0.6"/><circle cx="448.30" cy="339.80" r="2.2" fill="#e81818"/><circle cx="448.30" cy="339.80" r="1.4" fill="#ffc8c8"/><path d="M447.00 340.30L449.60 339.30" stroke="#f03030" stroke-width="0.6"/><circle cx="436.00" cy="351.78" r="2.2" fill="#e81818"/><circle cx="436.00" cy="351.78" r="1.4" fill="#ffc8c8"/><path d="M434.70 352.28L437.30 351.28" stroke="#f03030" stroke-width="0.6"/><circle cx="448.30" cy="351.78" r="2.2" fill="#e81818"/><circle cx="448.30" cy="351.78" r="1.4" fill="#ffc8c8"/><path d="M447.00 352.28L449.60 351.28" stroke="#f03030" stroke-width="0.6"/><circle cx="436.00" cy="363.76" r="2.2" fill="#e81818"/><circle cx="436.00" cy="363.76" r="1.4" fill="#ffc8c8"/><path d="M434.70 364.26L437.30 363.26" stroke="#f03030" stroke-width="0.6"/><circle cx="448.30" cy="363.76" r="2.2" fill="#e81818"/><circle cx="448.30" cy="363.76" r="1.4" fill="#ffc8c8"/><path d="M447.00 364.26L449.60 363.26" stroke="#f03030" stroke-width="0.6"/><circle cx="436.00" cy="375.74" r="2.2" fill="#e81818"/><circle cx="436.00" cy="375.74" r="1.4" fill="#ffc8c8"/><path d="M434.70 376.24L437.30 375.24" stroke="#f03030" stroke-width="0.6"/><circle cx="448.30" cy="375.74" r="2.2" fill="#e81818"/><circle cx="448.30" cy="375.74" r="1.4" fill="#ffc8c8"/><path d="M447.00 376.24L449.60 375.24" stroke="#f03030" stroke-width="0.6"/><circle cx="436.00" cy="387.72" r="2.2" fill="#e81818"/><circle cx="436.00" cy="387.72" r="1.4" fill="#ffc8c8"/><path d="M434.70 388.22L437.30 387.22" stroke="#f03030" stroke-width="0.6"/><circle cx="448.30" cy="387.72" r="2.2" fill="#e81818"/><circle cx="448.30" cy="387.72" r="1.4" fill="#ffc8c8"/><path d="M447.00 388.22L449.60 387.22" stroke="#f03030" stroke-width="0.6"/></svg>
<svg width="1024" height="62" viewBox="0 0 1024 62"><rect x="192.5" y="32.20" width="1.1" height="0.95" fill="#9a9a9a"/><rect x="192.5" y="34.05" width="1.1" height="0.95" fill="#9a9a9a"/><rect x="192.5" y="35.90" width="1.1" height="0.95" fill="#9a9a9a"/><rect x="192.5" y="37.75" width="1.1" height="0.95" fill="#9a9a9a"/><rect x="192.5" y="39.60" width="1.1" height="0.95" fill="#9a9a9a"/><rect x="192.5" y="41.45" width="1.1" height="0.95" fill="#9a9a9a"/><rect x="192.5" y="43.30" width="1.1" height="0.95" fill="#9a9a9a"/><rect x="192.5" y="45.15" width="1.1" height="0.95" fill="#9a9a9a"/><rect x="249.7" y="32.20" width="1.1" height="0.95" fill="#9a9a9a"/><rect x="249.7" y="34.05" width="1.1" height="0.95" fill="#9a9a9a"/><rect x="249.7" y="35.90" width="1.1" height="0.95" fill="#9a9a9a"/><rect x="249.7" y="37.75" width="1.1" height="0.95" fill="#9a9a9a"/><rect x="249.7" y="39.60" width="1.1" height="0.95" fill="#9a9a9a"/><rect x="249.7" y="41.45" width="1.1" height="0.95" fill="#9a9a9a"/><rect x="249.7" y="43.30" width="1.1" height="0.95" fill="#9a9a9a"/><rect x="249.7" y="45.15" width="1.1" height="0.95" fill="#9a9a9a"/><rect x="290.1" y="32.20" width="1.1" height="0.95" fill="#9a9a9a"/><rect x="290.1" y="34.05" width="1.1" height="0.95" fill="#9a9a9a"/><rect x="290.1" y="35.90" width="1.1" height="0.95" fill="#9a9a9a"/><rect x="290.1" y="37.75" width="1.1" height="0.95" fill="#9a9a9a"/><rect x="290.1" y="39.60" width="1.1" height="0.95" fill="#9a9a9a"/><rect x="290.1" y="41.45" width="1.1" height="0.95" fill="#9a9a9a"/><rect x="290.1" y="43.30" width="1.1" height="0.95" fill="#9a9a9a"/><rect x="290.1" y="45.15" width="1.1" height="0.95" fill="#9a9a9a"/><rect x="346.9" y="32.20" width="1.1" height="0.95" fill="#9a9a9a"/><rect x="346.9" y="34.05" width="1.1" height="0.95" fill="#9a9a9a"/><rect x="346.9" y="35.90" width="1.1" height="0.95" fill="#9a9a9a"/><rect x="346.9" y="37.75" width="1.1" height="0.95" fill="#9a9a9a"/><rect x="346.9" y="39.60" width="1.1" height="0.95" fill="#9a9a9a"/><rect x="346.9" y="41.45" width="1.1" height="0.95" fill="#9a9a9a"/><rect x="346.9" y="43.30" width="1.1" height="0.95" fill="#9a9a9a"/><rect x="346.9" y="45.15" width="1.1" height="0.95" fill="#9a9a9a"/><rect x="536.4" y="32.20" width="1.1" height="0.95" fill="#9a9a9a"/><rect x="536.4" y="34.05" width="1.1" height="0.95" fill="#9a9a9a"/><rect x="536.4" y="35.90" width="1.1" height="0.95" fill="#9a9a9a"/><rect x="536.4" y="37.75" width="1.1" height="0.95" fill="#9a9a9a"/><rect x="536.4" y="39.60" width="1.1" height="0.95" fill="#9a9a9a"/><rect x="536.4" y="41.45" width="1.1" height="0.95" fill="#9a9a9a"/><rect x="536.4" y="43.30" width="1.1" height="0.95" fill="#9a9a9a"/><rect x="536.4" y="45.15" width="1.1" height="0.95" fill="#9a9a9a"/><rect x="642.8" y="32.20" width="1.1" height="0.95" fill="#9a9a9a"/><rect x="642.8" y="34.05" width="1.1" height="0.95" fill="#9a9a9a"/><rect x="642.8" y="35.90" width="1.1" height="0.95" fill="#9a9a9a"/><rect x="642.8" y="37.75" width="1.1" height="0.95" fill="#9a9a9a"/><rect x="642.8" y="39.60" width="1.1" height="0.95" fill="#9a9a9a"/><rect x="642.8" y="41.45" width="1.1" height="0.95" fill="#9a9a9a"/><rect x="642.8" y="43.30" width="1.1" height="0.95" fill="#9a9a9a"/><rect x="642.8" y="45.15" width="1.1" height="0.95" fill="#9a9a9a"/><rect x="749.8" y="32.20" width="1.1" height="0.95" fill="#9a9a9a"/><rect x="749.8" y="34.05" width="1.1" height="0.95" fill="#9a9a9a"/><rect x="749.8" y="35.90" width="1.1" height="0.95" fill="#9a9a9a"/><rect x="749.8" y="37.75" width="1.1" height="0.95" fill="#9a9a9a"/><rect x="749.8" y="39.60" width="1.1" height="0.95" fill="#9a9a9a"/><rect x="749.8" y="41.45" width="1.1" height="0.95" fill="#9a9a9a"/><rect x="749.8" y="43.30" width="1.1" height="0.95" fill="#9a9a9a"/><rect x="749.8" y="45.15" width="1.1" height="0.95" fill="#9a9a9a"/><rect x="839.6" y="32.20" width="1.1" height="0.95" fill="#9a9a9a"/><rect x="839.6" y="34.05" width="1.1" height="0.95" fill="#9a9a9a"/><rect x="839.6" y="35.90" width="1.1" height="0.95" fill="#9a9a9a"/><rect x="839.6" y="37.75" width="1.1" height="0.95" fill="#9a9a9a"/><rect x="839.6" y="39.60" width="1.1" height="0.95" fill="#9a9a9a"/><rect x="839.6" y="41.45" width="1.1" height="0.95" fill="#9a9a9a"/><rect x="839.6" y="43.30" width="1.1" height="0.95" fill="#9a9a9a"/><rect x="839.6" y="45.15" width="1.1" height="0.95" fill="#9a9a9a"/><rect x="913.5" y="32.20" width="1.1" height="0.95" fill="#9a9a9a"/><rect x="913.5" y="34.05" width="1.1" height="0.95" fill="#9a9a9a"/><rect x="913.5" y="35.90" width="1.1" height="0.95" fill="#9a9a9a"/><rect x="913.5" y="37.75" width="1.1" height="0.95" fill="#9a9a9a"/><rect x="913.5" y="39.60" width="1.1" height="0.95" fill="#9a9a9a"/><rect x="913.5" y="41.45" width="1.1" height="0.95" fill="#9a9a9a"/><rect x="913.5" y="43.30" width="1.1" height="0.95" fill="#9a9a9a"/><rect x="913.5" y="45.15" width="1.1" height="0.95" fill="#9a9a9a"/><g transform="translate(156.6,31.6)"><g transform="translate(8.6,7.4) rotate(45)"><rect x="-3.1" y="-7.4" width="6.2" height="1.7" rx=".5" fill="#f4f4f4"/><path d="M-2.1 -5.7h4.2l.5 4.500h-5.200z" fill="#e6e6e6"/><path d="M-3.700 -1.200h7.400l-.8 1.900h-5.800z" fill="#f4f4f4"/><path d="M0 .7V8.600" stroke="#f0f0f0" stroke-width="1.200"/></g></g><g transform="translate(173.4,31.6)"><g transform="translate(8.6,7.4) rotate(45)"><rect x="-3.1" y="-7.4" width="6.2" height="1.7" rx=".5" fill="#f4f4f4"/><path d="M-2.1 -5.7h4.2l.5 4.500h-5.200z" fill="#e6e6e6"/><path d="M-3.700 -1.200h7.400l-.8 1.900h-5.800z" fill="#f4f4f4"/><path d="M0 .7V8.600" stroke="#f0f0f0" stroke-width="1.200"/></g><path d="M1.4 1.400L14.400 14.400" stroke="#d42020" stroke-width="1.200"/></g><g transform="translate(197.4,31.6)"><path d="M3 12.5L14 1.5" stroke="#f2f2f2" stroke-width="1.3"/><rect x="1.2" y="11.2" width="3" height="3" fill="none" stroke="#e08a22" stroke-width="1"/><circle cx="11.3" cy="12" r="2.5" fill="#16a070"/><circle cx="11.3" cy="12" r="1.2" fill="#cfe8ff"/></g><g transform="translate(213.7,31.6)"><rect x="1.8" y="1.8" width="11.2" height="11.2" rx="1.6" fill="none" stroke="#d8d8d8" stroke-width="1.1"/><text x="7.3" y="11.2" font-size="11" font-weight="700" font-family="Liberation Serif, serif" fill="#fff" text-anchor="middle">T</text><circle cx="12" cy="12" r="2.7" fill="#16a070"/><path d="M10.5 12h3M12 10.5v3" stroke="#fff" stroke-width="0.9"/></g><g transform="translate(230.3,31.6)"><rect x="1.8" y="1.8" width="11.2" height="11.2" rx="1.6" fill="none" stroke="#d8d8d8" stroke-width="1.1"/><text x="7.3" y="11.2" font-size="11" font-weight="700" font-family="Liberation Serif, serif" fill="#fff" text-anchor="middle">T</text><circle cx="12" cy="12" r="2.7" fill="#e08a22"/><path d="M10.6 13.2l2.8-2.6" stroke="#7a4a10" stroke-width="0.9"/></g><g transform="translate(254.0,31.6)"><rect x="1.5" y="6" width="9" height="8.5" rx="0.8" fill="#168a60"/><path d="M3 12.5h3v-3h2.5" stroke="#0b4a34" stroke-width="1" fill="none"/><circle cx="4" cy="8.5" r="0.8" fill="#0b4a34"/><rect x="10.3" y="1.8" width="3.2" height="5.6" rx="0.8" fill="#ddd"/><rect x="11.3" y="2.8" width="1.2" height="3.4" fill="#8a8a8a"/><path d="M5.5 6c.3-2 1.8-3 3.8-3" stroke="#e08a22" stroke-width="1.1" fill="none"/><path d="M8.3 1.6l2 1.5-2.2 1.2z" fill="#e08a22"/></g><g transform="translate(270.7,31.6)"><rect x="3.2" y="3.2" width="9.6" height="9.6" rx="0.8" fill="#fff"/><g stroke="#e0e0e0" stroke-width="0.8"><path d="M1 5h14M1 7h14M1 9h14M1 11h14M5 1v14M7 1v14M9 1v14M11 1v14"/></g><rect x="3.6" y="3.6" width="8.8" height="8.8" fill="#fff"/><path d="M5.2 4.8l5.6 2.4-2.2 .9 2 2.5-1 .8-2-2.5-1.4 1.8z" fill="#e08a22"/></g><g transform="translate(294.8,31.6)"><path d="M2.2 13h5.2V5h5" stroke="#c8c8c8" stroke-width="1.1" fill="none"/><circle cx="2.6" cy="12.8" r="1.9" fill="#e08a22"/><circle cx="7.4" cy="8.6" r="1.8" fill="#e08a22"/><circle cx="12.6" cy="4.6" r="1.8" fill="#e08a22"/></g><g transform="translate(311.0,31.6)"><path d="M7.800 3.200c0-1.700 2.800-1.700 2.800 0v4.300l2.300-.7c1.500-.4 2.200 1.500 .8 2.300l-2.900 1.700c-.3 2.400-1.900 3.600-4.500 3.600-2.900 0-4.800-1.500-4.800-3.800 0-2 1.700-3.300 4-3.500l2.300-.2z" fill="#fff"/><path d="M1.400 3.800l2.200-1.300v2.600zM14.600 3.800l-2.200-1.300v2.600z" fill="#e08a22"/><path d="M3 3.800h2.200M10.900 3.800h2.200" stroke="#e08a22" stroke-width="1"/></g><g transform="translate(328.0,31.6)"><path d="M4.2 13V3.600M11.800 3v9.400M4.200 12.400h4V3.600h3.600" stroke="#fff" stroke-width="1.200" fill="none"/><path d="M1.900 5.200l2.300-3.400 2.300 3.400zM9.500 11l2.300 3.400 2.300-3.400z" fill="#fff"/></g><g transform="translate(351.8,31.6)"><circle cx="8" cy="8" r="6.300" fill="none" stroke="#e8c8b0" stroke-width="0.9"/><path d="M8.400 2.200l1.500 3.800 4 .4-3.200 2.600 1.200 4.200-3.800-2.400-3.900 2.200 1.300-4.200-3.100-2.800 4-.2z" fill="#d02828" opacity="0.95"/><path d="M6.200 7l3.200-.6-.8 3.200z" fill="#2d2d2d"/></g><g transform="translate(368.4,31.6)"><circle cx="8" cy="8" r="6.300" fill="none" stroke="#c8dce8" stroke-width="0.9"/><path d="M8.400 2.200l1.500 3.800 4 .4-3.200 2.600 1.200 4.200-3.800-2.400-3.900 2.200 1.300-4.200-3.100-2.800 4-.2z" fill="#1a7a74" opacity="0.95"/><path d="M6.200 7l3.200-.6-.8 3.200z" fill="#2d2d2d"/></g><g transform="translate(385.0,31.6)"><circle cx="6.600" cy="6.600" r="4.800" fill="none" stroke="#f0f0f0" stroke-width="1.300"/><path d="M10.200 10.200l4.200 4.200" stroke="#f0f0f0" stroke-width="1.900" stroke-linecap="round"/><path d="M4.400 5.200h4.400M4.400 6.800h4.400M4.400 8.300h4.400" stroke="#ddd" stroke-width="0.9"/><path d="M12.800 2.500v5" stroke="#999" stroke-width="0.9" stroke-dasharray="0.8 0.6"/></g><g transform="translate(401.6,31.6)"><circle cx="6.600" cy="6.600" r="4.800" fill="none" stroke="#f0f0f0" stroke-width="1.300"/><path d="M10.200 10.200l4.200 4.200" stroke="#f0f0f0" stroke-width="1.900" stroke-linecap="round"/><path d="M4.800 4.800l3.600 3.600" stroke="#e08a22" stroke-width="1.100"/><circle cx="4.800" cy="4.800" r="1" fill="#e08a22"/><circle cx="8.400" cy="8.400" r="1" fill="#e08a22"/></g><g transform="translate(418.2,31.6)"><circle cx="6.600" cy="6.600" r="4.800" fill="none" stroke="#f0f0f0" stroke-width="1.300"/><path d="M10.200 10.200l4.200 4.200" stroke="#f0f0f0" stroke-width="1.900" stroke-linecap="round"/><path d="M4.200 6.600h4.800M6.600 4.200v4.800" stroke="#fff" stroke-width="1.300"/></g><g transform="translate(434.8,31.6)"><circle cx="6.600" cy="6.600" r="4.800" fill="none" stroke="#f0f0f0" stroke-width="1.300"/><path d="M10.200 10.200l4.200 4.200" stroke="#f0f0f0" stroke-width="1.900" stroke-linecap="round"/><path d="M4.200 6.600h4.800" stroke="#fff" stroke-width="1.300"/></g><g transform="translate(451.4,31.6)"><circle cx="6.600" cy="6.600" r="4.800" fill="none" stroke="#f0f0f0" stroke-width="1.300"/><path d="M10.200 10.200l4.200 4.200" stroke="#f0f0f0" stroke-width="1.900" stroke-linecap="round"/><path d="M7.800 4.600l-2.600 2 2.600 2" stroke="#e08a22" stroke-width="1.200" fill="none"/></g><g transform="translate(468.0,31.6)"><circle cx="6.600" cy="6.600" r="4.800" fill="none" stroke="#f0f0f0" stroke-width="1.300"/><path d="M10.200 10.200l4.200 4.200" stroke="#f0f0f0" stroke-width="1.900" stroke-linecap="round"/><path d="M3.400 6.600h6.400M6.600 3.400v6.400" stroke="#e08a22" stroke-width="0.9" stroke-dasharray="1.300 0.700"/></g><g transform="translate(484.6,31.6)"><g fill="none" stroke="#fff" stroke-width="2"><path d="M2.400 7.600a5.600 5.600 0 0 1 10-3.200"/><path d="M13.600 8.400a5.600 5.600 0 0 1-10 3.200"/></g><path d="M14.600 1v5.600h-5.600z" fill="#fff"/><path d="M1.400 15v-5.600h5.600z" fill="#fff"/></g><g transform="translate(501.0,31.6)"><path d="M2.200 2.200l7.600 .8 4.600 9.600-8.400 1.200z" fill="#18a868"/><path d="M2.200 2.200l-.2 1.400 3.800 11 .2-.8z" fill="#0c6a44"/><circle cx="7.400" cy="6.400" r="1.100" fill="#e8c020"/><circle cx="9.600" cy="8" r=".8" fill="#3a80e0"/><path d="M4.400 4.400l2 .2M6 9.400l3 1.800" stroke="#bff0d0" stroke-width=".7"/></g><text x="518.800" y="44.200" font-size="10.500" font-weight="700" font-family="Liberation Sans, sans-serif" fill="#858585" textLength="12.400" lengthAdjust="spacingAndGlyphs">3D</text><g transform="translate(541.3,31.6)"><path d="M1 4h11.500M1 7.400h8M1 10.800h5.500M3.600 1.200v12.500M7 1.200v8M10.400 1.200v5.500" stroke="#e4e4e4" stroke-width=".85"/><ellipse cx="11.400" cy="11.200" rx="4" ry="3.100" fill="#e08a22"/><ellipse cx="11.400" cy="11.200" rx="2.500" ry="1.500" fill="#2d2d2d"/><circle cx="12" cy="11.200" r="1.100" fill="#e08a22"/></g><g transform="translate(557.8,31.6)"><path d="M8 8L8 1.800A6.200 6.200 0 0 1 13.900 6.100z" fill="#2a7ad0"/><path d="M8 8L13.900 6.100A6.200 6.200 0 0 1 11.600 13z" fill="#1a60b0"/><path d="M8 8L11.600 13A6.200 6.200 0 0 1 8 14.200z" fill="#38a060"/><path d="M8 8L8 14.200A6.200 6.200 0 0 1 2.100 9.900z" fill="#e8a820"/><path d="M8 8L2.100 9.900A6.200 6.200 0 0 1 3 4.400z" fill="#e07828"/><path d="M8 8L3 4.400A6.200 6.200 0 0 1 8 1.800z" fill="#e03a3a"/><path d="M8 6.200l1.600 2.800h-3.200z" fill="#2d2d2d"/></g><g transform="translate(574.2,31.6)"><rect x="1.600" y="1.600" width="8.400" height="8.400" fill="#8a8a8a"/><rect x="3.800" y="3.800" width="8.600" height="8.600" fill="#2d2d2d" stroke="#e8e8e8" stroke-width="1"/><ellipse cx="11.400" cy="11.200" rx="4" ry="3.100" fill="#e08a22"/><ellipse cx="11.400" cy="11.200" rx="2.500" ry="1.500" fill="#2d2d2d"/><circle cx="12" cy="11.200" r="1.100" fill="#e08a22"/></g><g transform="translate(590.8,31.6)"><path d="M1.400 10.800l6.400-3 6.800 2.400-6.400 3.800z" fill="#e0b070"/><path d="M1.400 8.600l6.400-3 6.800 2.400-6.400 3.800z" fill="#f0e0c0"/><path d="M1.400 6l6.400-3.800 6.800 2.600-6.400 4.200z" fill="#18a070"/><path d="M1.400 6v1.400l6.800 3 6.400-4.200V4.800l-6.400 4.200z" fill="#0e7850"/><path d="M7 5l3-.6M6.400 6.600l2.400.6" stroke="#e8d8a0" stroke-width=".8"/></g><g transform="translate(607.2,31.6)"><path d="M2.800 1.400h7l3.400 3.400v9.800H2.800z" fill="#fff"/><path d="M9.800 1.400v3.400h3.400z" fill="#bdbdbd"/><g><rect x="4.200" y="7.200" width="2" height="1.300" fill="#3a8ad0"/><rect x="7" y="7.200" width="2" height="1.300" fill="#e04040"/><rect x="9.800" y="7.200" width="2" height="1.300" fill="#e04040"/><rect x="4.200" y="9.400" width="2" height="1.300" fill="#30a070"/><rect x="7" y="9.400" width="2" height="1.300" fill="#e04040"/><rect x="9.800" y="9.400" width="2" height="1.300" fill="#3a8ad0"/><rect x="4.200" y="11.600" width="2" height="1.300" fill="#e04040"/><rect x="7" y="11.600" width="2" height="1.300" fill="#30a070"/><rect x="9.800" y="11.600" width="2" height="1.300" fill="#e04040"/></g></g><g transform="translate(623.6,31.6)"><path d="M2.800 1.400h7l3.400 3.400v9.800H2.800z" fill="#fff"/><path d="M9.800 1.400v3.400h3.400z" fill="#bdbdbd"/><circle cx="8" cy="9.400" r="2.900" fill="none" stroke="#3a3a3a" stroke-width="1.400" stroke-dasharray="1.300 .98"/><circle cx="8" cy="9.400" r="2.500" fill="#3a3a3a"/><circle cx="8" cy="9.400" r="1" fill="#8a8a8a"/></g><g transform="translate(647.8,31.6)"><path d="M1 8c2-3.400 4.600-4.600 7-4.600s5 1.200 7 4.600c-2 3.400-4.600 4.600-7 4.600S3 11.400 1 8z" fill="#fff"/><circle cx="8" cy="8" r="2.300" fill="#2a7ad0"/></g><g transform="translate(664.2,31.6)"><path d="M1.600 1.400h6l3 3v8.400H1.600z" fill="#f4f4f4"/><path d="M7.600 1.400v3h3z" fill="#bbb"/><rect x="3" y="6" width="1.600" height="1.600" fill="#e04040"/><rect x="5.400" y="6" width="1.600" height="1.600" fill="#30a070"/><rect x="3" y="8.400" width="1.600" height="1.600" fill="#e8a820"/><rect x="5.400" y="8.400" width="1.600" height="1.600" fill="#3a8ad0"/><circle cx="11" cy="11" r="3.800" fill="#2a7ad0"/><path d="M11 9.800v3.200" stroke="#fff" stroke-width="1.100"/><circle cx="11" cy="8.500" r=".7" fill="#fff"/></g><g transform="translate(680.8,31.6)"><path d="M1.600 1.400h2.600v10.400h10.400v2.600h-13z" fill="#d8b078"/><path d="M2.400 3.400h1.200M2.400 5.400h1.200M2.400 7.400h1.200M2.400 9.400h1.200M6 13v-1M8 13v-1M10 13v-1M12 13v-1" stroke="#6a4a20" stroke-width=".7"/><path d="M10 2l4 1.800v4.600l-4 2-4-2V3.800z" fill="#fff"/><path d="M6 3.800l4 1.800 4-1.800M10 5.600v4.800" stroke="#444" stroke-width=".9" fill="none"/></g><g transform="translate(697.4,31.6)"><path d="M8 2.200c3.800 0 6.600 2.200 6.600 5.400 0 3.600-3 5.800-6.600 5.800-1.400 0-1.400-1.200-.6-2 .8-1-.2-2-1.600-1.600-2 .4-4.200-.4-4.200-2.600C1.600 4.400 4.400 2.200 8 2.200z" fill="#fff"/><circle cx="4.600" cy="6" r="1" fill="#e8a820"/><circle cx="7" cy="4.200" r="1" fill="#3a8ad0"/><circle cx="11.600" cy="9.400" r="1" fill="#3a8ad0"/><circle cx="9.400" cy="11.200" r="1" fill="#e04040"/><path d="M14.400 1L4 12.400" stroke="#2d2d2d" stroke-width="2.600"/><path d="M14.400 1L5 11.400" stroke="#fff" stroke-width="1.300"/><path d="M5 11.400l-2.400 3.200 3.400-2.200z" fill="#7060c0"/></g><g transform="translate(713.8,31.6)"><circle cx="8" cy="8" r="2.800" fill="none" stroke="#fff" stroke-width="1.400"/><path d="M12.50 8.00L14.80 8.00M11.18 11.18L12.81 12.81M8.00 12.50L8.00 14.80M4.82 11.18L3.19 12.81M3.50 8.00L1.20 8.00M4.82 4.82L3.19 3.19M8.00 3.50L8.00 1.20M11.18 4.82L12.81 3.19" stroke="#fff" stroke-width="1.300"/></g><g transform="translate(730.4,31.6)"><circle cx="8" cy="8" r="2.800" fill="none" stroke="#fff" stroke-width="1.400"/><path d="M12.50 8.00L14.80 8.00M11.18 11.18L12.81 12.81M8.00 12.50L8.00 14.80M4.82 11.18L3.19 12.81M3.50 8.00L1.20 8.00M4.82 4.82L3.19 3.19M8.00 3.50L8.00 1.20M11.18 4.82L12.81 3.19" stroke="#fff" stroke-width="1.300"/><path d="M1.600 1.600l12.800 12" stroke="#d42020" stroke-width="1.200"/></g><g transform="translate(754.2,31.6)"><path d="M7.600 1.400l6 4.400-2.200 7H3.800l-2.200-7z" fill="#b4b4b4" stroke="#f0f0f0" stroke-width=".9"/><circle cx="12.200" cy="12" r="2.800" fill="#16a070"/><path d="M10.500 12h3.400M12.200 10.300v3.400" stroke="#fff" stroke-width="1"/></g><g transform="translate(770.8,31.6)"><rect x="1.600" y="3.600" width="11.800" height="7" fill="#b4b4b4" stroke="#f0f0f0" stroke-width=".9"/><circle cx="12.200" cy="12" r="2.800" fill="#16a070"/><path d="M10.500 12h3.400M12.200 10.300v3.400" stroke="#fff" stroke-width="1"/></g><g transform="translate(787.4,31.6)"><circle cx="7.400" cy="7.400" r="5.400" fill="#b4b4b4" stroke="#f0f0f0" stroke-width=".9"/><circle cx="12.200" cy="12" r="2.800" fill="#16a070"/><path d="M10.500 12h3.400M12.200 10.300v3.400" stroke="#fff" stroke-width="1"/></g><g transform="translate(804.4,31.6)"><rect x="1.600" y="1.800" width="12.800" height="12.400" fill="#a8a8a8" stroke="#e0e0e0" stroke-width=".9"/><path d="M4.600 5l7.200 2.800-2.800 1.200 2.400 3-1.200 1-2.400-3-1.800 2.400z" fill="#1c1c1c"/></g><g transform="translate(821.0,31.6)"><rect x="2.200" y="2.600" width="11.400" height="11.400" fill="#1c1c1c" stroke="#f0f0f0" stroke-width=".9"/><path d="M13.600 2.600v11.400H2.200z" fill="#fff"/><circle cx="2.200" cy="2.600" r="1.300" fill="#e08a22"/></g><g transform="translate(844.4,31.6)"><path d="M2 2.200h3.600c2 0 3.400 .6 4 2H6v1.200H2z" fill="#eee"/><path d="M3 5.400h1.800v9H3z" fill="#d0d0d0"/><path d="M3 8h1.800" stroke="#888" stroke-width=".6"/><rect x="8" y="7.200" width="6.400" height="7" rx=".8" fill="#fff"/><rect x="9" y="9.200" width="4.400" height="4" fill="#2a4a5a"/><rect x="9.800" y="6.600" width="2.800" height="1.600" fill="#fff"/></g><g transform="translate(861.0,31.6)"><path d="M2 2.200h3.600c2 0 3.400 .6 4 2H6v1.200H2z" fill="#eee"/><path d="M3 5.400h1.800v9H3z" fill="#d0d0d0"/><path d="M3 8h1.800" stroke="#888" stroke-width=".6"/><path d="M7.600 8l6.400 6.400M14 8l-6.400 6.400" stroke="#fff" stroke-width="1.500"/><circle cx="8" cy="8.400" r="1.300" fill="#fff"/></g><g transform="translate(877.6,31.6)"><path d="M1.400 4.800h2.800l1.200-1.800h4.400l1.200 1.800h2.600v7.800H1.400z" fill="#fff"/><circle cx="7.400" cy="8.400" r="2.400" fill="#2d2d2d"/><circle cx="7.400" cy="8.400" r="1.200" fill="#fff"/><rect x="10" y="9.400" width="4.600" height="4.600" rx="1" fill="#2d2d2d" stroke="#fff" stroke-width="1.100"/></g><g transform="translate(894.0,31.6)"><rect x="1.400" y="2.200" width="12.800" height="3.400" fill="#c8c8c8"/><path d="M1.400 1.400v5M14.200 1.400v5" stroke="#fff" stroke-width="1"/><rect x="1.600" y="8" width="3.600" height="3" fill="#8a8a8a"/><circle cx="10.800" cy="11" r="3.800" fill="#e08a22"/><path d="M9.400 12.800l1.400-3.600 1.400 3.600" stroke="#2d2d2d" stroke-width="1" fill="none"/></g><g transform="translate(918.4,31.6)"><path d="M2.400 1.400h7.400l3 3v10H2.400z" fill="#fff"/><path d="M9.800 1.400v3h3z" fill="#bbb"/><circle cx="6" cy="4.200" r="1.400" fill="#e08a22"/><path d="M3.600 9.400c0-2.400 1-3.400 2.400-3.400s2.400 1 2.400 3.400z" fill="#1a9a60"/><rect x="4.400" y="10.600" width="3.200" height="2.400" fill="#888"/><rect x="8.600" y="10" width="1.100" height="3" fill="#3a8ad0"/><rect x="10.200" y="8.400" width="1.100" height="4.600" fill="#3a8ad0"/><rect x="11.700" y="6.800" width="1.100" height="6.200" fill="#3a8ad0"/></g><g transform="translate(935.0,31.6)"><path d="M1.400 4.400L8 8l-6.600 3.600zM14.600 4.400L8 8l6.600 3.600z" fill="#fff"/><path d="M4 3.400c1.600-2 5.400-2.400 7.400 0" stroke="#e08a22" stroke-width="1.100" fill="none"/><path d="M12.400 1.400l-.4 3-2.600-.8z" fill="#e08a22"/><path d="M12 12.600c-1.600 2-5.400 2.400-7.400 0" stroke="#e08a22" stroke-width="1.100" fill="none"/><path d="M3.600 14.600l.4-3 2.600.8z" fill="#e08a22"/></g><g transform="translate(951.6,31.6)"><path d="M1.800 2h12.600c.6 0 1 .4 1 1v6.800c0 .6-.4 1-1 1H6.800L4 14.200v-3.400H1.800c-.6 0-1-.4-1-1V3c0-.6 .4-1 1-1z" fill="#fff"/><path d="M3.200 4.400h10M3.200 6.300h10M3.200 8.200h10" stroke="#2d2d2d" stroke-width=".7"/></g></svg>
<div class="b" style="left:0;top:24.7px;width:161.2px;height:495.6px;background:#fff;border-radius:5px 7px 5px 5px;overflow:hidden;box-shadow:0 0 0 0.5px #777;"><div class="b" style="left:0;top:0;width:161.5px;height:19.2px;background:#f3f3f3;"></div><div class="b" style="left:0;top:19.2px;width:161.5px;height:21.8px;background:#272727;"></div><div class="b" style="left:154.2px;top:399.5px;width:3.2px;height:95px;background:#8a8a8a;"></div></div>
<div class="t" style="left:17.3px;top:27.9px;font-size:9.6px;line-height:13px;color:#3a3a3a;transform-origin:0 50%;transform:scaleX(0.7994);">Show Prope...</div>
<svg width="170" height="70" viewBox="0 0 170 70"><rect x="3.9" y="29" width="9.9" height="9.9" rx="1.5" fill="#161c2a" stroke="#c8202a" stroke-width="0.7"/><line x1="6.2" y1="36.5" x2="11.3" y2="31.3" stroke="#e03030" stroke-width="1.1"/><circle cx="6.3" cy="31.5" r="1.35" fill="#fff"/><circle cx="11.2" cy="36.4" r="1.35" fill="#fff"/><circle cx="6.3" cy="36.4" r="1.2" fill="#fff"/><circle cx="11.2" cy="31.5" r="1.2" fill="#fff"/><path d="M80 33.7h6.6" stroke="#555" stroke-width="0.9"/><rect x="111.3" y="31.2" width="6" height="6" rx="0.8" fill="none" stroke="#444" stroke-width="0.9"/><path d="M142.5 31.3l6 6m0-6l-6 6" stroke="#444" stroke-width="0.9"/><g transform="translate(10,54.2) rotate(45) scale(1.08)"><rect x="-3.1" y="-7.4" width="6.2" height="1.7" rx=".5" fill="#f4f4f4"/><path d="M-2.1 -5.7h4.2l.5 4.500h-5.200z" fill="#e6e6e6"/><path d="M-3.700 -1.200h7.400l-.8 1.900h-5.800z" fill="#f4f4f4"/><path d="M0 .7V8.600" stroke="#f0f0f0" stroke-width="1.200"/></g><path d="M2 46.800L16.500 62" stroke="#d42020" stroke-width="1.200"/><path d="M24 49.5l10.5 10.5M34.5 49.5L24 60" stroke="#fff" stroke-width="1.7"/><path d="M41.5 48.2h5.6l1.4 1.6h7.8v2.2h-11l-3.8 7.2z" fill="#c89858"/><path d="M45.5 52.6h11.8l-3.2 7.4h-12.6z" fill="#e0b070"/><path d="M61.6 47.8h12.2l3 3v12h-15.2z" fill="#fff"/><rect x="65" y="47.8" width="7.6" height="4.4" fill="#272727"/><rect x="70" y="48.5" width="1.6" height="3" fill="#fff"/><rect x="64" y="55.2" width="10.4" height="6.6" fill="#272727"/><rect x="65.2" y="56.8" width="8" height="1.3" fill="#fff"/><rect x="65.2" y="59.3" width="8" height="1.3" fill="#fff"/><g fill="none" stroke="#fff" stroke-width="2.2"><path d="M82.3 54.5a6.3 6.3 0 0 1 11.3-3.6"/><path d="M95 56a6.3 6.3 0 0 1-11.3 3.6"/></g><path d="M96.4 46.8v6.2h-6.2z" fill="#fff"/><path d="M80.9 63.6v-6.2h6.2z" fill="#fff"/><rect x="102.8" y="47.5" width="10.6" height="5" fill="none" stroke="#fff" stroke-width="1.1"/><rect x="100.4" y="51.5" width="15.4" height="8" rx="1.2" fill="#fff"/><rect x="103.2" y="56" width="9.8" height="6.6" fill="#8e8e8e" stroke="#fff" stroke-width="1"/><rect x="104.6" y="58" width="7" height="1" fill="#555"/><rect x="104.6" y="60.2" width="7" height="1" fill="#555"/><circle cx="113.3" cy="53.6" r="0.7" fill="#444"/><circle cx="128" cy="55" r="7.6" fill="#2a7fd4"/><circle cx="128" cy="55" r="6" fill="none" stroke="#fff" stroke-width="0.9"/><text x="128" y="58.6" font-size="10" font-family="Liberation Sans, sans-serif" fill="#fff" text-anchor="middle">?</text><path d="M153.700 53.300l2.200 1.900-2.200 1.900M155.900 53.300l2.200 1.900-2.200 1.900" stroke="#e0e0e0" stroke-width=".8" fill="none"/></svg>
<div class="b" style="left:0;top:68.7px;width:153px;height:451px;overflow:hidden;">
<div class="t" style="left:3.0px;top:-4.0px;font-size:7.1px;line-height:10px;color:#3c3c3c;font-family:'Liberation Mono',monospace;">Via at 9825.00,1425.00</div>
<div class="t" style="left:3.0px;top:4.3px;font-size:7.1px;line-height:10px;color:#3c3c3c;font-family:'Liberation Mono',monospace;">   CLIP_DRAWING = CLIP_11</div>
<div class="t" style="left:3.0px;top:21.6px;font-size:7.1px;line-height:10px;color:#3c3c3c;font-family:'Liberation Mono',monospace;">Via at 9825.00,1475.00</div>
<div class="t" style="left:3.0px;top:29.9px;font-size:7.1px;line-height:10px;color:#3c3c3c;font-family:'Liberation Mono',monospace;">   CLIP_DRAWING = CLIP_11</div>
<div class="t" style="left:3.0px;top:47.2px;font-size:7.1px;line-height:10px;color:#3c3c3c;font-family:'Liberation Mono',monospace;">Via at 9825.00,1525.00</div>
<div class="t" style="left:3.0px;top:55.5px;font-size:7.1px;line-height:10px;color:#3c3c3c;font-family:'Liberation Mono',monospace;">   CLIP_DRAWING = CLIP_11</div>
<div class="t" style="left:3.0px;top:72.8px;font-size:7.1px;line-height:10px;color:#3c3c3c;font-family:'Liberation Mono',monospace;">Via at 9825.00,1575.00</div>
<div class="t" style="left:3.0px;top:81.1px;font-size:7.1px;line-height:10px;color:#3c3c3c;font-family:'Liberation Mono',monospace;">   CLIP_DRAWING = CLIP_11</div>
<div class="t" style="left:3.0px;top:98.3px;font-size:7.1px;line-height:10px;color:#3c3c3c;font-family:'Liberation Mono',monospace;">Via at 9850.00,985.00</div>
<div class="t" style="left:3.0px;top:106.6px;font-size:7.1px;line-height:10px;color:#3c3c3c;font-family:'Liberation Mono',monospace;">   CLIP_DRAWING = CLIP_11</div>
<div class="t" style="left:3.0px;top:123.9px;font-size:7.1px;line-height:10px;color:#3c3c3c;font-family:'Liberation Mono',monospace;">Via at 9875.00,1025.00</div>
<div class="t" style="left:3.0px;top:132.2px;font-size:7.1px;line-height:10px;color:#3c3c3c;font-family:'Liberation Mono',monospace;">   CLIP_DRAWING = CLIP_11</div>
<div class="t" style="left:3.0px;top:149.5px;font-size:7.1px;line-height:10px;color:#3c3c3c;font-family:'Liberation Mono',monospace;">Via at 9875.00,1075.00</div>
<div class="t" style="left:3.0px;top:157.8px;font-size:7.1px;line-height:10px;color:#3c3c3c;font-family:'Liberation Mono',monospace;">   CLIP_DRAWING = CLIP_11</div>
<div class="t" style="left:3.0px;top:175.1px;font-size:7.1px;line-height:10px;color:#3c3c3c;font-family:'Liberation Mono',monospace;">Via at 9875.00,1525.00</div>
<div class="t" style="left:3.0px;top:183.4px;font-size:7.1px;line-height:10px;color:#3c3c3c;font-family:'Liberation Mono',monospace;">   CLIP_DRAWING = CLIP_11</div>
<div class="t" style="left:3.0px;top:200.7px;font-size:7.1px;line-height:10px;color:#3c3c3c;font-family:'Liberation Mono',monospace;">Via at 9875.00,1575.00</div>
<div class="t" style="left:3.0px;top:209.0px;font-size:7.1px;line-height:10px;color:#3c3c3c;font-family:'Liberation Mono',monospace;">   CLIP_DRAWING = CLIP_11</div>
<div class="t" style="left:3.0px;top:226.2px;font-size:7.1px;line-height:10px;color:#3c3c3c;font-family:'Liberation Mono',monospace;">Via at 9900.00,985.00</div>
<div class="t" style="left:3.0px;top:234.5px;font-size:7.1px;line-height:10px;color:#3c3c3c;font-family:'Liberation Mono',monospace;">   CLIP_DRAWING = CLIP_11</div>
<div class="t" style="left:3.0px;top:251.8px;font-size:7.1px;line-height:10px;color:#3c3c3c;font-family:'Liberation Mono',monospace;">Via at 9925.00,1025.00</div>
<div class="t" style="left:3.0px;top:260.1px;font-size:7.1px;line-height:10px;color:#3c3c3c;font-family:'Liberation Mono',monospace;">   CLIP_DRAWING = CLIP_11</div>
<div class="t" style="left:3.0px;top:277.4px;font-size:7.1px;line-height:10px;color:#3c3c3c;font-family:'Liberation Mono',monospace;">Via at 9925.00,1075.00</div>
<div class="t" style="left:3.0px;top:285.7px;font-size:7.1px;line-height:10px;color:#3c3c3c;font-family:'Liberation Mono',monospace;">   CLIP_DRAWING = CLIP_11</div>
<div class="t" style="left:3.0px;top:303.0px;font-size:7.1px;line-height:10px;color:#3c3c3c;font-family:'Liberation Mono',monospace;">Via at 9925.00,1525.00</div>
<div class="t" style="left:3.0px;top:311.3px;font-size:7.1px;line-height:10px;color:#3c3c3c;font-family:'Liberation Mono',monospace;">   CLIP_DRAWING = CLIP_11</div>
<div class="t" style="left:3.0px;top:328.6px;font-size:7.1px;line-height:10px;color:#3c3c3c;font-family:'Liberation Mono',monospace;">Via at 9925.00,1575.00</div>
<div class="t" style="left:3.0px;top:336.9px;font-size:7.1px;line-height:10px;color:#3c3c3c;font-family:'Liberation Mono',monospace;">   CLIP_DRAWING = CLIP_11</div>
<div class="t" style="left:3.0px;top:354.1px;font-size:7.1px;line-height:10px;color:#3c3c3c;font-family:'Liberation Mono',monospace;">Via at 9975.00,1025.00</div>
<div class="t" style="left:3.0px;top:362.4px;font-size:7.1px;line-height:10px;color:#3c3c3c;font-family:'Liberation Mono',monospace;">   CLIP_DRAWING = CLIP_11</div>
<div class="t" style="left:3.0px;top:379.7px;font-size:7.1px;line-height:10px;color:#3c3c3c;font-family:'Liberation Mono',monospace;">Via at 9975.00,1075.00</div>
<div class="t" style="left:3.0px;top:388.0px;font-size:7.1px;line-height:10px;color:#3c3c3c;font-family:'Liberation Mono',monospace;">   CLIP_DRAWING = CLIP_11</div>
<div class="t" style="left:3.0px;top:405.3px;font-size:7.1px;line-height:10px;color:#3c3c3c;font-family:'Liberation Mono',monospace;">Via at 9975.00,1525.00</div>
<div class="t" style="left:3.0px;top:413.6px;font-size:7.1px;line-height:10px;color:#3c3c3c;font-family:'Liberation Mono',monospace;">   CLIP_DRAWING = CLIP_11</div>
<div class="t" style="left:3.0px;top:430.9px;font-size:7.1px;line-height:10px;color:#3c3c3c;font-family:'Liberation Mono',monospace;">Via at 9975.00,1575.00</div>
<div class="t" style="left:3.0px;top:439.2px;font-size:7.1px;line-height:10px;color:#3c3c3c;font-family:'Liberation Mono',monospace;">   CLIP_DRAWING = CLIP_11</div>
</div>
<div class="b" style="left:501.2px;top:120.6px;width:507.3px;height:323.4px;background:#2c2c2c;border-radius:5px 5px 6px 6px;box-shadow:0 3px 14px 2px rgba(0,0,0,0.55),0 0 0 0.7px #4a4a4a;overflow:hidden;"><div class="b" style="left:0;top:0;width:508px;height:19.6px;background:#f3f3f3;"></div><div class="b" style="left:0;top:311.6px;width:508px;height:1px;background:#404040;"></div><div class="b" style="left:33.4px;top:312px;width:1px;height:12px;background:#404040;"></div><div class="b" style="left:498px;top:312px;width:1px;height:12px;background:#404040;"></div></div>
<div class="t" style="left:519.8px;top:123.8px;font-size:9.6px;line-height:13px;color:#8a8a8a;transform-origin:0 50%;transform:scaleX(0.8146);">Edit Property</div>
<div class="t" style="left:547.6px;top:146.2px;font-size:8.3px;line-height:12px;color:#ececec;transform-origin:0 50%;transform:scaleX(0.8283);">Available Properties - Predictive Search Result</div>
<div class="t" style="left:520.6px;top:157.0px;font-size:8.3px;line-height:12px;color:#ececec;transform-origin:0 50%;transform:scaleX(0.8602);">(Single-click to view description / Double-click to add property)</div>
<div class="b" style="left:511.0px;top:175.0px;width:224.5px;height:111.0px;background:#3c3c3c;border:1px solid #585858;"></div>
<div class="b" style="left:511.8px;top:175.8px;width:222.9px;height:10.0px;background:#0078d7;"></div>
<div class="t" style="left:513.4px;top:174.8px;font-size:8.3px;line-height:12px;color:#fff;transform-origin:0 50%;transform:scaleX(0.7687);">Fixed</div>
<div class="t" style="left:513.4px;top:185.0px;font-size:8.3px;line-height:12px;color:#ececec;transform-origin:0 50%;transform:scaleX(0.7795);">Dyn_Fixed_Therm_Width_Array</div>
<div class="t" style="left:513.4px;top:195.1px;font-size:8.3px;line-height:12px;color:#ececec;transform-origin:0 50%;transform:scaleX(0.8343);">Aligned</div>
<div class="t" style="left:513.4px;top:205.2px;font-size:8.3px;line-height:12px;color:#ececec;transform-origin:0 50%;transform:scaleX(0.8227);">Nodrc_Vialist</div>
<div class="t" style="left:513.4px;top:215.4px;font-size:8.3px;line-height:12px;color:#ececec;transform-origin:0 50%;transform:scaleX(0.7553);">Dyn_Thermal_Best_Fit</div>
<div class="t" style="left:513.4px;top:225.6px;font-size:8.3px;line-height:12px;color:#ececec;transform-origin:0 50%;transform:scaleX(0.8043);">Nodrc_Vias_Outside_Keepin</div>
<div class="t" style="left:513.4px;top:235.7px;font-size:8.3px;line-height:12px;color:#ececec;transform-origin:0 50%;transform:scaleX(0.7878);">Dyn_Oversize_Therm_Width_Array</div>
<div class="t" style="left:513.4px;top:245.9px;font-size:8.3px;line-height:12px;color:#ececec;transform-origin:0 50%;transform:scaleX(0.7687);">Bond_Pad</div>
<div class="t" style="left:513.4px;top:256.0px;font-size:8.3px;line-height:12px;color:#ececec;transform-origin:0 50%;transform:scaleX(0.8028);">Net_Short</div>
<div class="t" style="left:513.4px;top:266.2px;font-size:8.3px;line-height:12px;color:#ececec;transform-origin:0 50%;transform:scaleX(0.7811);">Dyn_Min_Thermal_Conns</div>
<div class="t" style="left:514.9px;top:291.6px;font-size:8.3px;line-height:12px;color:#ececec;transform-origin:0 50%;transform:scaleX(0.8022);">Smart Search</div>
<div class="b" style="left:558.2px;top:291.5px;width:106.5px;height:11.2px;background:#3c3c3c;border:1px solid #5a5a5a;"></div>
<div class="t" style="left:560.6px;top:292.0px;font-size:8.3px;line-height:12px;color:#ececec;transform-origin:0 50%;transform:scaleX(0.8072);">fix</div>
<div class="b" style="left:671.0px;top:291.5px;width:49.0px;height:11.2px;background:#484848;border:1px solid #5c5c5c;"></div>
<div class="t" style="left:687.3px;top:292.5px;font-size:7.9px;line-height:11px;color:#f0f0f0;transform-origin:0 50%;transform:scaleX(0.8720);">Clear</div>
<div class="t" style="left:586.7px;top:307.2px;font-size:8.3px;line-height:12px;color:#ececec;transform-origin:0 50%;transform:scaleX(0.8525);">Property Description</div>
<div class="b" style="left:510.9px;top:318.3px;width:222.6px;height:91.0px;background:#3c3c3c;border:1px solid #585858;"></div>
<div class="t" style="left:515.2px;top:321.8px;font-size:8.3px;line-height:12px;color:#ececec;transform-origin:0 50%;transform:scaleX(0.8357);">The FIXED property, attached to components, symbols, nets, pins,</div>
<div class="t" style="left:515.2px;top:331.0px;font-size:8.3px;line-height:12px;color:#ececec;transform-origin:0 50%;transform:scaleX(0.8270);">vias, clines, lines, filled rectangles (frectangles), rectangles, shapes,</div>
<div class="t" style="left:515.2px;top:340.1px;font-size:8.3px;line-height:12px;color:#ececec;transform-origin:0 50%;transform:scaleX(0.8552);">and groups, indicates that the components cannot be edited.</div>
<div class="b" style="left:510.9px;top:412.2px;width:49.0px;height:11.6px;background:#484848;border:1px solid #5c5c5c;"></div>
<div class="t" style="left:530.4px;top:413.4px;font-size:7.9px;line-height:11px;color:#f0f0f0;transform-origin:0 50%;transform:scaleX(0.8720);">OK</div>
<div class="b" style="left:565.8px;top:412.2px;width:49.0px;height:11.6px;background:#484848;border:1px solid #5c5c5c;"></div>
<div class="t" style="left:579.6px;top:413.4px;font-size:7.9px;line-height:11px;color:#f0f0f0;transform-origin:0 50%;transform:scaleX(0.8720);">Cancel</div>
<div class="b" style="left:620.0px;top:412.2px;width:49.4px;height:11.6px;background:#484848;border:1px solid #5c5c5c;"></div>
<div class="t" style="left:637.6px;top:413.4px;font-size:7.9px;line-height:11px;color:#f0f0f0;transform-origin:0 50%;transform:scaleX(0.8720);">Help</div>
<div class="b" style="left:746.0px;top:414.3px;width:49.0px;height:11.6px;background:#484848;border:1px solid #5c5c5c;"></div>
<div class="t" style="left:761.5px;top:415.5px;font-size:7.9px;line-height:11px;color:#f0f0f0;transform-origin:0 50%;transform:scaleX(0.8720);">Reset</div>
<div class="b" style="left:800.2px;top:414.3px;width:49.4px;height:11.6px;background:#484848;border:1px solid #5c5c5c;"></div>
<div class="t" style="left:816.3px;top:415.5px;font-size:7.9px;line-height:11px;color:#f0f0f0;transform-origin:0 50%;transform:scaleX(0.8720);">Apply</div>
<div class="b" style="left:854.2px;top:414.3px;width:49.3px;height:11.6px;background:#484848;border:1px solid #5c5c5c;"></div>
<div class="t" style="left:866.4px;top:415.5px;font-size:7.9px;line-height:11px;color:#f0f0f0;transform-origin:0 50%;transform:scaleX(0.8720);">Show</div>
<div class="t" style="left:826.8px;top:146.1px;font-size:8.3px;line-height:12px;color:#ececec;transform-origin:0 50%;transform:scaleX(0.8361);">Assigned Properties</div>
<div class="t" style="left:746.4px;top:160.0px;font-size:8.3px;line-height:12px;color:#fff;font-weight:700;transform-origin:0 50%;transform:scaleX(0.8470);">Delete</div>
<div class="t" style="left:802.4px;top:160.0px;font-size:8.3px;line-height:12px;color:#fff;font-weight:700;transform-origin:0 50%;transform:scaleX(0.8204);">Property</div>
<div class="t" style="left:938.3px;top:160.0px;font-size:8.3px;line-height:12px;color:#fff;font-weight:700;transform-origin:0 50%;transform:scaleX(0.8162);">Value</div>
<div class="b" style="left:752.5px;top:178.6px;width:6.2px;height:6.0px;background:#fff;"></div>
<div class="b" style="left:752.5px;top:192.2px;width:6.2px;height:6.0px;background:#fff;"></div>
<div class="t" style="left:782.4px;top:176.0px;font-size:8.3px;line-height:12px;color:#ececec;transform-origin:0 50%;transform:scaleX(0.8023);">Clip_Drawing</div>
<div class="t" style="left:782.4px;top:189.3px;font-size:8.3px;line-height:12px;color:#ececec;transform-origin:0 50%;transform:scaleX(0.7785);">Fixed</div>
<div class="b" style="left:910.0px;top:175.2px;width:90.7px;height:11.9px;background:#3c3c3c;border:1px solid #5e5e5e;"></div>
<div class="b" style="left:910.0px;top:189.0px;width:52.7px;height:11.7px;background:#424242;border:1px solid #5e5e5e;"></div>
<div class="t" style="left:912.0px;top:188.9px;font-size:8.3px;line-height:12px;color:#ececec;transform-origin:0 50%;transform:scaleX(0.7877);">True</div>
<svg width="1024" height="544" viewBox="0 0 1024 544"><rect x="506.8" y="125.6" width="9.9" height="9.9" rx="1.5" fill="#161c2a" stroke="#c8202a" stroke-width="0.7"/><line x1="509.1" y1="133.1" x2="514.2" y2="127.9" stroke="#e03030" stroke-width="1.1"/><circle cx="509.2" cy="128.1" r="1.35" fill="#fff"/><circle cx="514.1" cy="133" r="1.35" fill="#fff"/><circle cx="509.2" cy="133" r="1.2" fill="#fff"/><circle cx="514.1" cy="128.1" r="1.2" fill="#fff"/><path d="M927 129.6h6.6" stroke="#a8a8a8" stroke-width="0.9"/><rect x="957.8" y="126.8" width="6" height="6" rx="0.8" fill="none" stroke="#666" stroke-width="0.9"/><path d="M989.5 126.8l6 6m0-6l-6 6" stroke="#666" stroke-width="0.9"/><path d="M954.3 192.4h5.6l-2.8 3.8z" fill="#fff"/><path d="M895.2 419h4.8l-2.4 2.6z" fill="#fff"/><path d="M1003.5 442l3.5-3.5M1005.5 442l1.5-1.5" stroke="#8a8a8a" stroke-width="0.7"/></svg>
</div></body></html>
